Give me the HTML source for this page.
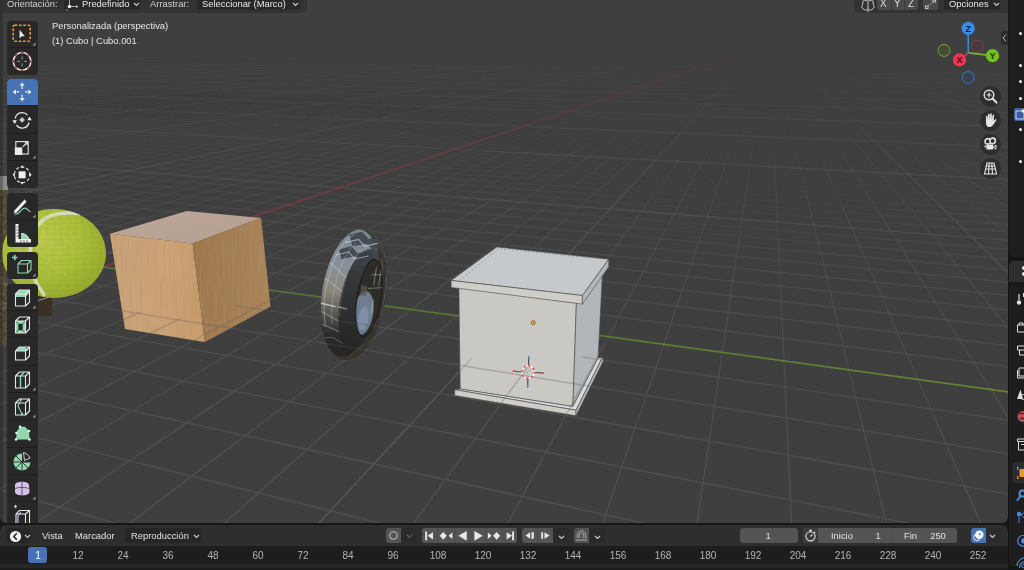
<!DOCTYPE html>
<html><head><meta charset="utf-8">
<style>
*{margin:0;padding:0;box-sizing:border-box}
html,body{width:1024px;height:570px;overflow:hidden;background:#161616;font-family:"Liberation Sans",sans-serif;color:#e6e6e6}
.abs{position:absolute}
#vp{position:absolute;left:0;top:0;width:1008px;height:523px;background:#3f3f3f;border-radius:0 0 6px 6px;overflow:hidden}
#scene{position:absolute;left:0;top:0}
.txt{position:absolute;white-space:nowrap;font-size:9.4px;line-height:1;will-change:transform}
.hdr{position:absolute;top:0;height:12.5px;background:rgba(48,48,48,0.75);}
.dd{position:absolute;top:0;height:10px;background:#282828;border-radius:0 0 3px 3px}
.tb{position:absolute;left:7px;width:31px;background:#282828;border-radius:4px;overflow:hidden}
.tb .b{position:relative;height:27px;border-bottom:1px solid #1e1e1e}
.tb .b:last-child{border-bottom:none}
.tb svg{position:absolute;left:0;top:0}
.nav{position:absolute;left:979.5px;width:21px;height:21px;border-radius:50%;background:rgba(40,40,40,0.75)}
.nav svg{position:absolute;left:0;top:0}
#tl{position:absolute;left:0;top:524.5px;width:1008px;height:46px;background:#1d1d1d;border-radius:6px 6px 0 0;overflow:hidden}
#tlh{position:absolute;left:0;top:0;width:1008px;height:21px;background:#2e2e2e}
.btn{position:absolute;height:15px;border-radius:3px}
.num{will-change:transform;position:absolute;top:550.7px;font-size:10px;line-height:1;color:#b4b4b4;transform:translateX(-50%)}
</style></head><body>
<div id="vp">
<svg id="scene" width="1008" height="523" viewBox="0 0 1008 523">
<filter id="gblur" x="0" y="0" width="1008" height="523" filterUnits="userSpaceOnUse"><feGaussianBlur stdDeviation="0.45"/></filter><g id="gridg" stroke-width="1.4" filter="url(#gblur)"><line x1="149.0" y1="61.7" x2="118.9" y2="62.8" stroke="#585858" stroke-opacity="0.050"/><line x1="118.9" y1="62.8" x2="-6.4" y2="67.6" stroke="#585858" stroke-opacity="0.075"/><line x1="183.4" y1="62.1" x2="180.8" y2="62.3" stroke="#585858" stroke-opacity="0.050"/><line x1="180.8" y1="62.3" x2="-6.5" y2="70.0" stroke="#585858" stroke-opacity="0.075"/><line x1="219.3" y1="62.6" x2="-6.5" y2="72.7" stroke="#585858" stroke-opacity="0.075"/><line x1="256.7" y1="63.2" x2="65.7" y2="72.5" stroke="#585858" stroke-opacity="0.075"/><line x1="65.7" y1="72.5" x2="-6.5" y2="76.0" stroke="#585858" stroke-opacity="0.100"/><line x1="295.7" y1="63.7" x2="167.7" y2="70.6" stroke="#585858" stroke-opacity="0.075"/><line x1="167.7" y1="70.6" x2="-6.6" y2="80.1" stroke="#585858" stroke-opacity="0.100"/><line x1="336.3" y1="64.3" x2="251.7" y2="69.4" stroke="#585858" stroke-opacity="0.075"/><line x1="251.7" y1="69.4" x2="-6.6" y2="85.0" stroke="#585858" stroke-opacity="0.100"/><line x1="378.8" y1="64.8" x2="324.4" y2="68.6" stroke="#585858" stroke-opacity="0.075"/><line x1="324.4" y1="68.6" x2="140.1" y2="81.2" stroke="#585858" stroke-opacity="0.100"/><line x1="140.1" y1="81.2" x2="19.3" y2="89.5" stroke="#585858" stroke-opacity="0.125"/><line x1="19.3" y1="89.5" x2="-6.7" y2="91.3" stroke="#5b5b5b" stroke-opacity="0.125"/><line x1="3.4" y1="96.9" x2="-5.1" y2="97.5" stroke="#585858" stroke-opacity="0.025"/><line x1="19.4" y1="96.5" x2="-5.9" y2="98.5" stroke="#585858" stroke-opacity="0.025"/><line x1="423.3" y1="65.4" x2="390.4" y2="68.1" stroke="#585858" stroke-opacity="0.075"/><line x1="390.4" y1="68.1" x2="253.4" y2="78.9" stroke="#585858" stroke-opacity="0.100"/><line x1="253.4" y1="78.9" x2="119.8" y2="89.5" stroke="#585858" stroke-opacity="0.125"/><line x1="119.8" y1="89.5" x2="62.1" y2="94.1" stroke="#5b5b5b" stroke-opacity="0.125"/><line x1="62.1" y1="94.1" x2="-6.8" y2="99.5" stroke="#5b5b5b" stroke-opacity="0.150"/><line x1="47.0" y1="96.2" x2="-7.7" y2="100.6" stroke="#585858" stroke-opacity="0.025"/><line x1="62.6" y1="95.8" x2="-8.7" y2="101.6" stroke="#585858" stroke-opacity="0.025"/><line x1="77.9" y1="95.5" x2="-9.7" y2="102.7" stroke="#585858" stroke-opacity="0.025"/><line x1="89.5" y1="95.4" x2="-5.9" y2="103.5" stroke="#585858" stroke-opacity="0.025"/><line x1="104.6" y1="95.1" x2="-6.9" y2="104.7" stroke="#585858" stroke-opacity="0.025"/><line x1="116.1" y1="95.1" x2="-7.9" y2="105.9" stroke="#585858" stroke-opacity="0.025"/><line x1="130.9" y1="94.7" x2="-8.9" y2="107.2" stroke="#585858" stroke-opacity="0.025"/><line x1="145.6" y1="94.4" x2="-10.0" y2="108.5" stroke="#585858" stroke-opacity="0.025"/><line x1="157.0" y1="94.4" x2="-5.9" y2="109.4" stroke="#585858" stroke-opacity="0.025"/><line x1="469.8" y1="66.1" x2="452.4" y2="67.7" stroke="#585858" stroke-opacity="0.075"/><line x1="452.4" y1="67.7" x2="347.5" y2="77.5" stroke="#585858" stroke-opacity="0.100"/><line x1="347.5" y1="77.5" x2="220.1" y2="89.5" stroke="#585858" stroke-opacity="0.125"/><line x1="220.1" y1="89.5" x2="42.3" y2="106.1" stroke="#5b5b5b" stroke-opacity="0.150"/><line x1="42.3" y1="106.1" x2="-7.0" y2="110.8" stroke="#5b5b5b" stroke-opacity="0.175"/><line x1="182.6" y1="94.0" x2="-8.0" y2="112.2" stroke="#585858" stroke-opacity="0.025"/><line x1="196.8" y1="93.7" x2="7.0" y2="112.2" stroke="#585858" stroke-opacity="0.025"/><line x1="7.0" y1="112.2" x2="-9.2" y2="113.7" stroke="#585858" stroke-opacity="0.050"/><line x1="208.0" y1="93.7" x2="27.1" y2="111.6" stroke="#585858" stroke-opacity="0.025"/><line x1="27.1" y1="111.6" x2="-10.4" y2="115.3" stroke="#585858" stroke-opacity="0.050"/><line x1="222.0" y1="93.3" x2="46.9" y2="111.0" stroke="#585858" stroke-opacity="0.025"/><line x1="46.9" y1="111.0" x2="-5.9" y2="116.4" stroke="#585858" stroke-opacity="0.050"/><line x1="233.0" y1="93.3" x2="66.4" y2="110.5" stroke="#585858" stroke-opacity="0.025"/><line x1="66.4" y1="110.5" x2="-7.0" y2="118.1" stroke="#585858" stroke-opacity="0.050"/><line x1="244.1" y1="93.3" x2="85.6" y2="110.0" stroke="#585858" stroke-opacity="0.025"/><line x1="85.6" y1="110.0" x2="-8.2" y2="119.8" stroke="#585858" stroke-opacity="0.050"/><line x1="257.7" y1="93.0" x2="100.1" y2="109.9" stroke="#585858" stroke-opacity="0.025"/><line x1="100.1" y1="109.9" x2="-9.5" y2="121.7" stroke="#585858" stroke-opacity="0.050"/><line x1="268.7" y1="92.9" x2="118.9" y2="109.4" stroke="#585858" stroke-opacity="0.025"/><line x1="118.9" y1="109.4" x2="1.4" y2="122.3" stroke="#585858" stroke-opacity="0.050"/><line x1="1.4" y1="122.3" x2="-10.8" y2="123.6" stroke="#585858" stroke-opacity="0.075"/><line x1="282.2" y1="92.6" x2="137.5" y2="108.9" stroke="#585858" stroke-opacity="0.025"/><line x1="137.5" y1="108.9" x2="24.3" y2="121.5" stroke="#585858" stroke-opacity="0.050"/><line x1="24.3" y1="121.5" x2="-5.9" y2="124.9" stroke="#585858" stroke-opacity="0.075"/><line x1="518.5" y1="66.8" x2="510.2" y2="67.7" stroke="#585858" stroke-opacity="0.075"/><line x1="510.2" y1="67.7" x2="430.7" y2="76.8" stroke="#585858" stroke-opacity="0.100"/><line x1="430.7" y1="76.8" x2="341.0" y2="87.1" stroke="#585858" stroke-opacity="0.125"/><line x1="341.0" y1="87.1" x2="318.3" y2="89.7" stroke="#585858" stroke-opacity="0.150"/><line x1="318.3" y1="89.7" x2="233.1" y2="99.5" stroke="#5b5b5b" stroke-opacity="0.150"/><line x1="233.1" y1="99.5" x2="88.8" y2="116.0" stroke="#5b5b5b" stroke-opacity="0.175"/><line x1="88.8" y1="116.0" x2="63.2" y2="119.0" stroke="#5b5b5b" stroke-opacity="0.200"/><line x1="63.2" y1="119.0" x2="-7.1" y2="127.0" stroke="#5f5f5f" stroke-opacity="0.200"/><line x1="303.9" y1="92.6" x2="169.9" y2="108.3" stroke="#585858" stroke-opacity="0.025"/><line x1="169.9" y1="108.3" x2="68.9" y2="120.1" stroke="#585858" stroke-opacity="0.050"/><line x1="68.9" y1="120.1" x2="-8.5" y2="129.2" stroke="#585858" stroke-opacity="0.075"/><line x1="317.1" y1="92.3" x2="187.7" y2="107.8" stroke="#585858" stroke-opacity="0.025"/><line x1="187.7" y1="107.8" x2="90.7" y2="119.4" stroke="#585858" stroke-opacity="0.050"/><line x1="90.7" y1="119.4" x2="-3.2" y2="130.7" stroke="#585858" stroke-opacity="0.075"/><line x1="-3.2" y1="130.7" x2="-9.9" y2="131.5" stroke="#585858" stroke-opacity="0.100"/><line x1="327.9" y1="92.2" x2="201.7" y2="107.7" stroke="#585858" stroke-opacity="0.025"/><line x1="201.7" y1="107.7" x2="107.0" y2="119.4" stroke="#585858" stroke-opacity="0.050"/><line x1="107.0" y1="119.4" x2="22.0" y2="129.8" stroke="#585858" stroke-opacity="0.075"/><line x1="22.0" y1="129.8" x2="-11.4" y2="133.9" stroke="#585858" stroke-opacity="0.100"/><line x1="338.7" y1="92.2" x2="219.3" y2="107.2" stroke="#585858" stroke-opacity="0.025"/><line x1="219.3" y1="107.2" x2="128.3" y2="118.7" stroke="#585858" stroke-opacity="0.050"/><line x1="128.3" y1="118.7" x2="46.7" y2="129.0" stroke="#585858" stroke-opacity="0.075"/><line x1="46.7" y1="129.0" x2="-5.8" y2="135.6" stroke="#585858" stroke-opacity="0.100"/><line x1="351.6" y1="91.9" x2="233.1" y2="107.2" stroke="#585858" stroke-opacity="0.025"/><line x1="233.1" y1="107.2" x2="149.1" y2="118.0" stroke="#585858" stroke-opacity="0.050"/><line x1="149.1" y1="118.0" x2="71.0" y2="128.1" stroke="#585858" stroke-opacity="0.075"/><line x1="71.0" y1="128.1" x2="-7.3" y2="138.2" stroke="#585858" stroke-opacity="0.100"/><line x1="362.3" y1="91.9" x2="250.3" y2="106.7" stroke="#585858" stroke-opacity="0.025"/><line x1="250.3" y1="106.7" x2="169.7" y2="117.4" stroke="#585858" stroke-opacity="0.050"/><line x1="169.7" y1="117.4" x2="94.8" y2="127.3" stroke="#585858" stroke-opacity="0.075"/><line x1="94.8" y1="127.3" x2="13.0" y2="138.1" stroke="#585858" stroke-opacity="0.100"/><line x1="13.0" y1="138.1" x2="-8.8" y2="141.0" stroke="#585858" stroke-opacity="0.125"/><line x1="373.0" y1="91.9" x2="264.0" y2="106.7" stroke="#585858" stroke-opacity="0.025"/><line x1="264.0" y1="106.7" x2="185.6" y2="117.3" stroke="#585858" stroke-opacity="0.050"/><line x1="185.6" y1="117.3" x2="118.2" y2="126.5" stroke="#585858" stroke-opacity="0.075"/><line x1="118.2" y1="126.5" x2="40.0" y2="137.1" stroke="#585858" stroke-opacity="0.100"/><line x1="40.0" y1="137.1" x2="-10.4" y2="143.9" stroke="#585858" stroke-opacity="0.125"/><line x1="383.7" y1="91.8" x2="280.8" y2="106.2" stroke="#585858" stroke-opacity="0.025"/><line x1="280.8" y1="106.2" x2="205.6" y2="116.7" stroke="#585858" stroke-opacity="0.050"/><line x1="205.6" y1="116.7" x2="141.2" y2="125.7" stroke="#585858" stroke-opacity="0.075"/><line x1="141.2" y1="125.7" x2="60.0" y2="137.0" stroke="#585858" stroke-opacity="0.100"/><line x1="60.0" y1="137.0" x2="-12.1" y2="147.1" stroke="#585858" stroke-opacity="0.125"/><line x1="396.2" y1="91.5" x2="294.4" y2="106.1" stroke="#585858" stroke-opacity="0.025"/><line x1="294.4" y1="106.1" x2="225.4" y2="116.0" stroke="#585858" stroke-opacity="0.050"/><line x1="225.4" y1="116.0" x2="158.8" y2="125.6" stroke="#585858" stroke-opacity="0.075"/><line x1="158.8" y1="125.6" x2="86.3" y2="136.0" stroke="#585858" stroke-opacity="0.100"/><line x1="86.3" y1="136.0" x2="-5.8" y2="149.2" stroke="#585858" stroke-opacity="0.125"/><line x1="569.7" y1="67.5" x2="567.4" y2="67.8" stroke="#585858" stroke-opacity="0.075"/><line x1="567.4" y1="67.8" x2="507.2" y2="76.7" stroke="#585858" stroke-opacity="0.100"/><line x1="507.2" y1="76.7" x2="442.6" y2="86.2" stroke="#585858" stroke-opacity="0.125"/><line x1="442.6" y1="86.2" x2="419.0" y2="89.7" stroke="#585858" stroke-opacity="0.150"/><line x1="419.0" y1="89.7" x2="371.1" y2="96.8" stroke="#5b5b5b" stroke-opacity="0.150"/><line x1="371.1" y1="96.8" x2="292.9" y2="108.3" stroke="#5b5b5b" stroke-opacity="0.175"/><line x1="292.9" y1="108.3" x2="221.0" y2="118.9" stroke="#5b5b5b" stroke-opacity="0.200"/><line x1="221.0" y1="118.9" x2="195.1" y2="122.8" stroke="#5f5f5f" stroke-opacity="0.200"/><line x1="195.1" y1="122.8" x2="60.7" y2="142.6" stroke="#5f5f5f" stroke-opacity="0.225"/><line x1="60.7" y1="142.6" x2="-7.5" y2="152.6" stroke="#5f5f5f" stroke-opacity="0.250"/><line x1="417.4" y1="91.5" x2="324.4" y2="105.6" stroke="#585858" stroke-opacity="0.025"/><line x1="324.4" y1="105.6" x2="260.2" y2="115.4" stroke="#585858" stroke-opacity="0.050"/><line x1="260.2" y1="115.4" x2="203.1" y2="124.0" stroke="#585858" stroke-opacity="0.075"/><line x1="203.1" y1="124.0" x2="131.5" y2="134.9" stroke="#585858" stroke-opacity="0.100"/><line x1="131.5" y1="134.9" x2="46.6" y2="147.8" stroke="#585858" stroke-opacity="0.125"/><line x1="46.6" y1="147.8" x2="-9.2" y2="156.3" stroke="#585858" stroke-opacity="0.150"/><line x1="428.0" y1="91.4" x2="340.5" y2="105.1" stroke="#585858" stroke-opacity="0.025"/><line x1="340.5" y1="105.1" x2="275.7" y2="115.3" stroke="#585858" stroke-opacity="0.050"/><line x1="275.7" y1="115.3" x2="224.7" y2="123.3" stroke="#585858" stroke-opacity="0.075"/><line x1="224.7" y1="123.3" x2="150.9" y2="134.8" stroke="#585858" stroke-opacity="0.100"/><line x1="150.9" y1="134.8" x2="75.8" y2="146.6" stroke="#585858" stroke-opacity="0.125"/><line x1="75.8" y1="146.6" x2="-11.1" y2="160.2" stroke="#585858" stroke-opacity="0.150"/><line x1="440.2" y1="91.2" x2="353.9" y2="105.1" stroke="#585858" stroke-opacity="0.025"/><line x1="353.9" y1="105.1" x2="294.5" y2="114.7" stroke="#585858" stroke-opacity="0.050"/><line x1="294.5" y1="114.7" x2="241.7" y2="123.2" stroke="#585858" stroke-opacity="0.075"/><line x1="241.7" y1="123.2" x2="175.7" y2="133.9" stroke="#585858" stroke-opacity="0.100"/><line x1="175.7" y1="133.9" x2="97.7" y2="146.5" stroke="#585858" stroke-opacity="0.125"/><line x1="97.7" y1="146.5" x2="13.6" y2="160.1" stroke="#585858" stroke-opacity="0.150"/><line x1="13.6" y1="160.1" x2="-13.1" y2="164.4" stroke="#585858" stroke-opacity="0.175"/><line x1="450.7" y1="91.1" x2="369.7" y2="104.6" stroke="#585858" stroke-opacity="0.025"/><line x1="369.7" y1="104.6" x2="309.8" y2="114.6" stroke="#585858" stroke-opacity="0.050"/><line x1="309.8" y1="114.6" x2="262.8" y2="122.5" stroke="#585858" stroke-opacity="0.075"/><line x1="262.8" y1="122.5" x2="194.9" y2="133.8" stroke="#585858" stroke-opacity="0.100"/><line x1="194.9" y1="133.8" x2="126.0" y2="145.3" stroke="#585858" stroke-opacity="0.125"/><line x1="126.0" y1="145.3" x2="46.5" y2="158.5" stroke="#585858" stroke-opacity="0.150"/><line x1="46.5" y1="158.5" x2="-5.8" y2="167.3" stroke="#585858" stroke-opacity="0.175"/><line x1="461.2" y1="91.1" x2="382.9" y2="104.6" stroke="#585858" stroke-opacity="0.025"/><line x1="382.9" y1="104.6" x2="328.2" y2="114.0" stroke="#585858" stroke-opacity="0.050"/><line x1="328.2" y1="114.0" x2="279.6" y2="122.4" stroke="#585858" stroke-opacity="0.075"/><line x1="279.6" y1="122.4" x2="214.1" y2="133.7" stroke="#585858" stroke-opacity="0.100"/><line x1="214.1" y1="133.7" x2="147.6" y2="145.2" stroke="#585858" stroke-opacity="0.125"/><line x1="147.6" y1="145.2" x2="78.6" y2="157.1" stroke="#585858" stroke-opacity="0.150"/><line x1="78.6" y1="157.1" x2="-7.7" y2="171.9" stroke="#585858" stroke-opacity="0.175"/><line x1="471.7" y1="91.1" x2="396.1" y2="104.6" stroke="#585858" stroke-opacity="0.025"/><line x1="396.1" y1="104.6" x2="343.3" y2="114.0" stroke="#585858" stroke-opacity="0.050"/><line x1="343.3" y1="114.0" x2="296.5" y2="122.3" stroke="#585858" stroke-opacity="0.075"/><line x1="296.5" y1="122.3" x2="238.0" y2="132.8" stroke="#585858" stroke-opacity="0.100"/><line x1="238.0" y1="132.8" x2="175.0" y2="144.0" stroke="#585858" stroke-opacity="0.125"/><line x1="175.0" y1="144.0" x2="102.5" y2="156.9" stroke="#585858" stroke-opacity="0.150"/><line x1="102.5" y1="156.9" x2="28.6" y2="170.1" stroke="#585858" stroke-opacity="0.175"/><line x1="28.6" y1="170.1" x2="-9.8" y2="177.0" stroke="#585858" stroke-opacity="0.200"/><line x1="482.2" y1="91.0" x2="411.5" y2="104.1" stroke="#585858" stroke-opacity="0.025"/><line x1="411.5" y1="104.1" x2="361.3" y2="113.4" stroke="#585858" stroke-opacity="0.050"/><line x1="361.3" y1="113.4" x2="313.3" y2="122.3" stroke="#585858" stroke-opacity="0.075"/><line x1="313.3" y1="122.3" x2="256.9" y2="132.7" stroke="#585858" stroke-opacity="0.100"/><line x1="256.9" y1="132.7" x2="196.3" y2="143.9" stroke="#585858" stroke-opacity="0.125"/><line x1="196.3" y1="143.9" x2="133.5" y2="155.5" stroke="#585858" stroke-opacity="0.150"/><line x1="133.5" y1="155.5" x2="64.0" y2="168.3" stroke="#585858" stroke-opacity="0.175"/><line x1="64.0" y1="168.3" x2="-12.0" y2="182.4" stroke="#585858" stroke-opacity="0.200"/><line x1="494.0" y1="90.8" x2="424.6" y2="104.1" stroke="#585858" stroke-opacity="0.025"/><line x1="424.6" y1="104.1" x2="376.3" y2="113.3" stroke="#585858" stroke-opacity="0.050"/><line x1="376.3" y1="113.3" x2="333.4" y2="121.5" stroke="#585858" stroke-opacity="0.075"/><line x1="333.4" y1="121.5" x2="275.8" y2="132.6" stroke="#585858" stroke-opacity="0.100"/><line x1="275.8" y1="132.6" x2="222.8" y2="142.7" stroke="#585858" stroke-opacity="0.125"/><line x1="222.8" y1="142.7" x2="157.1" y2="155.3" stroke="#585858" stroke-opacity="0.150"/><line x1="157.1" y1="155.3" x2="98.4" y2="166.6" stroke="#585858" stroke-opacity="0.175"/><line x1="98.4" y1="166.6" x2="17.2" y2="182.2" stroke="#585858" stroke-opacity="0.200"/><line x1="17.2" y1="182.2" x2="-14.4" y2="188.2" stroke="#585858" stroke-opacity="0.225"/><line x1="504.4" y1="90.7" x2="437.7" y2="104.0" stroke="#585858" stroke-opacity="0.025"/><line x1="437.7" y1="104.0" x2="393.8" y2="112.7" stroke="#585858" stroke-opacity="0.050"/><line x1="393.8" y1="112.7" x2="350.1" y2="121.5" stroke="#585858" stroke-opacity="0.075"/><line x1="350.1" y1="121.5" x2="294.7" y2="132.5" stroke="#585858" stroke-opacity="0.100"/><line x1="294.7" y1="132.5" x2="243.8" y2="142.6" stroke="#585858" stroke-opacity="0.125"/><line x1="243.8" y1="142.6" x2="187.0" y2="153.9" stroke="#585858" stroke-opacity="0.150"/><line x1="187.0" y1="153.9" x2="124.2" y2="166.4" stroke="#585858" stroke-opacity="0.175"/><line x1="124.2" y1="166.4" x2="55.9" y2="180.1" stroke="#585858" stroke-opacity="0.200"/><line x1="55.9" y1="180.1" x2="-5.7" y2="192.3" stroke="#585858" stroke-opacity="0.225"/><line x1="623.4" y1="68.2" x2="581.2" y2="76.9" stroke="#585858" stroke-opacity="0.100"/><line x1="581.2" y1="76.9" x2="537.5" y2="86.0" stroke="#585858" stroke-opacity="0.125"/><line x1="537.5" y1="86.0" x2="519.7" y2="89.7" stroke="#585858" stroke-opacity="0.150"/><line x1="519.7" y1="89.7" x2="490.2" y2="95.8" stroke="#5b5b5b" stroke-opacity="0.150"/><line x1="490.2" y1="95.8" x2="440.7" y2="106.1" stroke="#5b5b5b" stroke-opacity="0.175"/><line x1="440.7" y1="106.1" x2="387.4" y2="117.1" stroke="#5b5b5b" stroke-opacity="0.200"/><line x1="387.4" y1="117.1" x2="378.8" y2="118.9" stroke="#5b5b5b" stroke-opacity="0.225"/><line x1="378.8" y1="118.9" x2="325.2" y2="130.0" stroke="#5f5f5f" stroke-opacity="0.225"/><line x1="325.2" y1="130.0" x2="254.7" y2="144.6" stroke="#5f5f5f" stroke-opacity="0.250"/><line x1="254.7" y1="144.6" x2="178.3" y2="160.4" stroke="#5f5f5f" stroke-opacity="0.275"/><line x1="178.3" y1="160.4" x2="171.5" y2="161.8" stroke="#626262" stroke-opacity="0.275"/><line x1="171.5" y1="161.8" x2="56.2" y2="185.7" stroke="#626262" stroke-opacity="0.300"/><line x1="56.2" y1="185.7" x2="-8.0" y2="199.0" stroke="#626262" stroke-opacity="0.325"/><line x1="525.2" y1="90.7" x2="465.7" y2="103.5" stroke="#585858" stroke-opacity="0.025"/><line x1="465.7" y1="103.5" x2="423.5" y2="112.6" stroke="#585858" stroke-opacity="0.050"/><line x1="423.5" y1="112.6" x2="383.2" y2="121.3" stroke="#585858" stroke-opacity="0.075"/><line x1="383.2" y1="121.3" x2="336.1" y2="131.5" stroke="#585858" stroke-opacity="0.100"/><line x1="336.1" y1="131.5" x2="285.5" y2="142.4" stroke="#585858" stroke-opacity="0.125"/><line x1="285.5" y1="142.4" x2="239.1" y2="152.4" stroke="#585858" stroke-opacity="0.150"/><line x1="239.1" y1="152.4" x2="182.8" y2="164.6" stroke="#585858" stroke-opacity="0.175"/><line x1="182.8" y1="164.6" x2="130.0" y2="176.0" stroke="#585858" stroke-opacity="0.200"/><line x1="130.0" y1="176.0" x2="66.7" y2="189.7" stroke="#585858" stroke-opacity="0.225"/><line x1="66.7" y1="189.7" x2="-10.5" y2="206.4" stroke="#585858" stroke-opacity="0.250"/><line x1="535.6" y1="90.6" x2="478.6" y2="103.5" stroke="#585858" stroke-opacity="0.025"/><line x1="478.6" y1="103.5" x2="440.5" y2="112.1" stroke="#585858" stroke-opacity="0.050"/><line x1="440.5" y1="112.1" x2="399.7" y2="121.3" stroke="#585858" stroke-opacity="0.075"/><line x1="399.7" y1="121.3" x2="354.7" y2="131.4" stroke="#585858" stroke-opacity="0.100"/><line x1="354.7" y1="131.4" x2="310.8" y2="141.3" stroke="#585858" stroke-opacity="0.125"/><line x1="310.8" y1="141.3" x2="262.0" y2="152.3" stroke="#585858" stroke-opacity="0.150"/><line x1="262.0" y1="152.3" x2="214.7" y2="163.0" stroke="#585858" stroke-opacity="0.175"/><line x1="214.7" y1="163.0" x2="157.7" y2="175.8" stroke="#585858" stroke-opacity="0.200"/><line x1="157.7" y1="175.8" x2="97.2" y2="189.5" stroke="#585858" stroke-opacity="0.225"/><line x1="97.2" y1="189.5" x2="35.0" y2="203.5" stroke="#585858" stroke-opacity="0.250"/><line x1="35.0" y1="203.5" x2="-13.3" y2="214.4" stroke="#585858" stroke-opacity="0.275"/><line x1="545.9" y1="90.6" x2="491.5" y2="103.4" stroke="#585858" stroke-opacity="0.025"/><line x1="491.5" y1="103.4" x2="455.2" y2="112.0" stroke="#585858" stroke-opacity="0.050"/><line x1="455.2" y1="112.0" x2="416.2" y2="121.2" stroke="#585858" stroke-opacity="0.075"/><line x1="416.2" y1="121.2" x2="373.3" y2="131.3" stroke="#585858" stroke-opacity="0.100"/><line x1="373.3" y1="131.3" x2="331.4" y2="141.2" stroke="#585858" stroke-opacity="0.125"/><line x1="331.4" y1="141.2" x2="284.8" y2="152.2" stroke="#585858" stroke-opacity="0.150"/><line x1="284.8" y1="152.2" x2="239.7" y2="162.8" stroke="#585858" stroke-opacity="0.175"/><line x1="239.7" y1="162.8" x2="192.7" y2="173.9" stroke="#585858" stroke-opacity="0.200"/><line x1="192.7" y1="173.9" x2="136.6" y2="187.1" stroke="#585858" stroke-opacity="0.225"/><line x1="136.6" y1="187.1" x2="79.0" y2="200.7" stroke="#585858" stroke-opacity="0.250"/><line x1="79.0" y1="200.7" x2="9.9" y2="217.0" stroke="#585858" stroke-opacity="0.275"/><line x1="9.9" y1="217.0" x2="-16.3" y2="223.2" stroke="#585858" stroke-opacity="0.300"/><line x1="556.3" y1="90.6" x2="504.4" y2="103.4" stroke="#585858" stroke-opacity="0.025"/><line x1="504.4" y1="103.4" x2="469.8" y2="112.0" stroke="#585858" stroke-opacity="0.050"/><line x1="469.8" y1="112.0" x2="432.7" y2="121.1" stroke="#585858" stroke-opacity="0.075"/><line x1="432.7" y1="121.1" x2="391.8" y2="131.2" stroke="#585858" stroke-opacity="0.100"/><line x1="391.8" y1="131.2" x2="351.9" y2="141.1" stroke="#585858" stroke-opacity="0.125"/><line x1="351.9" y1="141.1" x2="312.4" y2="150.9" stroke="#585858" stroke-opacity="0.150"/><line x1="312.4" y1="150.9" x2="264.6" y2="162.7" stroke="#585858" stroke-opacity="0.175"/><line x1="264.6" y1="162.7" x2="219.9" y2="173.7" stroke="#585858" stroke-opacity="0.200"/><line x1="219.9" y1="173.7" x2="174.8" y2="184.9" stroke="#585858" stroke-opacity="0.225"/><line x1="174.8" y1="184.9" x2="121.6" y2="198.0" stroke="#585858" stroke-opacity="0.250"/><line x1="121.6" y1="198.0" x2="57.9" y2="213.8" stroke="#585858" stroke-opacity="0.275"/><line x1="57.9" y1="213.8" x2="-5.6" y2="229.5" stroke="#585858" stroke-opacity="0.300"/><line x1="567.6" y1="90.3" x2="518.9" y2="103.0" stroke="#585858" stroke-opacity="0.025"/><line x1="518.9" y1="103.0" x2="484.4" y2="111.9" stroke="#585858" stroke-opacity="0.050"/><line x1="484.4" y1="111.9" x2="449.2" y2="121.1" stroke="#585858" stroke-opacity="0.075"/><line x1="449.2" y1="121.1" x2="410.3" y2="131.2" stroke="#585858" stroke-opacity="0.100"/><line x1="410.3" y1="131.2" x2="372.4" y2="141.0" stroke="#585858" stroke-opacity="0.125"/><line x1="372.4" y1="141.0" x2="334.9" y2="150.7" stroke="#585858" stroke-opacity="0.150"/><line x1="334.9" y1="150.7" x2="295.0" y2="161.1" stroke="#585858" stroke-opacity="0.175"/><line x1="295.0" y1="161.1" x2="253.6" y2="171.8" stroke="#585858" stroke-opacity="0.200"/><line x1="253.6" y1="171.8" x2="204.2" y2="184.7" stroke="#585858" stroke-opacity="0.225"/><line x1="204.2" y1="184.7" x2="153.7" y2="197.8" stroke="#585858" stroke-opacity="0.250"/><line x1="153.7" y1="197.8" x2="104.2" y2="210.6" stroke="#585858" stroke-opacity="0.275"/><line x1="104.2" y1="210.6" x2="46.0" y2="225.8" stroke="#585858" stroke-opacity="0.300"/><line x1="46.0" y1="225.8" x2="-8.5" y2="239.9" stroke="#585858" stroke-opacity="0.325"/><line x1="577.9" y1="90.3" x2="531.7" y2="102.9" stroke="#585858" stroke-opacity="0.025"/><line x1="531.7" y1="102.9" x2="500.8" y2="111.3" stroke="#585858" stroke-opacity="0.050"/><line x1="500.8" y1="111.3" x2="465.6" y2="121.0" stroke="#585858" stroke-opacity="0.075"/><line x1="465.6" y1="121.0" x2="428.7" y2="131.1" stroke="#585858" stroke-opacity="0.100"/><line x1="428.7" y1="131.1" x2="392.8" y2="140.9" stroke="#585858" stroke-opacity="0.125"/><line x1="392.8" y1="140.9" x2="357.3" y2="150.6" stroke="#585858" stroke-opacity="0.150"/><line x1="357.3" y1="150.6" x2="319.5" y2="160.9" stroke="#585858" stroke-opacity="0.175"/><line x1="319.5" y1="160.9" x2="280.3" y2="171.7" stroke="#585858" stroke-opacity="0.200"/><line x1="280.3" y1="171.7" x2="240.8" y2="182.5" stroke="#585858" stroke-opacity="0.225"/><line x1="240.8" y1="182.5" x2="194.3" y2="195.2" stroke="#585858" stroke-opacity="0.250"/><line x1="194.3" y1="195.2" x2="138.9" y2="210.3" stroke="#585858" stroke-opacity="0.275"/><line x1="138.9" y1="210.3" x2="83.8" y2="225.4" stroke="#585858" stroke-opacity="0.300"/><line x1="83.8" y1="225.4" x2="32.3" y2="239.5" stroke="#585858" stroke-opacity="0.325"/><line x1="32.3" y1="239.5" x2="-11.7" y2="251.5" stroke="#585858" stroke-opacity="0.350"/><line x1="588.1" y1="90.3" x2="544.4" y2="102.9" stroke="#585858" stroke-opacity="0.025"/><line x1="544.4" y1="102.9" x2="515.3" y2="111.3" stroke="#585858" stroke-opacity="0.050"/><line x1="515.3" y1="111.3" x2="482.0" y2="120.9" stroke="#585858" stroke-opacity="0.075"/><line x1="482.0" y1="120.9" x2="447.2" y2="131.0" stroke="#585858" stroke-opacity="0.100"/><line x1="447.2" y1="131.0" x2="413.2" y2="140.8" stroke="#585858" stroke-opacity="0.125"/><line x1="413.2" y1="140.8" x2="379.7" y2="150.5" stroke="#585858" stroke-opacity="0.150"/><line x1="379.7" y1="150.5" x2="344.0" y2="160.8" stroke="#585858" stroke-opacity="0.175"/><line x1="344.0" y1="160.8" x2="307.0" y2="171.5" stroke="#585858" stroke-opacity="0.200"/><line x1="307.0" y1="171.5" x2="269.7" y2="182.3" stroke="#585858" stroke-opacity="0.225"/><line x1="269.7" y1="182.3" x2="225.8" y2="194.9" stroke="#585858" stroke-opacity="0.250"/><line x1="225.8" y1="194.9" x2="182.9" y2="207.3" stroke="#585858" stroke-opacity="0.275"/><line x1="182.9" y1="207.3" x2="132.6" y2="221.9" stroke="#585858" stroke-opacity="0.300"/><line x1="132.6" y1="221.9" x2="72.9" y2="239.1" stroke="#585858" stroke-opacity="0.325"/><line x1="72.9" y1="239.1" x2="16.5" y2="255.4" stroke="#585858" stroke-opacity="0.350"/><line x1="16.5" y1="255.4" x2="-15.4" y2="264.6" stroke="#585858" stroke-opacity="0.375"/><line x1="598.4" y1="90.2" x2="557.2" y2="102.8" stroke="#585858" stroke-opacity="0.025"/><line x1="557.2" y1="102.8" x2="529.7" y2="111.2" stroke="#585858" stroke-opacity="0.050"/><line x1="529.7" y1="111.2" x2="498.3" y2="120.9" stroke="#585858" stroke-opacity="0.075"/><line x1="498.3" y1="120.9" x2="465.5" y2="130.9" stroke="#585858" stroke-opacity="0.100"/><line x1="465.5" y1="130.9" x2="433.6" y2="140.7" stroke="#585858" stroke-opacity="0.125"/><line x1="433.6" y1="140.7" x2="402.0" y2="150.4" stroke="#585858" stroke-opacity="0.150"/><line x1="402.0" y1="150.4" x2="368.4" y2="160.6" stroke="#585858" stroke-opacity="0.175"/><line x1="368.4" y1="160.6" x2="338.9" y2="169.7" stroke="#585858" stroke-opacity="0.200"/><line x1="338.9" y1="169.7" x2="298.4" y2="182.1" stroke="#585858" stroke-opacity="0.225"/><line x1="298.4" y1="182.1" x2="264.5" y2="192.4" stroke="#585858" stroke-opacity="0.250"/><line x1="264.5" y1="192.4" x2="225.4" y2="204.4" stroke="#585858" stroke-opacity="0.275"/><line x1="225.4" y1="204.4" x2="179.6" y2="218.4" stroke="#585858" stroke-opacity="0.300"/><line x1="179.6" y1="218.4" x2="125.5" y2="235.0" stroke="#585858" stroke-opacity="0.325"/><line x1="125.5" y1="235.0" x2="74.4" y2="250.6" stroke="#585858" stroke-opacity="0.350"/><line x1="74.4" y1="250.6" x2="14.5" y2="269.0" stroke="#585858" stroke-opacity="0.375"/><line x1="14.5" y1="269.0" x2="-19.5" y2="279.4" stroke="#585858" stroke-opacity="0.400"/><line x1="608.6" y1="90.2" x2="570.0" y2="102.8" stroke="#585858" stroke-opacity="0.025"/><line x1="570.0" y1="102.8" x2="544.2" y2="111.2" stroke="#585858" stroke-opacity="0.050"/><line x1="544.2" y1="111.2" x2="514.7" y2="120.8" stroke="#585858" stroke-opacity="0.075"/><line x1="514.7" y1="120.8" x2="483.9" y2="130.8" stroke="#585858" stroke-opacity="0.100"/><line x1="483.9" y1="130.8" x2="453.9" y2="140.6" stroke="#585858" stroke-opacity="0.125"/><line x1="453.9" y1="140.6" x2="424.2" y2="150.2" stroke="#585858" stroke-opacity="0.150"/><line x1="424.2" y1="150.2" x2="397.0" y2="159.1" stroke="#585858" stroke-opacity="0.175"/><line x1="397.0" y1="159.1" x2="365.1" y2="169.5" stroke="#585858" stroke-opacity="0.200"/><line x1="365.1" y1="169.5" x2="333.0" y2="180.0" stroke="#585858" stroke-opacity="0.225"/><line x1="333.0" y1="180.0" x2="295.3" y2="192.2" stroke="#585858" stroke-opacity="0.250"/><line x1="295.3" y1="192.2" x2="258.6" y2="204.1" stroke="#585858" stroke-opacity="0.275"/><line x1="258.6" y1="204.1" x2="215.8" y2="218.1" stroke="#585858" stroke-opacity="0.300"/><line x1="215.8" y1="218.1" x2="175.9" y2="231.1" stroke="#585858" stroke-opacity="0.325"/><line x1="175.9" y1="231.1" x2="129.9" y2="246.1" stroke="#585858" stroke-opacity="0.350"/><line x1="129.9" y1="246.1" x2="76.0" y2="263.6" stroke="#585858" stroke-opacity="0.375"/><line x1="76.0" y1="263.6" x2="12.3" y2="284.3" stroke="#585858" stroke-opacity="0.400"/><line x1="12.3" y1="284.3" x2="-5.5" y2="290.1" stroke="#585858" stroke-opacity="0.425"/><line x1="629.1" y1="90.1" x2="595.4" y2="102.7" stroke="#585858" stroke-opacity="0.025"/><line x1="595.4" y1="102.7" x2="573.0" y2="111.1" stroke="#585858" stroke-opacity="0.050"/><line x1="573.0" y1="111.1" x2="545.6" y2="121.3" stroke="#585858" stroke-opacity="0.075"/><line x1="545.6" y1="121.3" x2="520.5" y2="130.6" stroke="#585858" stroke-opacity="0.100"/><line x1="520.5" y1="130.6" x2="494.4" y2="140.4" stroke="#585858" stroke-opacity="0.125"/><line x1="494.4" y1="140.4" x2="468.6" y2="150.0" stroke="#585858" stroke-opacity="0.150"/><line x1="468.6" y1="150.0" x2="444.9" y2="158.8" stroke="#585858" stroke-opacity="0.175"/><line x1="444.9" y1="158.8" x2="417.2" y2="169.2" stroke="#585858" stroke-opacity="0.200"/><line x1="417.2" y1="169.2" x2="389.3" y2="179.6" stroke="#585858" stroke-opacity="0.225"/><line x1="389.3" y1="179.6" x2="362.5" y2="189.6" stroke="#585858" stroke-opacity="0.250"/><line x1="362.5" y1="189.6" x2="331.6" y2="201.1" stroke="#585858" stroke-opacity="0.275"/><line x1="331.6" y1="201.1" x2="295.6" y2="214.5" stroke="#585858" stroke-opacity="0.300"/><line x1="295.6" y1="214.5" x2="262.2" y2="227.0" stroke="#585858" stroke-opacity="0.325"/><line x1="262.2" y1="227.0" x2="223.8" y2="241.3" stroke="#585858" stroke-opacity="0.350"/><line x1="223.8" y1="241.3" x2="179.0" y2="258.0" stroke="#585858" stroke-opacity="0.375"/><line x1="179.0" y1="258.0" x2="140.3" y2="272.4" stroke="#585858" stroke-opacity="0.400"/><line x1="140.3" y1="272.4" x2="80.0" y2="294.9" stroke="#585858" stroke-opacity="0.425"/><line x1="80.0" y1="294.9" x2="26.6" y2="314.8" stroke="#585858" stroke-opacity="0.450"/><line x1="26.6" y1="314.8" x2="-13.8" y2="329.9" stroke="#585858" stroke-opacity="0.475"/><line x1="639.3" y1="90.1" x2="609.1" y2="102.3" stroke="#585858" stroke-opacity="0.025"/><line x1="609.1" y1="102.3" x2="587.3" y2="111.0" stroke="#585858" stroke-opacity="0.050"/><line x1="587.3" y1="111.0" x2="562.0" y2="121.2" stroke="#585858" stroke-opacity="0.075"/><line x1="562.0" y1="121.2" x2="538.8" y2="130.6" stroke="#585858" stroke-opacity="0.100"/><line x1="538.8" y1="130.6" x2="514.6" y2="140.3" stroke="#585858" stroke-opacity="0.125"/><line x1="514.6" y1="140.3" x2="490.7" y2="149.9" stroke="#585858" stroke-opacity="0.150"/><line x1="490.7" y1="149.9" x2="468.8" y2="158.7" stroke="#585858" stroke-opacity="0.175"/><line x1="468.8" y1="158.7" x2="443.2" y2="169.0" stroke="#585858" stroke-opacity="0.200"/><line x1="443.2" y1="169.0" x2="417.4" y2="179.4" stroke="#585858" stroke-opacity="0.225"/><line x1="417.4" y1="179.4" x2="392.6" y2="189.3" stroke="#585858" stroke-opacity="0.250"/><line x1="392.6" y1="189.3" x2="364.0" y2="200.8" stroke="#585858" stroke-opacity="0.275"/><line x1="364.0" y1="200.8" x2="337.8" y2="211.4" stroke="#585858" stroke-opacity="0.300"/><line x1="337.8" y1="211.4" x2="299.9" y2="226.6" stroke="#585858" stroke-opacity="0.325"/><line x1="299.9" y1="226.6" x2="273.8" y2="237.1" stroke="#585858" stroke-opacity="0.350"/><line x1="273.8" y1="237.1" x2="234.0" y2="253.1" stroke="#585858" stroke-opacity="0.375"/><line x1="234.0" y1="253.1" x2="187.3" y2="271.9" stroke="#585858" stroke-opacity="0.400"/><line x1="187.3" y1="271.9" x2="146.6" y2="288.3" stroke="#585858" stroke-opacity="0.425"/><line x1="146.6" y1="288.3" x2="99.7" y2="307.1" stroke="#585858" stroke-opacity="0.450"/><line x1="99.7" y1="307.1" x2="-19.1" y2="354.9" stroke="#585858" stroke-opacity="0.475"/><line x1="649.5" y1="90.1" x2="621.7" y2="102.2" stroke="#585858" stroke-opacity="0.025"/><line x1="621.7" y1="102.2" x2="601.7" y2="111.0" stroke="#585858" stroke-opacity="0.050"/><line x1="601.7" y1="111.0" x2="578.3" y2="121.2" stroke="#585858" stroke-opacity="0.075"/><line x1="578.3" y1="121.2" x2="557.0" y2="130.5" stroke="#585858" stroke-opacity="0.100"/><line x1="557.0" y1="130.5" x2="534.8" y2="140.2" stroke="#585858" stroke-opacity="0.125"/><line x1="534.8" y1="140.2" x2="512.8" y2="149.7" stroke="#585858" stroke-opacity="0.150"/><line x1="512.8" y1="149.7" x2="492.7" y2="158.5" stroke="#585858" stroke-opacity="0.175"/><line x1="492.7" y1="158.5" x2="469.1" y2="168.8" stroke="#585858" stroke-opacity="0.200"/><line x1="469.1" y1="168.8" x2="445.4" y2="179.2" stroke="#585858" stroke-opacity="0.225"/><line x1="445.4" y1="179.2" x2="422.6" y2="189.1" stroke="#585858" stroke-opacity="0.250"/><line x1="422.6" y1="189.1" x2="396.3" y2="200.6" stroke="#585858" stroke-opacity="0.275"/><line x1="396.3" y1="200.6" x2="372.3" y2="211.1" stroke="#585858" stroke-opacity="0.300"/><line x1="372.3" y1="211.1" x2="344.9" y2="223.0" stroke="#585858" stroke-opacity="0.325"/><line x1="344.9" y1="223.0" x2="313.5" y2="236.7" stroke="#585858" stroke-opacity="0.350"/><line x1="313.5" y1="236.7" x2="277.0" y2="252.7" stroke="#585858" stroke-opacity="0.375"/><line x1="277.0" y1="252.7" x2="245.5" y2="266.4" stroke="#585858" stroke-opacity="0.400"/><line x1="245.5" y1="266.4" x2="209.8" y2="282.0" stroke="#585858" stroke-opacity="0.425"/><line x1="209.8" y1="282.0" x2="153.8" y2="306.4" stroke="#585858" stroke-opacity="0.450"/><line x1="153.8" y1="306.4" x2="103.8" y2="328.2" stroke="#585858" stroke-opacity="0.475"/><line x1="103.8" y1="328.2" x2="-25.3" y2="384.5" stroke="#585858" stroke-opacity="0.500"/><line x1="659.7" y1="90.1" x2="634.3" y2="102.2" stroke="#585858" stroke-opacity="0.025"/><line x1="634.3" y1="102.2" x2="616.0" y2="110.9" stroke="#585858" stroke-opacity="0.050"/><line x1="616.0" y1="110.9" x2="594.7" y2="121.1" stroke="#585858" stroke-opacity="0.075"/><line x1="594.7" y1="121.1" x2="573.5" y2="131.2" stroke="#585858" stroke-opacity="0.100"/><line x1="573.5" y1="131.2" x2="554.9" y2="140.1" stroke="#585858" stroke-opacity="0.125"/><line x1="554.9" y1="140.1" x2="534.8" y2="149.6" stroke="#585858" stroke-opacity="0.150"/><line x1="534.8" y1="149.6" x2="513.6" y2="159.8" stroke="#585858" stroke-opacity="0.175"/><line x1="513.6" y1="159.8" x2="494.9" y2="168.7" stroke="#585858" stroke-opacity="0.200"/><line x1="494.9" y1="168.7" x2="473.3" y2="179.0" stroke="#585858" stroke-opacity="0.225"/><line x1="473.3" y1="179.0" x2="452.5" y2="188.9" stroke="#585858" stroke-opacity="0.250"/><line x1="452.5" y1="188.9" x2="428.6" y2="200.3" stroke="#585858" stroke-opacity="0.275"/><line x1="428.6" y1="200.3" x2="406.6" y2="210.8" stroke="#585858" stroke-opacity="0.300"/><line x1="406.6" y1="210.8" x2="381.7" y2="222.7" stroke="#585858" stroke-opacity="0.325"/><line x1="381.7" y1="222.7" x2="353.0" y2="236.3" stroke="#585858" stroke-opacity="0.350"/><line x1="353.0" y1="236.3" x2="328.5" y2="248.0" stroke="#585858" stroke-opacity="0.375"/><line x1="328.5" y1="248.0" x2="291.1" y2="265.9" stroke="#585858" stroke-opacity="0.400"/><line x1="291.1" y1="265.9" x2="258.5" y2="281.4" stroke="#585858" stroke-opacity="0.425"/><line x1="258.5" y1="281.4" x2="221.2" y2="299.2" stroke="#585858" stroke-opacity="0.450"/><line x1="221.2" y1="299.2" x2="178.0" y2="319.8" stroke="#585858" stroke-opacity="0.475"/><line x1="178.0" y1="319.8" x2="67.3" y2="372.6" stroke="#585858" stroke-opacity="0.500"/><line x1="67.3" y1="372.6" x2="-5.2" y2="407.2" stroke="#585858" stroke-opacity="0.525"/><line x1="669.9" y1="90.0" x2="646.8" y2="102.2" stroke="#585858" stroke-opacity="0.025"/><line x1="646.8" y1="102.2" x2="629.3" y2="111.4" stroke="#585858" stroke-opacity="0.050"/><line x1="629.3" y1="111.4" x2="611.0" y2="121.0" stroke="#585858" stroke-opacity="0.075"/><line x1="611.0" y1="121.0" x2="591.8" y2="131.1" stroke="#585858" stroke-opacity="0.100"/><line x1="591.8" y1="131.1" x2="575.0" y2="140.0" stroke="#585858" stroke-opacity="0.125"/><line x1="575.0" y1="140.0" x2="556.8" y2="149.5" stroke="#585858" stroke-opacity="0.150"/><line x1="556.8" y1="149.5" x2="537.6" y2="159.6" stroke="#585858" stroke-opacity="0.175"/><line x1="537.6" y1="159.6" x2="520.7" y2="168.5" stroke="#585858" stroke-opacity="0.200"/><line x1="520.7" y1="168.5" x2="501.1" y2="178.8" stroke="#585858" stroke-opacity="0.225"/><line x1="501.1" y1="178.8" x2="482.3" y2="188.7" stroke="#585858" stroke-opacity="0.250"/><line x1="482.3" y1="188.7" x2="460.7" y2="200.0" stroke="#585858" stroke-opacity="0.275"/><line x1="460.7" y1="200.0" x2="440.8" y2="210.5" stroke="#585858" stroke-opacity="0.300"/><line x1="440.8" y1="210.5" x2="418.3" y2="222.3" stroke="#585858" stroke-opacity="0.325"/><line x1="418.3" y1="222.3" x2="392.4" y2="236.0" stroke="#585858" stroke-opacity="0.350"/><line x1="392.4" y1="236.0" x2="370.3" y2="247.6" stroke="#585858" stroke-opacity="0.375"/><line x1="370.3" y1="247.6" x2="345.4" y2="260.6" stroke="#585858" stroke-opacity="0.400"/><line x1="345.4" y1="260.6" x2="317.3" y2="275.4" stroke="#585858" stroke-opacity="0.425"/><line x1="317.3" y1="275.4" x2="285.2" y2="292.3" stroke="#585858" stroke-opacity="0.450"/><line x1="285.2" y1="292.3" x2="248.1" y2="311.8" stroke="#585858" stroke-opacity="0.475"/><line x1="248.1" y1="311.8" x2="171.8" y2="351.9" stroke="#585858" stroke-opacity="0.500"/><line x1="171.8" y1="351.9" x2="17.7" y2="432.9" stroke="#585858" stroke-opacity="0.525"/><line x1="17.7" y1="432.9" x2="-11.0" y2="448.1" stroke="#585858" stroke-opacity="0.550"/><line x1="680.1" y1="90.0" x2="659.4" y2="102.1" stroke="#585858" stroke-opacity="0.025"/><line x1="659.4" y1="102.1" x2="643.7" y2="111.3" stroke="#585858" stroke-opacity="0.050"/><line x1="643.7" y1="111.3" x2="626.2" y2="121.6" stroke="#585858" stroke-opacity="0.075"/><line x1="626.2" y1="121.6" x2="610.1" y2="131.0" stroke="#585858" stroke-opacity="0.100"/><line x1="610.1" y1="131.0" x2="593.3" y2="140.8" stroke="#585858" stroke-opacity="0.125"/><line x1="593.3" y1="140.8" x2="578.7" y2="149.4" stroke="#585858" stroke-opacity="0.150"/><line x1="578.7" y1="149.4" x2="561.5" y2="159.5" stroke="#585858" stroke-opacity="0.175"/><line x1="561.5" y1="159.5" x2="546.4" y2="168.3" stroke="#585858" stroke-opacity="0.200"/><line x1="546.4" y1="168.3" x2="528.9" y2="178.6" stroke="#585858" stroke-opacity="0.225"/><line x1="528.9" y1="178.6" x2="512.1" y2="188.4" stroke="#585858" stroke-opacity="0.250"/><line x1="512.1" y1="188.4" x2="492.7" y2="199.8" stroke="#585858" stroke-opacity="0.275"/><line x1="492.7" y1="199.8" x2="474.9" y2="210.2" stroke="#585858" stroke-opacity="0.300"/><line x1="474.9" y1="210.2" x2="454.8" y2="222.0" stroke="#585858" stroke-opacity="0.325"/><line x1="454.8" y1="222.0" x2="437.7" y2="232.0" stroke="#585858" stroke-opacity="0.350"/><line x1="437.7" y1="232.0" x2="411.9" y2="247.1" stroke="#585858" stroke-opacity="0.375"/><line x1="411.9" y1="247.1" x2="389.7" y2="260.1" stroke="#585858" stroke-opacity="0.400"/><line x1="389.7" y1="260.1" x2="364.5" y2="274.9" stroke="#585858" stroke-opacity="0.425"/><line x1="364.5" y1="274.9" x2="335.8" y2="291.7" stroke="#585858" stroke-opacity="0.450"/><line x1="335.8" y1="291.7" x2="302.7" y2="311.1" stroke="#585858" stroke-opacity="0.475"/><line x1="302.7" y1="311.1" x2="249.8" y2="342.1" stroke="#585858" stroke-opacity="0.500"/><line x1="249.8" y1="342.1" x2="143.2" y2="404.5" stroke="#585858" stroke-opacity="0.525"/><line x1="143.2" y1="404.5" x2="-18.3" y2="499.1" stroke="#585858" stroke-opacity="0.550"/><line x1="690.2" y1="90.0" x2="671.9" y2="102.1" stroke="#585858" stroke-opacity="0.025"/><line x1="671.9" y1="102.1" x2="658.1" y2="111.3" stroke="#585858" stroke-opacity="0.050"/><line x1="658.1" y1="111.3" x2="642.5" y2="121.5" stroke="#585858" stroke-opacity="0.075"/><line x1="642.5" y1="121.5" x2="628.3" y2="130.9" stroke="#585858" stroke-opacity="0.100"/><line x1="628.3" y1="130.9" x2="613.5" y2="140.7" stroke="#585858" stroke-opacity="0.125"/><line x1="613.5" y1="140.7" x2="598.9" y2="150.4" stroke="#585858" stroke-opacity="0.150"/><line x1="598.9" y1="150.4" x2="585.4" y2="159.3" stroke="#585858" stroke-opacity="0.175"/><line x1="585.4" y1="159.3" x2="569.6" y2="169.8" stroke="#585858" stroke-opacity="0.200"/><line x1="569.6" y1="169.8" x2="556.6" y2="178.4" stroke="#585858" stroke-opacity="0.225"/><line x1="556.6" y1="178.4" x2="541.7" y2="188.2" stroke="#585858" stroke-opacity="0.250"/><line x1="541.7" y1="188.2" x2="524.6" y2="199.5" stroke="#585858" stroke-opacity="0.275"/><line x1="524.6" y1="199.5" x2="508.9" y2="209.9" stroke="#585858" stroke-opacity="0.300"/><line x1="508.9" y1="209.9" x2="491.1" y2="221.7" stroke="#585858" stroke-opacity="0.325"/><line x1="491.1" y1="221.7" x2="476.1" y2="231.6" stroke="#585858" stroke-opacity="0.350"/><line x1="476.1" y1="231.6" x2="453.3" y2="246.7" stroke="#585858" stroke-opacity="0.375"/><line x1="453.3" y1="246.7" x2="433.7" y2="259.7" stroke="#585858" stroke-opacity="0.400"/><line x1="433.7" y1="259.7" x2="411.5" y2="274.3" stroke="#585858" stroke-opacity="0.425"/><line x1="411.5" y1="274.3" x2="386.2" y2="291.1" stroke="#585858" stroke-opacity="0.450"/><line x1="386.2" y1="291.1" x2="357.0" y2="310.4" stroke="#585858" stroke-opacity="0.475"/><line x1="357.0" y1="310.4" x2="323.0" y2="332.8" stroke="#585858" stroke-opacity="0.500"/><line x1="323.0" y1="332.8" x2="251.9" y2="379.9" stroke="#585858" stroke-opacity="0.525"/><line x1="251.9" y1="379.9" x2="103.2" y2="478.2" stroke="#585858" stroke-opacity="0.550"/><line x1="103.2" y1="478.2" x2="9.7" y2="540.1" stroke="#585858" stroke-opacity="0.575"/><line x1="700.4" y1="90.0" x2="684.5" y2="102.0" stroke="#585858" stroke-opacity="0.025"/><line x1="684.5" y1="102.0" x2="671.7" y2="111.7" stroke="#585858" stroke-opacity="0.050"/><line x1="671.7" y1="111.7" x2="658.9" y2="121.5" stroke="#585858" stroke-opacity="0.075"/><line x1="658.9" y1="121.5" x2="645.5" y2="131.7" stroke="#585858" stroke-opacity="0.100"/><line x1="645.5" y1="131.7" x2="633.7" y2="140.6" stroke="#585858" stroke-opacity="0.125"/><line x1="633.7" y1="140.6" x2="620.9" y2="150.3" stroke="#585858" stroke-opacity="0.150"/><line x1="620.9" y1="150.3" x2="609.2" y2="159.2" stroke="#585858" stroke-opacity="0.175"/><line x1="609.2" y1="159.2" x2="595.5" y2="169.6" stroke="#585858" stroke-opacity="0.200"/><line x1="595.5" y1="169.6" x2="584.2" y2="178.2" stroke="#585858" stroke-opacity="0.225"/><line x1="584.2" y1="178.2" x2="568.5" y2="190.1" stroke="#585858" stroke-opacity="0.250"/><line x1="568.5" y1="190.1" x2="556.4" y2="199.3" stroke="#585858" stroke-opacity="0.275"/><line x1="556.4" y1="199.3" x2="542.8" y2="209.6" stroke="#585858" stroke-opacity="0.300"/><line x1="542.8" y1="209.6" x2="527.3" y2="221.3" stroke="#585858" stroke-opacity="0.325"/><line x1="527.3" y1="221.3" x2="509.6" y2="234.8" stroke="#585858" stroke-opacity="0.350"/><line x1="509.6" y1="234.8" x2="494.5" y2="246.3" stroke="#585858" stroke-opacity="0.375"/><line x1="494.5" y1="246.3" x2="477.5" y2="259.2" stroke="#585858" stroke-opacity="0.400"/><line x1="477.5" y1="259.2" x2="458.3" y2="273.8" stroke="#585858" stroke-opacity="0.425"/><line x1="458.3" y1="273.8" x2="436.3" y2="290.4" stroke="#585858" stroke-opacity="0.450"/><line x1="436.3" y1="290.4" x2="419.9" y2="302.9" stroke="#585858" stroke-opacity="0.475"/><line x1="419.9" y1="302.9" x2="391.9" y2="324.1" stroke="#585858" stroke-opacity="0.500"/><line x1="391.9" y1="324.1" x2="333.9" y2="368.2" stroke="#585858" stroke-opacity="0.525"/><line x1="333.9" y1="368.2" x2="235.2" y2="443.1" stroke="#585858" stroke-opacity="0.550"/><line x1="235.2" y1="443.1" x2="110.8" y2="537.6" stroke="#585858" stroke-opacity="0.575"/><line x1="710.5" y1="89.9" x2="697.0" y2="102.0" stroke="#585858" stroke-opacity="0.025"/><line x1="697.0" y1="102.0" x2="686.1" y2="111.7" stroke="#585858" stroke-opacity="0.050"/><line x1="686.1" y1="111.7" x2="674.5" y2="122.0" stroke="#585858" stroke-opacity="0.075"/><line x1="674.5" y1="122.0" x2="663.8" y2="131.6" stroke="#585858" stroke-opacity="0.100"/><line x1="663.8" y1="131.6" x2="652.6" y2="141.5" stroke="#585858" stroke-opacity="0.125"/><line x1="652.6" y1="141.5" x2="642.9" y2="150.2" stroke="#585858" stroke-opacity="0.150"/><line x1="642.9" y1="150.2" x2="631.4" y2="160.4" stroke="#585858" stroke-opacity="0.175"/><line x1="631.4" y1="160.4" x2="621.3" y2="169.4" stroke="#585858" stroke-opacity="0.200"/><line x1="621.3" y1="169.4" x2="609.6" y2="179.8" stroke="#585858" stroke-opacity="0.225"/><line x1="609.6" y1="179.8" x2="598.4" y2="189.9" stroke="#585858" stroke-opacity="0.250"/><line x1="598.4" y1="189.9" x2="588.1" y2="199.0" stroke="#585858" stroke-opacity="0.275"/><line x1="588.1" y1="199.0" x2="576.6" y2="209.3" stroke="#585858" stroke-opacity="0.300"/><line x1="576.6" y1="209.3" x2="563.4" y2="221.0" stroke="#585858" stroke-opacity="0.325"/><line x1="563.4" y1="221.0" x2="548.4" y2="234.4" stroke="#585858" stroke-opacity="0.350"/><line x1="548.4" y1="234.4" x2="535.5" y2="245.8" stroke="#585858" stroke-opacity="0.375"/><line x1="535.5" y1="245.8" x2="521.1" y2="258.7" stroke="#585858" stroke-opacity="0.400"/><line x1="521.1" y1="258.7" x2="504.8" y2="273.2" stroke="#585858" stroke-opacity="0.425"/><line x1="504.8" y1="273.2" x2="486.2" y2="289.8" stroke="#585858" stroke-opacity="0.450"/><line x1="486.2" y1="289.8" x2="472.3" y2="302.2" stroke="#585858" stroke-opacity="0.475"/><line x1="472.3" y1="302.2" x2="448.6" y2="323.3" stroke="#585858" stroke-opacity="0.500"/><line x1="448.6" y1="323.3" x2="399.4" y2="367.1" stroke="#585858" stroke-opacity="0.525"/><line x1="399.4" y1="367.1" x2="332.4" y2="426.9" stroke="#585858" stroke-opacity="0.550"/><line x1="332.4" y1="426.9" x2="210.9" y2="535.1" stroke="#585858" stroke-opacity="0.575"/><line x1="739.3" y1="69.8" x2="731.2" y2="78.5" stroke="#585858" stroke-opacity="0.100"/><line x1="731.2" y1="78.5" x2="722.2" y2="88.2" stroke="#585858" stroke-opacity="0.125"/><line x1="722.2" y1="88.2" x2="720.9" y2="89.7" stroke="#585858" stroke-opacity="0.150"/><line x1="720.9" y1="89.7" x2="713.1" y2="98.0" stroke="#5b5b5b" stroke-opacity="0.150"/><line x1="713.1" y1="98.0" x2="703.7" y2="108.2" stroke="#5b5b5b" stroke-opacity="0.175"/><line x1="703.7" y1="108.2" x2="693.9" y2="118.8" stroke="#5b5b5b" stroke-opacity="0.200"/><line x1="693.9" y1="118.8" x2="683.6" y2="129.9" stroke="#5f5f5f" stroke-opacity="0.225"/><line x1="683.6" y1="129.9" x2="672.9" y2="141.4" stroke="#5f5f5f" stroke-opacity="0.250"/><line x1="672.9" y1="141.4" x2="661.5" y2="153.7" stroke="#5f5f5f" stroke-opacity="0.275"/><line x1="661.5" y1="153.7" x2="654.1" y2="161.7" stroke="#5f5f5f" stroke-opacity="0.300"/><line x1="654.1" y1="161.7" x2="650.0" y2="166.1" stroke="#626262" stroke-opacity="0.300"/><line x1="650.0" y1="166.1" x2="637.4" y2="179.6" stroke="#626262" stroke-opacity="0.325"/><line x1="637.4" y1="179.6" x2="624.1" y2="194.1" stroke="#626262" stroke-opacity="0.350"/><line x1="624.1" y1="194.1" x2="610.2" y2="209.0" stroke="#626262" stroke-opacity="0.375"/><line x1="610.2" y1="209.0" x2="593.4" y2="227.1" stroke="#626262" stroke-opacity="0.400"/><line x1="593.4" y1="227.1" x2="580.1" y2="241.5" stroke="#626262" stroke-opacity="0.425"/><line x1="580.1" y1="241.5" x2="576.4" y2="245.4" stroke="#666666" stroke-opacity="0.425"/><line x1="576.4" y1="245.4" x2="555.8" y2="267.6" stroke="#666666" stroke-opacity="0.450"/><line x1="555.8" y1="267.6" x2="535.9" y2="289.2" stroke="#666666" stroke-opacity="0.475"/><line x1="535.9" y1="289.2" x2="504.9" y2="322.5" stroke="#666666" stroke-opacity="0.500"/><line x1="504.9" y1="322.5" x2="464.6" y2="366.1" stroke="#666666" stroke-opacity="0.525"/><line x1="464.6" y1="366.1" x2="409.6" y2="425.4" stroke="#666666" stroke-opacity="0.550"/><line x1="409.6" y1="425.4" x2="310.0" y2="532.7" stroke="#666666" stroke-opacity="0.575"/><line x1="730.8" y1="89.9" x2="722.0" y2="101.9" stroke="#585858" stroke-opacity="0.025"/><line x1="722.0" y1="101.9" x2="714.9" y2="111.6" stroke="#585858" stroke-opacity="0.050"/><line x1="714.9" y1="111.6" x2="707.3" y2="121.9" stroke="#585858" stroke-opacity="0.075"/><line x1="707.3" y1="121.9" x2="699.8" y2="132.2" stroke="#585858" stroke-opacity="0.100"/><line x1="699.8" y1="132.2" x2="693.1" y2="141.3" stroke="#585858" stroke-opacity="0.125"/><line x1="693.1" y1="141.3" x2="685.9" y2="151.1" stroke="#585858" stroke-opacity="0.150"/><line x1="685.9" y1="151.1" x2="679.3" y2="160.1" stroke="#585858" stroke-opacity="0.175"/><line x1="679.3" y1="160.1" x2="671.6" y2="170.7" stroke="#585858" stroke-opacity="0.200"/><line x1="671.6" y1="170.7" x2="665.2" y2="179.4" stroke="#585858" stroke-opacity="0.225"/><line x1="665.2" y1="179.4" x2="657.9" y2="189.4" stroke="#585858" stroke-opacity="0.250"/><line x1="657.9" y1="189.4" x2="649.4" y2="200.9" stroke="#585858" stroke-opacity="0.275"/><line x1="649.4" y1="200.9" x2="641.7" y2="211.5" stroke="#585858" stroke-opacity="0.300"/><line x1="641.7" y1="211.5" x2="632.9" y2="223.5" stroke="#585858" stroke-opacity="0.325"/><line x1="632.9" y1="223.5" x2="625.5" y2="233.7" stroke="#585858" stroke-opacity="0.350"/><line x1="625.5" y1="233.7" x2="617.2" y2="245.0" stroke="#585858" stroke-opacity="0.375"/><line x1="617.2" y1="245.0" x2="607.8" y2="257.7" stroke="#585858" stroke-opacity="0.400"/><line x1="607.8" y1="257.7" x2="597.3" y2="272.1" stroke="#585858" stroke-opacity="0.425"/><line x1="597.3" y1="272.1" x2="585.3" y2="288.6" stroke="#585858" stroke-opacity="0.450"/><line x1="585.3" y1="288.6" x2="571.4" y2="307.5" stroke="#585858" stroke-opacity="0.475"/><line x1="571.4" y1="307.5" x2="561.0" y2="321.7" stroke="#585858" stroke-opacity="0.500"/><line x1="561.0" y1="321.7" x2="529.3" y2="365.0" stroke="#585858" stroke-opacity="0.525"/><line x1="529.3" y1="365.0" x2="486.1" y2="423.9" stroke="#585858" stroke-opacity="0.550"/><line x1="486.1" y1="423.9" x2="408.2" y2="530.3" stroke="#585858" stroke-opacity="0.575"/><line x1="740.9" y1="89.9" x2="734.4" y2="101.9" stroke="#585858" stroke-opacity="0.025"/><line x1="734.4" y1="101.9" x2="729.0" y2="112.0" stroke="#585858" stroke-opacity="0.050"/><line x1="729.0" y1="112.0" x2="723.3" y2="122.5" stroke="#585858" stroke-opacity="0.075"/><line x1="723.3" y1="122.5" x2="718.2" y2="132.1" stroke="#585858" stroke-opacity="0.100"/><line x1="718.2" y1="132.1" x2="712.8" y2="142.2" stroke="#585858" stroke-opacity="0.125"/><line x1="712.8" y1="142.2" x2="708.0" y2="151.0" stroke="#585858" stroke-opacity="0.150"/><line x1="708.0" y1="151.0" x2="702.5" y2="161.4" stroke="#585858" stroke-opacity="0.175"/><line x1="702.5" y1="161.4" x2="697.5" y2="170.5" stroke="#585858" stroke-opacity="0.200"/><line x1="697.5" y1="170.5" x2="691.8" y2="181.1" stroke="#585858" stroke-opacity="0.225"/><line x1="691.8" y1="181.1" x2="686.3" y2="191.4" stroke="#585858" stroke-opacity="0.250"/><line x1="686.3" y1="191.4" x2="681.3" y2="200.7" stroke="#585858" stroke-opacity="0.275"/><line x1="681.3" y1="200.7" x2="675.7" y2="211.2" stroke="#585858" stroke-opacity="0.300"/><line x1="675.7" y1="211.2" x2="669.2" y2="223.2" stroke="#585858" stroke-opacity="0.325"/><line x1="669.2" y1="223.2" x2="661.8" y2="236.9" stroke="#585858" stroke-opacity="0.350"/><line x1="661.8" y1="236.9" x2="655.5" y2="248.6" stroke="#585858" stroke-opacity="0.375"/><line x1="655.5" y1="248.6" x2="648.5" y2="261.8" stroke="#585858" stroke-opacity="0.400"/><line x1="648.5" y1="261.8" x2="640.4" y2="276.8" stroke="#585858" stroke-opacity="0.425"/><line x1="640.4" y1="276.8" x2="634.4" y2="287.9" stroke="#585858" stroke-opacity="0.450"/><line x1="634.4" y1="287.9" x2="624.3" y2="306.7" stroke="#585858" stroke-opacity="0.475"/><line x1="624.3" y1="306.7" x2="612.6" y2="328.6" stroke="#585858" stroke-opacity="0.500"/><line x1="612.6" y1="328.6" x2="593.6" y2="364.0" stroke="#585858" stroke-opacity="0.525"/><line x1="593.6" y1="364.0" x2="562.1" y2="422.4" stroke="#585858" stroke-opacity="0.550"/><line x1="562.1" y1="422.4" x2="505.4" y2="527.9" stroke="#585858" stroke-opacity="0.575"/><line x1="505.4" y1="527.9" x2="492.8" y2="551.4" stroke="#585858" stroke-opacity="0.600"/><line x1="751.0" y1="89.8" x2="746.9" y2="101.8" stroke="#585858" stroke-opacity="0.025"/><line x1="746.9" y1="101.8" x2="743.4" y2="112.0" stroke="#585858" stroke-opacity="0.050"/><line x1="743.4" y1="112.0" x2="739.8" y2="122.4" stroke="#585858" stroke-opacity="0.075"/><line x1="739.8" y1="122.4" x2="736.5" y2="132.0" stroke="#585858" stroke-opacity="0.100"/><line x1="736.5" y1="132.0" x2="733.1" y2="142.1" stroke="#585858" stroke-opacity="0.125"/><line x1="733.1" y1="142.1" x2="729.7" y2="152.0" stroke="#585858" stroke-opacity="0.150"/><line x1="729.7" y1="152.0" x2="726.5" y2="161.2" stroke="#585858" stroke-opacity="0.175"/><line x1="726.5" y1="161.2" x2="722.8" y2="172.0" stroke="#585858" stroke-opacity="0.200"/><line x1="722.8" y1="172.0" x2="719.8" y2="180.9" stroke="#585858" stroke-opacity="0.225"/><line x1="719.8" y1="180.9" x2="716.3" y2="191.1" stroke="#585858" stroke-opacity="0.250"/><line x1="716.3" y1="191.1" x2="712.2" y2="202.9" stroke="#585858" stroke-opacity="0.275"/><line x1="712.2" y1="202.9" x2="708.5" y2="213.7" stroke="#585858" stroke-opacity="0.300"/><line x1="708.5" y1="213.7" x2="704.3" y2="226.1" stroke="#585858" stroke-opacity="0.325"/><line x1="704.3" y1="226.1" x2="700.7" y2="236.5" stroke="#585858" stroke-opacity="0.350"/><line x1="700.7" y1="236.5" x2="696.7" y2="248.2" stroke="#585858" stroke-opacity="0.375"/><line x1="696.7" y1="248.2" x2="692.2" y2="261.3" stroke="#585858" stroke-opacity="0.400"/><line x1="692.2" y1="261.3" x2="687.1" y2="276.2" stroke="#585858" stroke-opacity="0.425"/><line x1="687.1" y1="276.2" x2="681.3" y2="293.3" stroke="#585858" stroke-opacity="0.450"/><line x1="681.3" y1="293.3" x2="676.9" y2="306.0" stroke="#585858" stroke-opacity="0.475"/><line x1="676.9" y1="306.0" x2="669.5" y2="327.8" stroke="#585858" stroke-opacity="0.500"/><line x1="669.5" y1="327.8" x2="654.0" y2="373.1" stroke="#585858" stroke-opacity="0.525"/><line x1="654.0" y1="373.1" x2="637.5" y2="421.0" stroke="#585858" stroke-opacity="0.550"/><line x1="637.5" y1="421.0" x2="601.7" y2="525.6" stroke="#585858" stroke-opacity="0.575"/><line x1="601.7" y1="525.6" x2="593.7" y2="548.8" stroke="#585858" stroke-opacity="0.600"/><line x1="761.1" y1="89.8" x2="759.3" y2="101.8" stroke="#585858" stroke-opacity="0.025"/><line x1="759.3" y1="101.8" x2="757.7" y2="112.4" stroke="#585858" stroke-opacity="0.050"/><line x1="757.7" y1="112.4" x2="756.3" y2="122.4" stroke="#585858" stroke-opacity="0.075"/><line x1="756.3" y1="122.4" x2="754.7" y2="132.8" stroke="#585858" stroke-opacity="0.100"/><line x1="754.7" y1="132.8" x2="753.2" y2="143.0" stroke="#585858" stroke-opacity="0.125"/><line x1="753.2" y1="143.0" x2="751.9" y2="151.9" stroke="#585858" stroke-opacity="0.150"/><line x1="751.9" y1="151.9" x2="750.3" y2="162.5" stroke="#585858" stroke-opacity="0.175"/><line x1="750.3" y1="162.5" x2="749.0" y2="171.8" stroke="#585858" stroke-opacity="0.200"/><line x1="749.0" y1="171.8" x2="747.4" y2="182.7" stroke="#585858" stroke-opacity="0.225"/><line x1="747.4" y1="182.7" x2="745.8" y2="193.1" stroke="#585858" stroke-opacity="0.250"/><line x1="745.8" y1="193.1" x2="744.4" y2="202.7" stroke="#585858" stroke-opacity="0.275"/><line x1="744.4" y1="202.7" x2="742.4" y2="216.4" stroke="#585858" stroke-opacity="0.300"/><line x1="742.4" y1="216.4" x2="741.0" y2="225.7" stroke="#585858" stroke-opacity="0.325"/><line x1="741.0" y1="225.7" x2="738.9" y2="239.9" stroke="#585858" stroke-opacity="0.350"/><line x1="738.9" y1="239.9" x2="737.1" y2="252.0" stroke="#585858" stroke-opacity="0.375"/><line x1="737.1" y1="252.0" x2="735.1" y2="265.6" stroke="#585858" stroke-opacity="0.400"/><line x1="735.1" y1="265.6" x2="732.8" y2="281.1" stroke="#585858" stroke-opacity="0.425"/><line x1="732.8" y1="281.1" x2="731.1" y2="292.6" stroke="#585858" stroke-opacity="0.450"/><line x1="731.1" y1="292.6" x2="728.2" y2="312.2" stroke="#585858" stroke-opacity="0.475"/><line x1="728.2" y1="312.2" x2="724.9" y2="335.0" stroke="#585858" stroke-opacity="0.500"/><line x1="724.9" y1="335.0" x2="719.4" y2="372.0" stroke="#585858" stroke-opacity="0.525"/><line x1="719.4" y1="372.0" x2="710.3" y2="433.6" stroke="#585858" stroke-opacity="0.550"/><line x1="710.3" y1="433.6" x2="693.7" y2="546.3" stroke="#585858" stroke-opacity="0.575"/><line x1="771.2" y1="89.8" x2="771.7" y2="101.8" stroke="#585858" stroke-opacity="0.025"/><line x1="771.7" y1="101.8" x2="772.2" y2="112.4" stroke="#585858" stroke-opacity="0.050"/><line x1="772.2" y1="112.4" x2="772.7" y2="123.0" stroke="#585858" stroke-opacity="0.075"/><line x1="772.7" y1="123.0" x2="773.2" y2="132.7" stroke="#585858" stroke-opacity="0.100"/><line x1="773.2" y1="132.7" x2="773.7" y2="142.9" stroke="#585858" stroke-opacity="0.125"/><line x1="773.7" y1="142.9" x2="774.2" y2="153.0" stroke="#585858" stroke-opacity="0.150"/><line x1="774.2" y1="153.0" x2="774.6" y2="162.3" stroke="#585858" stroke-opacity="0.175"/><line x1="774.6" y1="162.3" x2="775.1" y2="173.3" stroke="#585858" stroke-opacity="0.200"/><line x1="775.1" y1="173.3" x2="775.5" y2="182.5" stroke="#585858" stroke-opacity="0.225"/><line x1="775.5" y1="182.5" x2="776.0" y2="192.9" stroke="#585858" stroke-opacity="0.250"/><line x1="776.0" y1="192.9" x2="776.6" y2="204.9" stroke="#585858" stroke-opacity="0.275"/><line x1="776.6" y1="204.9" x2="777.1" y2="216.0" stroke="#585858" stroke-opacity="0.300"/><line x1="777.1" y1="216.0" x2="777.7" y2="228.7" stroke="#585858" stroke-opacity="0.325"/><line x1="777.7" y1="228.7" x2="778.2" y2="239.5" stroke="#585858" stroke-opacity="0.350"/><line x1="778.2" y1="239.5" x2="779.0" y2="255.8" stroke="#585858" stroke-opacity="0.375"/><line x1="779.0" y1="255.8" x2="779.7" y2="270.0" stroke="#585858" stroke-opacity="0.400"/><line x1="779.7" y1="270.0" x2="780.2" y2="280.5" stroke="#585858" stroke-opacity="0.425"/><line x1="780.2" y1="280.5" x2="781.0" y2="298.1" stroke="#585858" stroke-opacity="0.450"/><line x1="781.0" y1="298.1" x2="782.0" y2="318.6" stroke="#585858" stroke-opacity="0.475"/><line x1="782.0" y1="318.6" x2="783.1" y2="342.5" stroke="#585858" stroke-opacity="0.500"/><line x1="783.1" y1="342.5" x2="785.5" y2="392.9" stroke="#585858" stroke-opacity="0.525"/><line x1="785.5" y1="392.9" x2="788.0" y2="447.2" stroke="#585858" stroke-opacity="0.550"/><line x1="788.0" y1="447.2" x2="792.6" y2="543.7" stroke="#585858" stroke-opacity="0.575"/><line x1="781.2" y1="89.7" x2="784.1" y2="101.7" stroke="#585858" stroke-opacity="0.025"/><line x1="784.1" y1="101.7" x2="786.7" y2="112.3" stroke="#585858" stroke-opacity="0.050"/><line x1="786.7" y1="112.3" x2="789.3" y2="122.9" stroke="#585858" stroke-opacity="0.075"/><line x1="789.3" y1="122.9" x2="791.8" y2="133.5" stroke="#585858" stroke-opacity="0.100"/><line x1="791.8" y1="133.5" x2="794.3" y2="143.8" stroke="#585858" stroke-opacity="0.125"/><line x1="794.3" y1="143.8" x2="796.5" y2="152.9" stroke="#585858" stroke-opacity="0.150"/><line x1="796.5" y1="152.9" x2="799.1" y2="163.7" stroke="#585858" stroke-opacity="0.175"/><line x1="799.1" y1="163.7" x2="801.4" y2="173.2" stroke="#585858" stroke-opacity="0.200"/><line x1="801.4" y1="173.2" x2="804.1" y2="184.2" stroke="#585858" stroke-opacity="0.225"/><line x1="804.1" y1="184.2" x2="806.7" y2="194.9" stroke="#585858" stroke-opacity="0.250"/><line x1="806.7" y1="194.9" x2="809.7" y2="207.3" stroke="#585858" stroke-opacity="0.275"/><line x1="809.7" y1="207.3" x2="812.5" y2="218.7" stroke="#585858" stroke-opacity="0.300"/><line x1="812.5" y1="218.7" x2="815.6" y2="231.8" stroke="#585858" stroke-opacity="0.325"/><line x1="815.6" y1="231.8" x2="818.3" y2="242.9" stroke="#585858" stroke-opacity="0.350"/><line x1="818.3" y1="242.9" x2="821.3" y2="255.4" stroke="#585858" stroke-opacity="0.375"/><line x1="821.3" y1="255.4" x2="824.8" y2="269.5" stroke="#585858" stroke-opacity="0.400"/><line x1="824.8" y1="269.5" x2="828.6" y2="285.5" stroke="#585858" stroke-opacity="0.425"/><line x1="828.6" y1="285.5" x2="833.1" y2="303.9" stroke="#585858" stroke-opacity="0.450"/><line x1="833.1" y1="303.9" x2="836.5" y2="317.8" stroke="#585858" stroke-opacity="0.475"/><line x1="836.5" y1="317.8" x2="844.4" y2="350.4" stroke="#585858" stroke-opacity="0.500"/><line x1="844.4" y1="350.4" x2="857.3" y2="403.8" stroke="#585858" stroke-opacity="0.525"/><line x1="857.3" y1="403.8" x2="875.5" y2="479.1" stroke="#585858" stroke-opacity="0.550"/><line x1="875.5" y1="479.1" x2="890.6" y2="541.2" stroke="#585858" stroke-opacity="0.575"/><line x1="791.3" y1="89.7" x2="796.5" y2="101.7" stroke="#585858" stroke-opacity="0.025"/><line x1="796.5" y1="101.7" x2="801.4" y2="112.8" stroke="#585858" stroke-opacity="0.050"/><line x1="801.4" y1="112.8" x2="806.1" y2="123.5" stroke="#585858" stroke-opacity="0.075"/><line x1="806.1" y1="123.5" x2="810.4" y2="133.4" stroke="#585858" stroke-opacity="0.100"/><line x1="810.4" y1="133.4" x2="814.9" y2="143.7" stroke="#585858" stroke-opacity="0.125"/><line x1="814.9" y1="143.7" x2="819.4" y2="154.0" stroke="#585858" stroke-opacity="0.150"/><line x1="819.4" y1="154.0" x2="824.2" y2="165.0" stroke="#585858" stroke-opacity="0.175"/><line x1="824.2" y1="165.0" x2="828.4" y2="174.7" stroke="#585858" stroke-opacity="0.200"/><line x1="828.4" y1="174.7" x2="833.4" y2="186.0" stroke="#585858" stroke-opacity="0.225"/><line x1="833.4" y1="186.0" x2="838.2" y2="197.0" stroke="#585858" stroke-opacity="0.250"/><line x1="838.2" y1="197.0" x2="842.6" y2="207.0" stroke="#585858" stroke-opacity="0.275"/><line x1="842.6" y1="207.0" x2="847.5" y2="218.4" stroke="#585858" stroke-opacity="0.300"/><line x1="847.5" y1="218.4" x2="853.2" y2="231.4" stroke="#585858" stroke-opacity="0.325"/><line x1="853.2" y1="231.4" x2="859.8" y2="246.5" stroke="#585858" stroke-opacity="0.350"/><line x1="859.8" y1="246.5" x2="865.5" y2="259.4" stroke="#585858" stroke-opacity="0.375"/><line x1="865.5" y1="259.4" x2="871.8" y2="274.0" stroke="#585858" stroke-opacity="0.400"/><line x1="871.8" y1="274.0" x2="879.1" y2="290.7" stroke="#585858" stroke-opacity="0.425"/><line x1="879.1" y1="290.7" x2="887.6" y2="310.0" stroke="#585858" stroke-opacity="0.450"/><line x1="887.6" y1="310.0" x2="897.4" y2="332.4" stroke="#585858" stroke-opacity="0.475"/><line x1="897.4" y1="332.4" x2="913.2" y2="368.7" stroke="#585858" stroke-opacity="0.500"/><line x1="913.2" y1="368.7" x2="933.6" y2="415.3" stroke="#585858" stroke-opacity="0.525"/><line x1="933.6" y1="415.3" x2="968.8" y2="495.9" stroke="#585858" stroke-opacity="0.550"/><line x1="968.8" y1="495.9" x2="987.5" y2="538.7" stroke="#585858" stroke-opacity="0.575"/><line x1="801.3" y1="89.7" x2="808.9" y2="101.6" stroke="#585858" stroke-opacity="0.025"/><line x1="808.9" y1="101.6" x2="815.9" y2="112.7" stroke="#585858" stroke-opacity="0.050"/><line x1="815.9" y1="112.7" x2="822.7" y2="123.4" stroke="#585858" stroke-opacity="0.075"/><line x1="822.7" y1="123.4" x2="829.4" y2="134.1" stroke="#585858" stroke-opacity="0.100"/><line x1="829.4" y1="134.1" x2="836.1" y2="144.6" stroke="#585858" stroke-opacity="0.125"/><line x1="836.1" y1="144.6" x2="842.7" y2="155.1" stroke="#585858" stroke-opacity="0.150"/><line x1="842.7" y1="155.1" x2="848.8" y2="164.8" stroke="#585858" stroke-opacity="0.175"/><line x1="848.8" y1="164.8" x2="856.1" y2="176.3" stroke="#585858" stroke-opacity="0.200"/><line x1="856.1" y1="176.3" x2="862.1" y2="185.8" stroke="#585858" stroke-opacity="0.225"/><line x1="862.1" y1="185.8" x2="870.5" y2="199.1" stroke="#585858" stroke-opacity="0.250"/><line x1="870.5" y1="199.1" x2="877.0" y2="209.4" stroke="#585858" stroke-opacity="0.275"/><line x1="877.0" y1="209.4" x2="884.4" y2="221.2" stroke="#585858" stroke-opacity="0.300"/><line x1="884.4" y1="221.2" x2="892.9" y2="234.6" stroke="#585858" stroke-opacity="0.325"/><line x1="892.9" y1="234.6" x2="902.8" y2="250.2" stroke="#585858" stroke-opacity="0.350"/><line x1="902.8" y1="250.2" x2="911.2" y2="263.6" stroke="#585858" stroke-opacity="0.375"/><line x1="911.2" y1="263.6" x2="920.8" y2="278.8" stroke="#585858" stroke-opacity="0.400"/><line x1="920.8" y1="278.8" x2="931.8" y2="296.2" stroke="#585858" stroke-opacity="0.425"/><line x1="931.8" y1="296.2" x2="940.1" y2="309.2" stroke="#585858" stroke-opacity="0.450"/><line x1="940.1" y1="309.2" x2="959.4" y2="339.8" stroke="#585858" stroke-opacity="0.475"/><line x1="959.4" y1="339.8" x2="990.7" y2="389.2" stroke="#585858" stroke-opacity="0.500"/><line x1="990.7" y1="389.2" x2="1014.9" y2="427.6" stroke="#585858" stroke-opacity="0.525"/><line x1="811.4" y1="89.7" x2="821.3" y2="101.6" stroke="#585858" stroke-opacity="0.025"/><line x1="821.3" y1="101.6" x2="830.8" y2="113.2" stroke="#585858" stroke-opacity="0.050"/><line x1="830.8" y1="113.2" x2="839.8" y2="124.0" stroke="#585858" stroke-opacity="0.075"/><line x1="839.8" y1="124.0" x2="848.1" y2="134.0" stroke="#585858" stroke-opacity="0.100"/><line x1="848.1" y1="134.0" x2="856.8" y2="144.5" stroke="#585858" stroke-opacity="0.125"/><line x1="856.8" y1="144.5" x2="865.4" y2="155.0" stroke="#585858" stroke-opacity="0.150"/><line x1="865.4" y1="155.0" x2="874.7" y2="166.2" stroke="#585858" stroke-opacity="0.175"/><line x1="874.7" y1="166.2" x2="882.8" y2="176.1" stroke="#585858" stroke-opacity="0.200"/><line x1="882.8" y1="176.1" x2="892.4" y2="187.6" stroke="#585858" stroke-opacity="0.225"/><line x1="892.4" y1="187.6" x2="901.7" y2="198.9" stroke="#585858" stroke-opacity="0.250"/><line x1="901.7" y1="198.9" x2="912.5" y2="211.9" stroke="#585858" stroke-opacity="0.275"/><line x1="912.5" y1="211.9" x2="922.5" y2="224.0" stroke="#585858" stroke-opacity="0.300"/><line x1="922.5" y1="224.0" x2="933.9" y2="237.9" stroke="#585858" stroke-opacity="0.325"/><line x1="933.9" y1="237.9" x2="943.7" y2="249.7" stroke="#585858" stroke-opacity="0.350"/><line x1="943.7" y1="249.7" x2="958.8" y2="267.9" stroke="#585858" stroke-opacity="0.375"/><line x1="958.8" y1="267.9" x2="971.8" y2="283.7" stroke="#585858" stroke-opacity="0.400"/><line x1="971.8" y1="283.7" x2="986.8" y2="301.8" stroke="#585858" stroke-opacity="0.425"/><line x1="986.8" y1="301.8" x2="1004.2" y2="322.9" stroke="#585858" stroke-opacity="0.450"/><line x1="1004.2" y1="322.9" x2="1017.5" y2="338.9" stroke="#585858" stroke-opacity="0.475"/><line x1="802.0" y1="70.7" x2="811.5" y2="80.0" stroke="#585858" stroke-opacity="0.100"/><line x1="811.5" y1="80.0" x2="821.4" y2="89.6" stroke="#585858" stroke-opacity="0.125"/><line x1="821.4" y1="89.6" x2="822.2" y2="90.4" stroke="#5b5b5b" stroke-opacity="0.125"/><line x1="822.2" y1="90.4" x2="833.2" y2="101.2" stroke="#5b5b5b" stroke-opacity="0.150"/><line x1="833.2" y1="101.2" x2="844.9" y2="112.6" stroke="#5b5b5b" stroke-opacity="0.175"/><line x1="844.9" y1="112.6" x2="851.2" y2="118.8" stroke="#5b5b5b" stroke-opacity="0.200"/><line x1="851.2" y1="118.8" x2="857.2" y2="124.7" stroke="#5f5f5f" stroke-opacity="0.200"/><line x1="857.2" y1="124.7" x2="870.3" y2="137.5" stroke="#5f5f5f" stroke-opacity="0.225"/><line x1="870.3" y1="137.5" x2="884.3" y2="151.2" stroke="#5f5f5f" stroke-opacity="0.250"/><line x1="884.3" y1="151.2" x2="894.9" y2="161.6" stroke="#5f5f5f" stroke-opacity="0.275"/><line x1="894.9" y1="161.6" x2="899.5" y2="166.0" stroke="#626262" stroke-opacity="0.275"/><line x1="899.5" y1="166.0" x2="917.2" y2="183.4" stroke="#626262" stroke-opacity="0.300"/><line x1="917.2" y1="183.4" x2="935.3" y2="201.1" stroke="#626262" stroke-opacity="0.325"/><line x1="935.3" y1="201.1" x2="955.1" y2="220.5" stroke="#626262" stroke-opacity="0.350"/><line x1="955.1" y1="220.5" x2="976.3" y2="241.3" stroke="#626262" stroke-opacity="0.375"/><line x1="976.3" y1="241.3" x2="1003.0" y2="267.4" stroke="#666666" stroke-opacity="0.400"/><line x1="1003.0" y1="267.4" x2="1013.5" y2="277.6" stroke="#666666" stroke-opacity="0.425"/><line x1="831.4" y1="89.6" x2="845.9" y2="101.5" stroke="#585858" stroke-opacity="0.025"/><line x1="845.9" y1="101.5" x2="860.6" y2="113.6" stroke="#585858" stroke-opacity="0.050"/><line x1="860.6" y1="113.6" x2="874.0" y2="124.6" stroke="#585858" stroke-opacity="0.075"/><line x1="874.0" y1="124.6" x2="887.4" y2="135.6" stroke="#585858" stroke-opacity="0.100"/><line x1="887.4" y1="135.6" x2="900.6" y2="146.5" stroke="#585858" stroke-opacity="0.125"/><line x1="900.6" y1="146.5" x2="913.8" y2="157.3" stroke="#585858" stroke-opacity="0.150"/><line x1="913.8" y1="157.3" x2="926.1" y2="167.4" stroke="#585858" stroke-opacity="0.175"/><line x1="926.1" y1="167.4" x2="940.6" y2="179.3" stroke="#585858" stroke-opacity="0.200"/><line x1="940.6" y1="179.3" x2="955.4" y2="191.5" stroke="#585858" stroke-opacity="0.225"/><line x1="955.4" y1="191.5" x2="969.8" y2="203.3" stroke="#585858" stroke-opacity="0.250"/><line x1="969.8" y1="203.3" x2="986.6" y2="217.1" stroke="#585858" stroke-opacity="0.275"/><line x1="986.6" y1="217.1" x2="1002.2" y2="230.0" stroke="#585858" stroke-opacity="0.300"/><line x1="1002.2" y1="230.0" x2="1015.5" y2="240.9" stroke="#585858" stroke-opacity="0.325"/><line x1="841.4" y1="89.6" x2="858.2" y2="101.5" stroke="#585858" stroke-opacity="0.025"/><line x1="858.2" y1="101.5" x2="875.3" y2="113.5" stroke="#585858" stroke-opacity="0.050"/><line x1="875.3" y1="113.5" x2="890.7" y2="124.5" stroke="#585858" stroke-opacity="0.075"/><line x1="890.7" y1="124.5" x2="906.3" y2="135.5" stroke="#585858" stroke-opacity="0.100"/><line x1="906.3" y1="135.5" x2="921.6" y2="146.3" stroke="#585858" stroke-opacity="0.125"/><line x1="921.6" y1="146.3" x2="936.9" y2="157.2" stroke="#585858" stroke-opacity="0.150"/><line x1="936.9" y1="157.2" x2="953.3" y2="168.8" stroke="#585858" stroke-opacity="0.175"/><line x1="953.3" y1="168.8" x2="970.5" y2="181.0" stroke="#585858" stroke-opacity="0.200"/><line x1="970.5" y1="181.0" x2="988.1" y2="193.5" stroke="#585858" stroke-opacity="0.225"/><line x1="988.1" y1="193.5" x2="1005.2" y2="205.6" stroke="#585858" stroke-opacity="0.250"/><line x1="1005.2" y1="205.6" x2="1016.9" y2="213.9" stroke="#585858" stroke-opacity="0.275"/><line x1="851.4" y1="89.6" x2="871.1" y2="101.8" stroke="#585858" stroke-opacity="0.025"/><line x1="871.1" y1="101.8" x2="890.7" y2="114.0" stroke="#585858" stroke-opacity="0.050"/><line x1="890.7" y1="114.0" x2="908.6" y2="125.1" stroke="#585858" stroke-opacity="0.075"/><line x1="908.6" y1="125.1" x2="926.5" y2="136.3" stroke="#585858" stroke-opacity="0.100"/><line x1="926.5" y1="136.3" x2="944.2" y2="147.3" stroke="#585858" stroke-opacity="0.125"/><line x1="944.2" y1="147.3" x2="962.0" y2="158.4" stroke="#585858" stroke-opacity="0.150"/><line x1="962.0" y1="158.4" x2="981.1" y2="170.3" stroke="#585858" stroke-opacity="0.175"/><line x1="981.1" y1="170.3" x2="1001.2" y2="182.8" stroke="#585858" stroke-opacity="0.200"/><line x1="1001.2" y1="182.8" x2="1014.4" y2="191.0" stroke="#585858" stroke-opacity="0.225"/><line x1="861.4" y1="89.5" x2="883.5" y2="101.8" stroke="#585858" stroke-opacity="0.025"/><line x1="883.5" y1="101.8" x2="905.4" y2="114.0" stroke="#585858" stroke-opacity="0.050"/><line x1="905.4" y1="114.0" x2="926.7" y2="125.8" stroke="#585858" stroke-opacity="0.075"/><line x1="926.7" y1="125.8" x2="947.2" y2="137.1" stroke="#585858" stroke-opacity="0.100"/><line x1="947.2" y1="137.1" x2="967.4" y2="148.3" stroke="#585858" stroke-opacity="0.125"/><line x1="967.4" y1="148.3" x2="987.6" y2="159.6" stroke="#585858" stroke-opacity="0.150"/><line x1="987.6" y1="159.6" x2="1009.5" y2="171.7" stroke="#585858" stroke-opacity="0.175"/><line x1="1009.5" y1="171.7" x2="1015.7" y2="175.2" stroke="#585858" stroke-opacity="0.200"/><line x1="871.4" y1="89.5" x2="895.8" y2="101.7" stroke="#585858" stroke-opacity="0.025"/><line x1="895.8" y1="101.7" x2="921.2" y2="114.4" stroke="#585858" stroke-opacity="0.050"/><line x1="921.2" y1="114.4" x2="943.6" y2="125.7" stroke="#585858" stroke-opacity="0.075"/><line x1="943.6" y1="125.7" x2="966.3" y2="137.0" stroke="#585858" stroke-opacity="0.100"/><line x1="966.3" y1="137.0" x2="988.6" y2="148.2" stroke="#585858" stroke-opacity="0.125"/><line x1="988.6" y1="148.2" x2="1013.8" y2="160.8" stroke="#585858" stroke-opacity="0.150"/><line x1="881.9" y1="89.7" x2="909.0" y2="102.1" stroke="#585858" stroke-opacity="0.025"/><line x1="909.0" y1="102.1" x2="935.9" y2="114.4" stroke="#585858" stroke-opacity="0.050"/><line x1="935.9" y1="114.4" x2="962.1" y2="126.3" stroke="#585858" stroke-opacity="0.075"/><line x1="962.1" y1="126.3" x2="987.4" y2="137.8" stroke="#585858" stroke-opacity="0.100"/><line x1="987.4" y1="137.8" x2="1012.3" y2="149.2" stroke="#585858" stroke-opacity="0.125"/><line x1="1012.3" y1="149.2" x2="1014.9" y2="150.4" stroke="#585858" stroke-opacity="0.150"/><line x1="891.9" y1="89.7" x2="921.3" y2="102.0" stroke="#585858" stroke-opacity="0.025"/><line x1="921.3" y1="102.0" x2="952.0" y2="114.9" stroke="#585858" stroke-opacity="0.050"/><line x1="952.0" y1="114.9" x2="979.2" y2="126.3" stroke="#585858" stroke-opacity="0.075"/><line x1="979.2" y1="126.3" x2="1008.8" y2="138.7" stroke="#585858" stroke-opacity="0.100"/><line x1="1008.8" y1="138.7" x2="1013.4" y2="140.6" stroke="#585858" stroke-opacity="0.125"/><line x1="901.9" y1="89.7" x2="934.7" y2="102.4" stroke="#585858" stroke-opacity="0.025"/><line x1="934.7" y1="102.4" x2="966.8" y2="114.8" stroke="#585858" stroke-opacity="0.050"/><line x1="966.8" y1="114.8" x2="998.0" y2="126.9" stroke="#585858" stroke-opacity="0.075"/><line x1="998.0" y1="126.9" x2="1014.3" y2="133.2" stroke="#585858" stroke-opacity="0.100"/><line x1="911.9" y1="89.7" x2="947.1" y2="102.3" stroke="#585858" stroke-opacity="0.025"/><line x1="947.1" y1="102.3" x2="983.1" y2="115.3" stroke="#585858" stroke-opacity="0.050"/><line x1="983.1" y1="115.3" x2="1013.1" y2="126.1" stroke="#585858" stroke-opacity="0.075"/><line x1="868.2" y1="71.6" x2="899.3" y2="82.0" stroke="#585858" stroke-opacity="0.100"/><line x1="899.3" y1="82.0" x2="921.9" y2="89.6" stroke="#585858" stroke-opacity="0.125"/><line x1="921.9" y1="89.6" x2="933.8" y2="93.6" stroke="#5b5b5b" stroke-opacity="0.125"/><line x1="933.8" y1="93.6" x2="971.7" y2="106.4" stroke="#5b5b5b" stroke-opacity="0.150"/><line x1="971.7" y1="106.4" x2="1008.4" y2="118.7" stroke="#5b5b5b" stroke-opacity="0.175"/><line x1="1008.4" y1="118.7" x2="1013.9" y2="120.6" stroke="#5f5f5f" stroke-opacity="0.175"/><line x1="931.8" y1="89.6" x2="973.1" y2="102.6" stroke="#585858" stroke-opacity="0.025"/><line x1="973.1" y1="102.6" x2="1014.6" y2="115.8" stroke="#585858" stroke-opacity="0.050"/><line x1="941.8" y1="89.6" x2="986.9" y2="103.0" stroke="#585858" stroke-opacity="0.025"/><line x1="986.9" y1="103.0" x2="1013.6" y2="110.9" stroke="#585858" stroke-opacity="0.050"/><line x1="951.7" y1="89.5" x2="999.4" y2="103.0" stroke="#585858" stroke-opacity="0.025"/><line x1="999.4" y1="103.0" x2="1014.3" y2="107.1" stroke="#585858" stroke-opacity="0.050"/><line x1="961.7" y1="89.5" x2="1013.4" y2="103.3" stroke="#585858" stroke-opacity="0.025"/><line x1="971.6" y1="89.5" x2="1014.0" y2="100.2" stroke="#585858" stroke-opacity="0.025"/><line x1="982.5" y1="89.7" x2="1013.2" y2="97.1" stroke="#585858" stroke-opacity="0.025"/><line x1="992.5" y1="89.7" x2="1013.7" y2="94.6" stroke="#585858" stroke-opacity="0.025"/><line x1="1002.4" y1="89.7" x2="1013.0" y2="92.0" stroke="#585858" stroke-opacity="0.025"/><line x1="1012.4" y1="89.6" x2="1013.5" y2="89.9" stroke="#585858" stroke-opacity="0.025"/><line x1="938.3" y1="72.5" x2="998.0" y2="84.7" stroke="#585858" stroke-opacity="0.100"/><line x1="998.0" y1="84.7" x2="1014.0" y2="87.9" stroke="#585858" stroke-opacity="0.125"/><line x1="1012.4" y1="73.6" x2="1013.2" y2="73.7" stroke="#585858" stroke-opacity="0.075"/><line x1="149.0" y1="61.7" x2="186.2" y2="62.2" stroke="#585858" stroke-opacity="0.050"/><line x1="186.2" y1="62.2" x2="630.0" y2="68.3" stroke="#585858" stroke-opacity="0.075"/><line x1="630.0" y1="68.3" x2="672.9" y2="68.9" stroke="#585858" stroke-opacity="0.050"/><line x1="672.9" y1="68.9" x2="717.5" y2="69.5" stroke="#585858" stroke-opacity="0.025"/><line x1="815.0" y1="70.8" x2="854.7" y2="71.4" stroke="#585858" stroke-opacity="0.025"/><line x1="854.7" y1="71.4" x2="890.2" y2="71.9" stroke="#585858" stroke-opacity="0.050"/><line x1="890.2" y1="71.9" x2="926.8" y2="72.4" stroke="#585858" stroke-opacity="0.075"/><line x1="926.8" y1="72.4" x2="952.7" y2="72.7" stroke="#585858" stroke-opacity="0.100"/><line x1="952.7" y1="72.7" x2="1015.5" y2="73.6" stroke="#585858" stroke-opacity="0.075"/><line x1="112.8" y1="63.0" x2="432.9" y2="67.8" stroke="#585858" stroke-opacity="0.075"/><line x1="432.9" y1="67.8" x2="610.0" y2="70.4" stroke="#585858" stroke-opacity="0.100"/><line x1="610.0" y1="70.4" x2="650.7" y2="71.1" stroke="#585858" stroke-opacity="0.075"/><line x1="650.7" y1="71.1" x2="688.0" y2="71.6" stroke="#585858" stroke-opacity="0.050"/><line x1="688.0" y1="71.6" x2="726.5" y2="72.2" stroke="#585858" stroke-opacity="0.025"/><line x1="807.6" y1="73.4" x2="841.6" y2="73.9" stroke="#585858" stroke-opacity="0.025"/><line x1="841.6" y1="73.9" x2="873.7" y2="74.4" stroke="#585858" stroke-opacity="0.050"/><line x1="873.7" y1="74.4" x2="903.6" y2="74.8" stroke="#585858" stroke-opacity="0.075"/><line x1="903.6" y1="74.8" x2="1014.4" y2="76.5" stroke="#585858" stroke-opacity="0.100"/><line x1="72.3" y1="64.6" x2="319.3" y2="68.6" stroke="#585858" stroke-opacity="0.075"/><line x1="319.3" y1="68.6" x2="635.7" y2="73.7" stroke="#585858" stroke-opacity="0.100"/><line x1="635.7" y1="73.7" x2="667.5" y2="74.2" stroke="#585858" stroke-opacity="0.075"/><line x1="667.5" y1="74.2" x2="700.4" y2="74.8" stroke="#585858" stroke-opacity="0.050"/><line x1="700.4" y1="74.8" x2="739.9" y2="75.4" stroke="#585858" stroke-opacity="0.025"/><line x1="795.9" y1="76.3" x2="829.5" y2="76.9" stroke="#585858" stroke-opacity="0.025"/><line x1="829.5" y1="76.9" x2="857.8" y2="77.3" stroke="#585858" stroke-opacity="0.050"/><line x1="857.8" y1="77.3" x2="883.4" y2="77.7" stroke="#585858" stroke-opacity="0.075"/><line x1="883.4" y1="77.7" x2="1013.2" y2="79.8" stroke="#585858" stroke-opacity="0.100"/><line x1="26.3" y1="66.3" x2="220.2" y2="69.8" stroke="#585858" stroke-opacity="0.075"/><line x1="220.2" y1="69.8" x2="661.2" y2="77.6" stroke="#585858" stroke-opacity="0.100"/><line x1="661.2" y1="77.6" x2="687.9" y2="78.1" stroke="#585858" stroke-opacity="0.075"/><line x1="687.9" y1="78.1" x2="715.4" y2="78.6" stroke="#585858" stroke-opacity="0.050"/><line x1="715.4" y1="78.6" x2="759.4" y2="79.4" stroke="#585858" stroke-opacity="0.025"/><line x1="772.3" y1="79.6" x2="815.2" y2="80.4" stroke="#585858" stroke-opacity="0.025"/><line x1="815.2" y1="80.4" x2="842.4" y2="80.8" stroke="#585858" stroke-opacity="0.050"/><line x1="842.4" y1="80.8" x2="866.7" y2="81.3" stroke="#585858" stroke-opacity="0.075"/><line x1="866.7" y1="81.3" x2="1015.7" y2="83.9" stroke="#585858" stroke-opacity="0.100"/><line x1="-5.6" y1="68.7" x2="126.0" y2="71.3" stroke="#585858" stroke-opacity="0.075"/><line x1="126.0" y1="71.3" x2="414.1" y2="77.0" stroke="#585858" stroke-opacity="0.100"/><line x1="414.1" y1="77.0" x2="659.9" y2="81.8" stroke="#585858" stroke-opacity="0.125"/><line x1="659.9" y1="81.8" x2="682.9" y2="82.3" stroke="#585858" stroke-opacity="0.100"/><line x1="682.9" y1="82.3" x2="706.4" y2="82.7" stroke="#585858" stroke-opacity="0.075"/><line x1="706.4" y1="82.7" x2="733.9" y2="83.3" stroke="#585858" stroke-opacity="0.050"/><line x1="733.9" y1="83.3" x2="798.1" y2="84.5" stroke="#585858" stroke-opacity="0.025"/><line x1="798.1" y1="84.5" x2="824.0" y2="85.1" stroke="#585858" stroke-opacity="0.050"/><line x1="824.0" y1="85.1" x2="846.8" y2="85.5" stroke="#585858" stroke-opacity="0.075"/><line x1="846.8" y1="85.5" x2="866.0" y2="85.9" stroke="#585858" stroke-opacity="0.100"/><line x1="866.0" y1="85.9" x2="1014.3" y2="88.8" stroke="#585858" stroke-opacity="0.125"/><line x1="-5.1" y1="72.4" x2="31.6" y2="73.2" stroke="#585858" stroke-opacity="0.075"/><line x1="31.6" y1="73.2" x2="273.5" y2="78.6" stroke="#585858" stroke-opacity="0.100"/><line x1="273.5" y1="78.6" x2="662.1" y2="87.1" stroke="#585858" stroke-opacity="0.125"/><line x1="662.1" y1="87.1" x2="665.7" y2="87.2" stroke="#585858" stroke-opacity="0.150"/><line x1="665.7" y1="87.2" x2="687.9" y2="87.7" stroke="#585858" stroke-opacity="0.125"/><line x1="687.9" y1="87.7" x2="706.7" y2="88.1" stroke="#585858" stroke-opacity="0.100"/><line x1="706.7" y1="88.1" x2="729.7" y2="88.6" stroke="#585858" stroke-opacity="0.075"/><line x1="729.7" y1="88.6" x2="773.2" y2="89.6" stroke="#585858" stroke-opacity="0.050"/><line x1="773.2" y1="89.6" x2="801.7" y2="90.2" stroke="#5b5b5b" stroke-opacity="0.050"/><line x1="801.7" y1="90.2" x2="822.4" y2="90.7" stroke="#5b5b5b" stroke-opacity="0.075"/><line x1="822.4" y1="90.7" x2="839.3" y2="91.0" stroke="#5b5b5b" stroke-opacity="0.100"/><line x1="839.3" y1="91.0" x2="860.8" y2="91.5" stroke="#5b5b5b" stroke-opacity="0.125"/><line x1="860.8" y1="91.5" x2="873.8" y2="91.8" stroke="#5b5b5b" stroke-opacity="0.150"/><line x1="873.8" y1="91.8" x2="1017.5" y2="94.9" stroke="#5b5b5b" stroke-opacity="0.125"/><line x1="-6.4" y1="77.1" x2="150.0" y2="81.0" stroke="#585858" stroke-opacity="0.100"/><line x1="150.0" y1="81.0" x2="378.6" y2="86.7" stroke="#585858" stroke-opacity="0.125"/><line x1="378.6" y1="86.7" x2="492.2" y2="89.6" stroke="#585858" stroke-opacity="0.150"/><line x1="492.2" y1="89.6" x2="702.8" y2="94.8" stroke="#5b5b5b" stroke-opacity="0.150"/><line x1="702.8" y1="94.8" x2="720.2" y2="95.3" stroke="#5b5b5b" stroke-opacity="0.125"/><line x1="720.2" y1="95.3" x2="742.2" y2="95.8" stroke="#5b5b5b" stroke-opacity="0.100"/><line x1="742.2" y1="95.8" x2="787.6" y2="96.9" stroke="#5b5b5b" stroke-opacity="0.075"/><line x1="787.6" y1="96.9" x2="810.9" y2="97.5" stroke="#5b5b5b" stroke-opacity="0.100"/><line x1="810.9" y1="97.5" x2="825.2" y2="97.9" stroke="#5b5b5b" stroke-opacity="0.125"/><line x1="825.2" y1="97.9" x2="1016.0" y2="102.7" stroke="#5b5b5b" stroke-opacity="0.150"/><line x1="-5.8" y1="83.3" x2="25.4" y2="84.2" stroke="#585858" stroke-opacity="0.100"/><line x1="25.4" y1="84.2" x2="214.4" y2="89.6" stroke="#585858" stroke-opacity="0.125"/><line x1="214.4" y1="89.6" x2="431.0" y2="95.9" stroke="#5b5b5b" stroke-opacity="0.150"/><line x1="431.0" y1="95.9" x2="727.8" y2="104.5" stroke="#5b5b5b" stroke-opacity="0.175"/><line x1="727.8" y1="104.5" x2="801.4" y2="106.6" stroke="#5b5b5b" stroke-opacity="0.150"/><line x1="801.4" y1="106.6" x2="1014.0" y2="112.8" stroke="#5b5b5b" stroke-opacity="0.175"/><line x1="1011.7" y1="117.8" x2="1018.5" y2="118.0" stroke="#585858" stroke-opacity="0.025"/><line x1="1002.3" y1="118.8" x2="1016.3" y2="119.3" stroke="#585858" stroke-opacity="0.025"/><line x1="999.8" y1="120.2" x2="1013.9" y2="120.6" stroke="#585858" stroke-opacity="0.025"/><line x1="163.4" y1="94.4" x2="346.8" y2="100.4" stroke="#585858" stroke-opacity="0.025"/><line x1="990.0" y1="121.3" x2="1018.7" y2="122.2" stroke="#585858" stroke-opacity="0.025"/><line x1="92.2" y1="93.0" x2="398.6" y2="103.2" stroke="#585858" stroke-opacity="0.025"/><line x1="980.0" y1="122.5" x2="1016.3" y2="123.7" stroke="#585858" stroke-opacity="0.025"/><line x1="38.6" y1="92.2" x2="428.2" y2="105.4" stroke="#585858" stroke-opacity="0.025"/><line x1="976.9" y1="123.9" x2="1013.9" y2="125.2" stroke="#585858" stroke-opacity="0.025"/><line x1="-5.0" y1="91.8" x2="62.1" y2="94.1" stroke="#5b5b5b" stroke-opacity="0.125"/><line x1="62.1" y1="94.1" x2="226.3" y2="99.7" stroke="#5b5b5b" stroke-opacity="0.150"/><line x1="226.3" y1="99.7" x2="413.7" y2="106.2" stroke="#5b5b5b" stroke-opacity="0.175"/><line x1="413.7" y1="106.2" x2="782.0" y2="118.8" stroke="#5b5b5b" stroke-opacity="0.200"/><line x1="782.0" y1="118.8" x2="1019.0" y2="127.0" stroke="#5f5f5f" stroke-opacity="0.200"/><line x1="-6.3" y1="92.7" x2="478.8" y2="109.7" stroke="#585858" stroke-opacity="0.025"/><line x1="955.5" y1="126.4" x2="1016.4" y2="128.6" stroke="#585858" stroke-opacity="0.025"/><line x1="-7.7" y1="93.7" x2="499.0" y2="111.9" stroke="#585858" stroke-opacity="0.025"/><line x1="951.8" y1="128.0" x2="1013.8" y2="130.2" stroke="#585858" stroke-opacity="0.025"/><line x1="-6.2" y1="94.9" x2="515.1" y2="113.9" stroke="#585858" stroke-opacity="0.025"/><line x1="940.4" y1="129.4" x2="1019.2" y2="132.3" stroke="#585858" stroke-opacity="0.025"/><line x1="-7.6" y1="96.0" x2="526.8" y2="115.9" stroke="#585858" stroke-opacity="0.025"/><line x1="936.3" y1="131.1" x2="1016.5" y2="134.1" stroke="#585858" stroke-opacity="0.025"/><line x1="-6.0" y1="97.3" x2="544.6" y2="118.2" stroke="#585858" stroke-opacity="0.025"/><line x1="932.1" y1="132.9" x2="1013.7" y2="136.0" stroke="#585858" stroke-opacity="0.025"/><line x1="-7.5" y1="98.5" x2="557.7" y2="120.4" stroke="#585858" stroke-opacity="0.025"/><line x1="919.7" y1="134.4" x2="1019.5" y2="138.3" stroke="#585858" stroke-opacity="0.025"/><line x1="-5.8" y1="99.8" x2="571.5" y2="122.7" stroke="#585858" stroke-opacity="0.025"/><line x1="915.0" y1="136.3" x2="1007.8" y2="140.0" stroke="#585858" stroke-opacity="0.025"/><line x1="1007.8" y1="140.0" x2="1016.6" y2="140.3" stroke="#585858" stroke-opacity="0.050"/><line x1="-7.4" y1="101.1" x2="579.9" y2="124.9" stroke="#585858" stroke-opacity="0.025"/><line x1="901.9" y1="137.9" x2="995.8" y2="141.7" stroke="#585858" stroke-opacity="0.025"/><line x1="995.8" y1="141.7" x2="1013.7" y2="142.4" stroke="#585858" stroke-opacity="0.050"/><line x1="-5.6" y1="102.6" x2="90.8" y2="106.6" stroke="#585858" stroke-opacity="0.025"/><line x1="90.8" y1="106.6" x2="369.8" y2="118.2" stroke="#585858" stroke-opacity="0.050"/><line x1="369.8" y1="118.2" x2="595.2" y2="127.5" stroke="#585858" stroke-opacity="0.025"/><line x1="896.6" y1="139.9" x2="983.4" y2="143.5" stroke="#585858" stroke-opacity="0.025"/><line x1="983.4" y1="143.5" x2="1019.8" y2="145.0" stroke="#585858" stroke-opacity="0.050"/><line x1="-7.3" y1="104.0" x2="42.3" y2="106.1" stroke="#5b5b5b" stroke-opacity="0.150"/><line x1="42.3" y1="106.1" x2="181.3" y2="112.0" stroke="#5b5b5b" stroke-opacity="0.175"/><line x1="181.3" y1="112.0" x2="331.2" y2="118.4" stroke="#5b5b5b" stroke-opacity="0.200"/><line x1="331.2" y1="118.4" x2="341.5" y2="118.8" stroke="#5b5b5b" stroke-opacity="0.225"/><line x1="341.5" y1="118.8" x2="540.1" y2="127.2" stroke="#5f5f5f" stroke-opacity="0.225"/><line x1="540.1" y1="127.2" x2="1016.8" y2="147.4" stroke="#5f5f5f" stroke-opacity="0.250"/><line x1="-5.4" y1="105.7" x2="455.4" y2="125.6" stroke="#585858" stroke-opacity="0.050"/><line x1="455.4" y1="125.6" x2="614.8" y2="132.5" stroke="#585858" stroke-opacity="0.025"/><line x1="885.5" y1="144.3" x2="957.1" y2="147.4" stroke="#585858" stroke-opacity="0.025"/><line x1="957.1" y1="147.4" x2="1013.6" y2="149.8" stroke="#585858" stroke-opacity="0.050"/><line x1="-7.1" y1="107.2" x2="485.6" y2="129.1" stroke="#585858" stroke-opacity="0.050"/><line x1="485.6" y1="129.1" x2="625.5" y2="135.3" stroke="#585858" stroke-opacity="0.025"/><line x1="870.8" y1="146.2" x2="943.2" y2="149.4" stroke="#585858" stroke-opacity="0.025"/><line x1="943.2" y1="149.4" x2="1010.3" y2="152.4" stroke="#585858" stroke-opacity="0.050"/><line x1="1010.3" y1="152.4" x2="1020.1" y2="152.8" stroke="#585858" stroke-opacity="0.075"/><line x1="-5.2" y1="109.0" x2="511.7" y2="132.5" stroke="#585858" stroke-opacity="0.050"/><line x1="511.7" y1="132.5" x2="636.8" y2="138.2" stroke="#585858" stroke-opacity="0.025"/><line x1="864.4" y1="148.6" x2="938.3" y2="151.9" stroke="#585858" stroke-opacity="0.025"/><line x1="938.3" y1="151.9" x2="996.8" y2="154.6" stroke="#585858" stroke-opacity="0.050"/><line x1="996.8" y1="154.6" x2="1016.9" y2="155.5" stroke="#585858" stroke-opacity="0.075"/><line x1="-7.0" y1="110.8" x2="102.4" y2="115.9" stroke="#585858" stroke-opacity="0.050"/><line x1="102.4" y1="115.9" x2="351.3" y2="127.5" stroke="#585858" stroke-opacity="0.075"/><line x1="351.3" y1="127.5" x2="533.0" y2="135.9" stroke="#585858" stroke-opacity="0.050"/><line x1="533.0" y1="135.9" x2="648.8" y2="141.3" stroke="#585858" stroke-opacity="0.025"/><line x1="857.8" y1="151.1" x2="923.5" y2="154.1" stroke="#585858" stroke-opacity="0.025"/><line x1="923.5" y1="154.1" x2="982.8" y2="156.9" stroke="#585858" stroke-opacity="0.050"/><line x1="982.8" y1="156.9" x2="1013.5" y2="158.3" stroke="#585858" stroke-opacity="0.075"/><line x1="-8.8" y1="112.6" x2="43.2" y2="115.0" stroke="#585858" stroke-opacity="0.050"/><line x1="43.2" y1="115.0" x2="408.7" y2="132.5" stroke="#585858" stroke-opacity="0.075"/><line x1="408.7" y1="132.5" x2="555.9" y2="139.6" stroke="#585858" stroke-opacity="0.050"/><line x1="555.9" y1="139.6" x2="661.6" y2="144.6" stroke="#585858" stroke-opacity="0.025"/><line x1="841.5" y1="153.2" x2="908.1" y2="156.4" stroke="#585858" stroke-opacity="0.025"/><line x1="908.1" y1="156.4" x2="968.2" y2="159.3" stroke="#585858" stroke-opacity="0.050"/><line x1="968.2" y1="159.3" x2="1020.6" y2="161.8" stroke="#585858" stroke-opacity="0.075"/><line x1="-6.8" y1="114.7" x2="9.3" y2="115.4" stroke="#585858" stroke-opacity="0.050"/><line x1="9.3" y1="115.4" x2="452.6" y2="137.2" stroke="#585858" stroke-opacity="0.075"/><line x1="452.6" y1="137.2" x2="573.0" y2="143.1" stroke="#585858" stroke-opacity="0.050"/><line x1="573.0" y1="143.1" x2="675.2" y2="148.2" stroke="#585858" stroke-opacity="0.025"/><line x1="834.0" y1="156.0" x2="902.0" y2="159.3" stroke="#585858" stroke-opacity="0.025"/><line x1="902.0" y1="159.3" x2="953.0" y2="161.8" stroke="#585858" stroke-opacity="0.050"/><line x1="953.0" y1="161.8" x2="1006.2" y2="164.4" stroke="#585858" stroke-opacity="0.075"/><line x1="1006.2" y1="164.4" x2="1017.1" y2="164.9" stroke="#585858" stroke-opacity="0.100"/><line x1="-8.7" y1="116.7" x2="148.8" y2="124.6" stroke="#585858" stroke-opacity="0.075"/><line x1="148.8" y1="124.6" x2="299.7" y2="132.2" stroke="#585858" stroke-opacity="0.100"/><line x1="299.7" y1="132.2" x2="486.9" y2="141.7" stroke="#585858" stroke-opacity="0.075"/><line x1="486.9" y1="141.7" x2="591.4" y2="146.9" stroke="#585858" stroke-opacity="0.050"/><line x1="591.4" y1="146.9" x2="689.8" y2="151.9" stroke="#585858" stroke-opacity="0.025"/><line x1="816.6" y1="158.3" x2="885.5" y2="161.8" stroke="#585858" stroke-opacity="0.025"/><line x1="885.5" y1="161.8" x2="937.2" y2="164.4" stroke="#585858" stroke-opacity="0.050"/><line x1="937.2" y1="164.4" x2="991.1" y2="167.1" stroke="#585858" stroke-opacity="0.075"/><line x1="991.1" y1="167.1" x2="1013.4" y2="168.2" stroke="#585858" stroke-opacity="0.100"/><line x1="-6.6" y1="119.0" x2="106.4" y2="124.9" stroke="#585858" stroke-opacity="0.075"/><line x1="106.4" y1="124.9" x2="389.8" y2="139.6" stroke="#585858" stroke-opacity="0.100"/><line x1="389.8" y1="139.6" x2="516.8" y2="146.2" stroke="#585858" stroke-opacity="0.075"/><line x1="516.8" y1="146.2" x2="611.1" y2="151.1" stroke="#585858" stroke-opacity="0.050"/><line x1="611.1" y1="151.1" x2="714.3" y2="156.4" stroke="#585858" stroke-opacity="0.025"/><line x1="798.4" y1="160.8" x2="878.6" y2="164.9" stroke="#585858" stroke-opacity="0.025"/><line x1="878.6" y1="164.9" x2="931.5" y2="167.7" stroke="#585858" stroke-opacity="0.050"/><line x1="931.5" y1="167.7" x2="975.5" y2="170.0" stroke="#585858" stroke-opacity="0.075"/><line x1="975.5" y1="170.0" x2="1009.5" y2="171.7" stroke="#585858" stroke-opacity="0.100"/><line x1="1009.5" y1="171.7" x2="1021.0" y2="172.3" stroke="#585858" stroke-opacity="0.125"/><line x1="-8.6" y1="121.2" x2="73.3" y2="125.6" stroke="#585858" stroke-opacity="0.075"/><line x1="73.3" y1="125.6" x2="443.3" y2="145.4" stroke="#585858" stroke-opacity="0.100"/><line x1="443.3" y1="145.4" x2="541.5" y2="150.6" stroke="#585858" stroke-opacity="0.075"/><line x1="541.5" y1="150.6" x2="632.4" y2="155.5" stroke="#585858" stroke-opacity="0.050"/><line x1="632.4" y1="155.5" x2="860.7" y2="167.7" stroke="#585858" stroke-opacity="0.025"/><line x1="860.7" y1="167.7" x2="914.4" y2="170.5" stroke="#585858" stroke-opacity="0.050"/><line x1="914.4" y1="170.5" x2="959.1" y2="172.9" stroke="#585858" stroke-opacity="0.075"/><line x1="959.1" y1="172.9" x2="993.7" y2="174.8" stroke="#585858" stroke-opacity="0.100"/><line x1="993.7" y1="174.8" x2="1017.3" y2="176.0" stroke="#585858" stroke-opacity="0.125"/><line x1="-6.4" y1="123.9" x2="78.4" y2="128.5" stroke="#5f5f5f" stroke-opacity="0.200"/><line x1="78.4" y1="128.5" x2="195.5" y2="135.0" stroke="#5f5f5f" stroke-opacity="0.225"/><line x1="195.5" y1="135.0" x2="317.3" y2="141.7" stroke="#5f5f5f" stroke-opacity="0.250"/><line x1="317.3" y1="141.7" x2="480.1" y2="150.6" stroke="#5f5f5f" stroke-opacity="0.275"/><line x1="480.1" y1="150.6" x2="664.5" y2="160.8" stroke="#5f5f5f" stroke-opacity="0.300"/><line x1="664.5" y1="160.8" x2="1013.2" y2="179.9" stroke="#626262" stroke-opacity="0.300"/><line x1="-8.5" y1="126.4" x2="5.4" y2="127.2" stroke="#585858" stroke-opacity="0.075"/><line x1="5.4" y1="127.2" x2="142.6" y2="135.0" stroke="#585858" stroke-opacity="0.100"/><line x1="142.6" y1="135.0" x2="426.2" y2="151.0" stroke="#585858" stroke-opacity="0.125"/><line x1="426.2" y1="151.0" x2="520.6" y2="156.4" stroke="#585858" stroke-opacity="0.100"/><line x1="520.6" y1="156.4" x2="597.6" y2="160.8" stroke="#585858" stroke-opacity="0.075"/><line x1="597.6" y1="160.8" x2="670.9" y2="164.9" stroke="#585858" stroke-opacity="0.050"/><line x1="670.9" y1="164.9" x2="822.6" y2="173.5" stroke="#585858" stroke-opacity="0.025"/><line x1="822.6" y1="173.5" x2="877.9" y2="176.7" stroke="#585858" stroke-opacity="0.050"/><line x1="877.9" y1="176.7" x2="924.0" y2="179.3" stroke="#585858" stroke-opacity="0.075"/><line x1="924.0" y1="179.3" x2="959.7" y2="181.3" stroke="#585858" stroke-opacity="0.100"/><line x1="959.7" y1="181.3" x2="996.5" y2="183.4" stroke="#585858" stroke-opacity="0.125"/><line x1="996.5" y1="183.4" x2="1021.6" y2="184.8" stroke="#585858" stroke-opacity="0.150"/><line x1="-6.1" y1="129.3" x2="100.5" y2="135.6" stroke="#585858" stroke-opacity="0.100"/><line x1="100.5" y1="135.6" x2="229.1" y2="143.1" stroke="#585858" stroke-opacity="0.125"/><line x1="229.1" y1="143.1" x2="364.5" y2="151.0" stroke="#585858" stroke-opacity="0.150"/><line x1="364.5" y1="151.0" x2="472.2" y2="157.3" stroke="#585858" stroke-opacity="0.125"/><line x1="472.2" y1="157.3" x2="547.9" y2="161.8" stroke="#585858" stroke-opacity="0.100"/><line x1="547.9" y1="161.8" x2="620.2" y2="166.0" stroke="#585858" stroke-opacity="0.075"/><line x1="620.2" y1="166.0" x2="697.5" y2="170.5" stroke="#585858" stroke-opacity="0.050"/><line x1="697.5" y1="170.5" x2="802.3" y2="176.7" stroke="#585858" stroke-opacity="0.025"/><line x1="802.3" y1="176.7" x2="858.4" y2="179.9" stroke="#585858" stroke-opacity="0.050"/><line x1="858.4" y1="179.9" x2="905.2" y2="182.7" stroke="#585858" stroke-opacity="0.075"/><line x1="905.2" y1="182.7" x2="941.5" y2="184.8" stroke="#585858" stroke-opacity="0.100"/><line x1="941.5" y1="184.8" x2="978.9" y2="187.0" stroke="#585858" stroke-opacity="0.125"/><line x1="978.9" y1="187.0" x2="1004.5" y2="188.5" stroke="#585858" stroke-opacity="0.150"/><line x1="1004.5" y1="188.5" x2="1017.5" y2="189.2" stroke="#585858" stroke-opacity="0.175"/><line x1="-8.4" y1="132.2" x2="63.3" y2="136.5" stroke="#585858" stroke-opacity="0.100"/><line x1="63.3" y1="136.5" x2="184.1" y2="143.8" stroke="#585858" stroke-opacity="0.125"/><line x1="184.1" y1="143.8" x2="431.0" y2="158.8" stroke="#585858" stroke-opacity="0.150"/><line x1="431.0" y1="158.8" x2="514.8" y2="163.8" stroke="#585858" stroke-opacity="0.125"/><line x1="514.8" y1="163.8" x2="577.9" y2="167.6" stroke="#585858" stroke-opacity="0.100"/><line x1="577.9" y1="167.6" x2="644.8" y2="171.7" stroke="#585858" stroke-opacity="0.075"/><line x1="644.8" y1="171.7" x2="837.9" y2="183.4" stroke="#585858" stroke-opacity="0.050"/><line x1="837.9" y1="183.4" x2="885.5" y2="186.2" stroke="#585858" stroke-opacity="0.075"/><line x1="885.5" y1="186.2" x2="922.4" y2="188.5" stroke="#585858" stroke-opacity="0.100"/><line x1="922.4" y1="188.5" x2="947.7" y2="190.0" stroke="#585858" stroke-opacity="0.125"/><line x1="947.7" y1="190.0" x2="986.5" y2="192.4" stroke="#585858" stroke-opacity="0.150"/><line x1="986.5" y1="192.4" x2="1013.1" y2="194.0" stroke="#585858" stroke-opacity="0.175"/><line x1="-5.8" y1="135.6" x2="25.2" y2="137.5" stroke="#585858" stroke-opacity="0.100"/><line x1="25.2" y1="137.5" x2="144.5" y2="145.0" stroke="#585858" stroke-opacity="0.125"/><line x1="144.5" y1="145.0" x2="262.0" y2="152.3" stroke="#585858" stroke-opacity="0.150"/><line x1="262.0" y1="152.3" x2="396.8" y2="160.7" stroke="#585858" stroke-opacity="0.175"/><line x1="396.8" y1="160.7" x2="480.6" y2="166.0" stroke="#585858" stroke-opacity="0.150"/><line x1="480.6" y1="166.0" x2="543.7" y2="169.9" stroke="#585858" stroke-opacity="0.125"/><line x1="543.7" y1="169.9" x2="610.7" y2="174.1" stroke="#585858" stroke-opacity="0.100"/><line x1="610.7" y1="174.1" x2="671.7" y2="177.9" stroke="#585858" stroke-opacity="0.075"/><line x1="671.7" y1="177.9" x2="816.4" y2="187.0" stroke="#585858" stroke-opacity="0.050"/><line x1="816.4" y1="187.0" x2="864.7" y2="190.0" stroke="#585858" stroke-opacity="0.075"/><line x1="864.7" y1="190.0" x2="902.3" y2="192.3" stroke="#585858" stroke-opacity="0.100"/><line x1="902.3" y1="192.3" x2="928.0" y2="193.9" stroke="#585858" stroke-opacity="0.125"/><line x1="928.0" y1="193.9" x2="967.6" y2="196.4" stroke="#585858" stroke-opacity="0.150"/><line x1="967.6" y1="196.4" x2="994.6" y2="198.1" stroke="#585858" stroke-opacity="0.175"/><line x1="994.6" y1="198.1" x2="1022.3" y2="199.8" stroke="#585858" stroke-opacity="0.200"/><line x1="-8.3" y1="138.9" x2="104.1" y2="146.1" stroke="#585858" stroke-opacity="0.125"/><line x1="104.1" y1="146.1" x2="213.2" y2="153.2" stroke="#585858" stroke-opacity="0.150"/><line x1="213.2" y1="153.2" x2="329.8" y2="160.7" stroke="#585858" stroke-opacity="0.175"/><line x1="329.8" y1="160.7" x2="369.5" y2="163.3" stroke="#585858" stroke-opacity="0.200"/><line x1="369.5" y1="163.3" x2="453.9" y2="168.8" stroke="#585858" stroke-opacity="0.175"/><line x1="453.9" y1="168.8" x2="527.0" y2="173.5" stroke="#585858" stroke-opacity="0.150"/><line x1="527.0" y1="173.5" x2="575.4" y2="176.6" stroke="#585858" stroke-opacity="0.125"/><line x1="575.4" y1="176.6" x2="636.6" y2="180.6" stroke="#585858" stroke-opacity="0.100"/><line x1="636.6" y1="180.6" x2="735.1" y2="187.0" stroke="#585858" stroke-opacity="0.075"/><line x1="735.1" y1="187.0" x2="758.2" y2="188.5" stroke="#585858" stroke-opacity="0.050"/><line x1="758.2" y1="188.5" x2="842.9" y2="193.9" stroke="#585858" stroke-opacity="0.075"/><line x1="842.9" y1="193.9" x2="881.1" y2="196.4" stroke="#585858" stroke-opacity="0.100"/><line x1="881.1" y1="196.4" x2="907.3" y2="198.1" stroke="#585858" stroke-opacity="0.125"/><line x1="907.3" y1="198.1" x2="934.0" y2="199.8" stroke="#585858" stroke-opacity="0.150"/><line x1="934.0" y1="199.8" x2="961.3" y2="201.6" stroke="#585858" stroke-opacity="0.175"/><line x1="961.3" y1="201.6" x2="989.2" y2="203.4" stroke="#585858" stroke-opacity="0.200"/><line x1="989.2" y1="203.4" x2="1017.8" y2="205.3" stroke="#585858" stroke-opacity="0.225"/><line x1="-5.5" y1="142.7" x2="62.8" y2="147.3" stroke="#585858" stroke-opacity="0.125"/><line x1="62.8" y1="147.3" x2="170.4" y2="154.5" stroke="#585858" stroke-opacity="0.150"/><line x1="170.4" y1="154.5" x2="278.0" y2="161.7" stroke="#585858" stroke-opacity="0.175"/><line x1="278.0" y1="161.7" x2="444.0" y2="172.9" stroke="#585858" stroke-opacity="0.200"/><line x1="444.0" y1="172.9" x2="509.4" y2="177.3" stroke="#585858" stroke-opacity="0.175"/><line x1="509.4" y1="177.3" x2="558.8" y2="180.6" stroke="#585858" stroke-opacity="0.150"/><line x1="558.8" y1="180.6" x2="610.6" y2="184.1" stroke="#585858" stroke-opacity="0.125"/><line x1="610.6" y1="184.1" x2="676.2" y2="188.5" stroke="#585858" stroke-opacity="0.100"/><line x1="676.2" y1="188.5" x2="807.3" y2="197.2" stroke="#585858" stroke-opacity="0.075"/><line x1="807.3" y1="197.2" x2="845.7" y2="199.8" stroke="#585858" stroke-opacity="0.100"/><line x1="845.7" y1="199.8" x2="885.5" y2="202.5" stroke="#585858" stroke-opacity="0.125"/><line x1="885.5" y1="202.5" x2="912.7" y2="204.3" stroke="#585858" stroke-opacity="0.150"/><line x1="912.7" y1="204.3" x2="940.5" y2="206.2" stroke="#585858" stroke-opacity="0.175"/><line x1="940.5" y1="206.2" x2="969.0" y2="208.1" stroke="#585858" stroke-opacity="0.200"/><line x1="969.0" y1="208.1" x2="983.4" y2="209.1" stroke="#585858" stroke-opacity="0.225"/><line x1="983.4" y1="209.1" x2="1012.9" y2="211.0" stroke="#585858" stroke-opacity="0.250"/><line x1="1012.9" y1="211.0" x2="1027.9" y2="212.0" stroke="#585858" stroke-opacity="0.275"/><line x1="-8.2" y1="146.5" x2="20.6" y2="148.5" stroke="#585858" stroke-opacity="0.125"/><line x1="20.6" y1="148.5" x2="126.7" y2="155.9" stroke="#585858" stroke-opacity="0.150"/><line x1="126.7" y1="155.9" x2="225.3" y2="162.8" stroke="#585858" stroke-opacity="0.175"/><line x1="225.3" y1="162.8" x2="336.2" y2="170.5" stroke="#585858" stroke-opacity="0.200"/><line x1="336.2" y1="170.5" x2="442.8" y2="177.9" stroke="#585858" stroke-opacity="0.225"/><line x1="442.8" y1="177.9" x2="500.7" y2="181.9" stroke="#585858" stroke-opacity="0.200"/><line x1="500.7" y1="181.9" x2="551.6" y2="185.5" stroke="#585858" stroke-opacity="0.175"/><line x1="551.6" y1="185.5" x2="594.1" y2="188.4" stroke="#585858" stroke-opacity="0.150"/><line x1="594.1" y1="188.4" x2="649.7" y2="192.3" stroke="#585858" stroke-opacity="0.125"/><line x1="649.7" y1="192.3" x2="821.9" y2="204.3" stroke="#585858" stroke-opacity="0.100"/><line x1="821.9" y1="204.3" x2="862.4" y2="207.1" stroke="#585858" stroke-opacity="0.125"/><line x1="862.4" y1="207.1" x2="890.1" y2="209.1" stroke="#585858" stroke-opacity="0.150"/><line x1="890.1" y1="209.1" x2="918.5" y2="211.0" stroke="#585858" stroke-opacity="0.175"/><line x1="918.5" y1="211.0" x2="947.5" y2="213.0" stroke="#585858" stroke-opacity="0.200"/><line x1="947.5" y1="213.0" x2="962.3" y2="214.1" stroke="#585858" stroke-opacity="0.225"/><line x1="962.3" y1="214.1" x2="992.4" y2="216.2" stroke="#585858" stroke-opacity="0.250"/><line x1="992.4" y1="216.2" x2="1023.2" y2="218.3" stroke="#585858" stroke-opacity="0.275"/><line x1="-5.2" y1="151.0" x2="81.8" y2="157.3" stroke="#585858" stroke-opacity="0.150"/><line x1="81.8" y1="157.3" x2="179.1" y2="164.3" stroke="#585858" stroke-opacity="0.175"/><line x1="179.1" y1="164.3" x2="280.3" y2="171.7" stroke="#585858" stroke-opacity="0.200"/><line x1="280.3" y1="171.7" x2="384.7" y2="179.2" stroke="#585858" stroke-opacity="0.225"/><line x1="384.7" y1="179.2" x2="441.5" y2="183.3" stroke="#585858" stroke-opacity="0.250"/><line x1="441.5" y1="183.3" x2="491.4" y2="186.9" stroke="#585858" stroke-opacity="0.225"/><line x1="491.4" y1="186.9" x2="543.8" y2="190.7" stroke="#585858" stroke-opacity="0.200"/><line x1="543.8" y1="190.7" x2="587.8" y2="193.9" stroke="#585858" stroke-opacity="0.175"/><line x1="587.8" y1="193.9" x2="645.3" y2="198.1" stroke="#585858" stroke-opacity="0.150"/><line x1="645.3" y1="198.1" x2="731.2" y2="204.3" stroke="#585858" stroke-opacity="0.125"/><line x1="731.2" y1="204.3" x2="744.0" y2="205.2" stroke="#585858" stroke-opacity="0.100"/><line x1="744.0" y1="205.2" x2="824.1" y2="211.0" stroke="#585858" stroke-opacity="0.125"/><line x1="824.1" y1="211.0" x2="866.2" y2="214.1" stroke="#585858" stroke-opacity="0.150"/><line x1="866.2" y1="214.1" x2="895.2" y2="216.2" stroke="#585858" stroke-opacity="0.175"/><line x1="895.2" y1="216.2" x2="909.9" y2="217.2" stroke="#585858" stroke-opacity="0.200"/><line x1="909.9" y1="217.2" x2="939.9" y2="219.4" stroke="#585858" stroke-opacity="0.225"/><line x1="939.9" y1="219.4" x2="955.1" y2="220.5" stroke="#585858" stroke-opacity="0.250"/><line x1="955.1" y1="220.5" x2="986.2" y2="222.7" stroke="#585858" stroke-opacity="0.275"/><line x1="986.2" y1="222.7" x2="1018.1" y2="225.1" stroke="#585858" stroke-opacity="0.300"/><line x1="-8.0" y1="155.4" x2="35.9" y2="158.7" stroke="#585858" stroke-opacity="0.150"/><line x1="35.9" y1="158.7" x2="131.7" y2="166.0" stroke="#585858" stroke-opacity="0.175"/><line x1="131.7" y1="166.0" x2="231.5" y2="173.5" stroke="#585858" stroke-opacity="0.200"/><line x1="231.5" y1="173.5" x2="325.6" y2="180.6" stroke="#585858" stroke-opacity="0.225"/><line x1="325.6" y1="180.6" x2="440.1" y2="189.2" stroke="#585858" stroke-opacity="0.250"/><line x1="440.1" y1="189.2" x2="450.3" y2="190.0" stroke="#585858" stroke-opacity="0.275"/><line x1="450.3" y1="190.0" x2="502.7" y2="193.9" stroke="#585858" stroke-opacity="0.250"/><line x1="502.7" y1="193.9" x2="546.7" y2="197.2" stroke="#585858" stroke-opacity="0.225"/><line x1="546.7" y1="197.2" x2="592.6" y2="200.7" stroke="#585858" stroke-opacity="0.200"/><line x1="592.6" y1="200.7" x2="640.5" y2="204.3" stroke="#585858" stroke-opacity="0.175"/><line x1="640.5" y1="204.3" x2="716.5" y2="210.0" stroke="#585858" stroke-opacity="0.150"/><line x1="716.5" y1="210.0" x2="756.5" y2="213.0" stroke="#585858" stroke-opacity="0.125"/><line x1="756.5" y1="213.0" x2="826.4" y2="218.3" stroke="#585858" stroke-opacity="0.150"/><line x1="826.4" y1="218.3" x2="855.6" y2="220.5" stroke="#585858" stroke-opacity="0.175"/><line x1="855.6" y1="220.5" x2="885.4" y2="222.7" stroke="#585858" stroke-opacity="0.200"/><line x1="885.4" y1="222.7" x2="900.6" y2="223.9" stroke="#585858" stroke-opacity="0.225"/><line x1="900.6" y1="223.9" x2="931.6" y2="226.2" stroke="#585858" stroke-opacity="0.250"/><line x1="931.6" y1="226.2" x2="947.4" y2="227.4" stroke="#585858" stroke-opacity="0.275"/><line x1="947.4" y1="227.4" x2="979.6" y2="229.8" stroke="#585858" stroke-opacity="0.300"/><line x1="979.6" y1="229.8" x2="1029.5" y2="233.6" stroke="#585858" stroke-opacity="0.325"/><line x1="-11.1" y1="160.2" x2="-4.7" y2="160.7" stroke="#5f5f5f" stroke-opacity="0.250"/><line x1="-4.7" y1="160.7" x2="1.7" y2="161.2" stroke="#5f5f5f" stroke-opacity="0.275"/><line x1="1.7" y1="161.2" x2="90.2" y2="168.2" stroke="#626262" stroke-opacity="0.275"/><line x1="90.2" y1="168.2" x2="181.3" y2="175.3" stroke="#626262" stroke-opacity="0.300"/><line x1="181.3" y1="175.3" x2="283.0" y2="183.3" stroke="#626262" stroke-opacity="0.325"/><line x1="283.0" y1="183.3" x2="407.4" y2="193.1" stroke="#626262" stroke-opacity="0.350"/><line x1="407.4" y1="193.1" x2="622.7" y2="210.0" stroke="#626262" stroke-opacity="0.375"/><line x1="622.7" y1="210.0" x2="890.7" y2="231.1" stroke="#626262" stroke-opacity="0.400"/><line x1="890.7" y1="231.1" x2="1024.2" y2="241.5" stroke="#626262" stroke-opacity="0.375"/><line x1="-7.8" y1="165.9" x2="33.2" y2="169.3" stroke="#585858" stroke-opacity="0.175"/><line x1="33.2" y1="169.3" x2="121.9" y2="176.6" stroke="#585858" stroke-opacity="0.200"/><line x1="121.9" y1="176.6" x2="212.4" y2="184.0" stroke="#585858" stroke-opacity="0.225"/><line x1="212.4" y1="184.0" x2="303.5" y2="191.5" stroke="#585858" stroke-opacity="0.250"/><line x1="303.5" y1="191.5" x2="404.5" y2="199.8" stroke="#585858" stroke-opacity="0.275"/><line x1="404.5" y1="199.8" x2="541.0" y2="211.0" stroke="#585858" stroke-opacity="0.300"/><line x1="541.0" y1="211.0" x2="578.1" y2="214.0" stroke="#585858" stroke-opacity="0.275"/><line x1="578.1" y1="214.0" x2="616.6" y2="217.2" stroke="#585858" stroke-opacity="0.250"/><line x1="616.6" y1="217.2" x2="670.1" y2="221.6" stroke="#585858" stroke-opacity="0.225"/><line x1="670.1" y1="221.6" x2="785.4" y2="231.0" stroke="#585858" stroke-opacity="0.200"/><line x1="785.4" y1="231.0" x2="831.7" y2="234.8" stroke="#585858" stroke-opacity="0.225"/><line x1="831.7" y1="234.8" x2="863.6" y2="237.5" stroke="#585858" stroke-opacity="0.250"/><line x1="863.6" y1="237.5" x2="879.9" y2="238.8" stroke="#585858" stroke-opacity="0.275"/><line x1="879.9" y1="238.8" x2="896.4" y2="240.2" stroke="#585858" stroke-opacity="0.300"/><line x1="896.4" y1="240.2" x2="913.2" y2="241.5" stroke="#585858" stroke-opacity="0.325"/><line x1="913.2" y1="241.5" x2="1018.5" y2="250.2" stroke="#585858" stroke-opacity="0.350"/><line x1="-11.2" y1="171.6" x2="76.7" y2="179.2" stroke="#585858" stroke-opacity="0.200"/><line x1="76.7" y1="179.2" x2="158.0" y2="186.2" stroke="#585858" stroke-opacity="0.225"/><line x1="158.0" y1="186.2" x2="247.7" y2="193.9" stroke="#585858" stroke-opacity="0.250"/><line x1="247.7" y1="193.9" x2="336.8" y2="201.5" stroke="#585858" stroke-opacity="0.275"/><line x1="336.8" y1="201.5" x2="435.1" y2="210.0" stroke="#585858" stroke-opacity="0.300"/><line x1="435.1" y1="210.0" x2="556.9" y2="220.4" stroke="#585858" stroke-opacity="0.325"/><line x1="556.9" y1="220.4" x2="596.5" y2="223.8" stroke="#585858" stroke-opacity="0.300"/><line x1="596.5" y1="223.8" x2="637.5" y2="227.4" stroke="#585858" stroke-opacity="0.275"/><line x1="637.5" y1="227.4" x2="802.1" y2="241.5" stroke="#585858" stroke-opacity="0.250"/><line x1="802.1" y1="241.5" x2="834.7" y2="244.3" stroke="#585858" stroke-opacity="0.275"/><line x1="834.7" y1="244.3" x2="851.4" y2="245.7" stroke="#585858" stroke-opacity="0.300"/><line x1="851.4" y1="245.7" x2="885.4" y2="248.7" stroke="#585858" stroke-opacity="0.325"/><line x1="885.4" y1="248.7" x2="902.8" y2="250.2" stroke="#585858" stroke-opacity="0.350"/><line x1="902.8" y1="250.2" x2="1031.5" y2="261.2" stroke="#585858" stroke-opacity="0.375"/><line x1="-7.6" y1="178.5" x2="22.2" y2="181.2" stroke="#585858" stroke-opacity="0.200"/><line x1="22.2" y1="181.2" x2="101.9" y2="188.4" stroke="#585858" stroke-opacity="0.225"/><line x1="101.9" y1="188.4" x2="180.9" y2="195.5" stroke="#585858" stroke-opacity="0.250"/><line x1="180.9" y1="195.5" x2="267.6" y2="203.3" stroke="#585858" stroke-opacity="0.275"/><line x1="267.6" y1="203.3" x2="363.4" y2="212.0" stroke="#585858" stroke-opacity="0.300"/><line x1="363.4" y1="212.0" x2="469.8" y2="221.6" stroke="#585858" stroke-opacity="0.325"/><line x1="469.8" y1="221.6" x2="602.7" y2="233.5" stroke="#585858" stroke-opacity="0.350"/><line x1="602.7" y1="233.5" x2="646.0" y2="237.4" stroke="#585858" stroke-opacity="0.325"/><line x1="646.0" y1="237.4" x2="787.0" y2="250.1" stroke="#585858" stroke-opacity="0.300"/><line x1="787.0" y1="250.1" x2="820.8" y2="253.2" stroke="#585858" stroke-opacity="0.325"/><line x1="820.8" y1="253.2" x2="855.6" y2="256.3" stroke="#585858" stroke-opacity="0.350"/><line x1="855.6" y1="256.3" x2="1025.6" y2="271.7" stroke="#585858" stroke-opacity="0.375"/><line x1="-11.3" y1="185.4" x2="52.4" y2="191.5" stroke="#585858" stroke-opacity="0.225"/><line x1="52.4" y1="191.5" x2="130.7" y2="198.9" stroke="#585858" stroke-opacity="0.250"/><line x1="130.7" y1="198.9" x2="206.8" y2="206.1" stroke="#585858" stroke-opacity="0.275"/><line x1="206.8" y1="206.1" x2="290.1" y2="214.0" stroke="#585858" stroke-opacity="0.300"/><line x1="290.1" y1="214.0" x2="381.7" y2="222.7" stroke="#585858" stroke-opacity="0.325"/><line x1="381.7" y1="222.7" x2="496.1" y2="233.5" stroke="#585858" stroke-opacity="0.350"/><line x1="496.1" y1="233.5" x2="655.5" y2="248.6" stroke="#585858" stroke-opacity="0.375"/><line x1="655.5" y1="248.6" x2="770.6" y2="259.5" stroke="#585858" stroke-opacity="0.350"/><line x1="770.6" y1="259.5" x2="805.6" y2="262.9" stroke="#585858" stroke-opacity="0.375"/><line x1="805.6" y1="262.9" x2="1019.1" y2="283.1" stroke="#585858" stroke-opacity="0.400"/><line x1="-7.3" y1="193.9" x2="69.3" y2="201.5" stroke="#585858" stroke-opacity="0.250"/><line x1="69.3" y1="201.5" x2="143.9" y2="209.0" stroke="#585858" stroke-opacity="0.275"/><line x1="143.9" y1="209.0" x2="225.7" y2="217.1" stroke="#585858" stroke-opacity="0.300"/><line x1="225.7" y1="217.1" x2="304.0" y2="225.0" stroke="#585858" stroke-opacity="0.325"/><line x1="304.0" y1="225.0" x2="402.3" y2="234.8" stroke="#585858" stroke-opacity="0.350"/><line x1="402.3" y1="234.8" x2="511.4" y2="245.7" stroke="#585858" stroke-opacity="0.375"/><line x1="511.4" y1="245.7" x2="683.0" y2="262.8" stroke="#585858" stroke-opacity="0.400"/><line x1="683.0" y1="262.8" x2="1034.3" y2="298.0" stroke="#585858" stroke-opacity="0.425"/><line x1="-11.4" y1="202.4" x2="14.6" y2="205.1" stroke="#585858" stroke-opacity="0.250"/><line x1="14.6" y1="205.1" x2="78.9" y2="211.9" stroke="#585858" stroke-opacity="0.275"/><line x1="78.9" y1="211.9" x2="159.0" y2="220.4" stroke="#585858" stroke-opacity="0.300"/><line x1="159.0" y1="220.4" x2="235.8" y2="228.5" stroke="#585858" stroke-opacity="0.325"/><line x1="235.8" y1="228.5" x2="319.7" y2="237.4" stroke="#585858" stroke-opacity="0.350"/><line x1="319.7" y1="237.4" x2="411.9" y2="247.1" stroke="#585858" stroke-opacity="0.375"/><line x1="411.9" y1="247.1" x2="513.5" y2="257.9" stroke="#585858" stroke-opacity="0.400"/><line x1="513.5" y1="257.9" x2="696.1" y2="277.2" stroke="#585858" stroke-opacity="0.425"/><line x1="696.1" y1="277.2" x2="1027.5" y2="312.2" stroke="#585858" stroke-opacity="0.450"/><line x1="-6.9" y1="212.9" x2="20.9" y2="216.1" stroke="#585858" stroke-opacity="0.275"/><line x1="20.9" y1="216.1" x2="89.8" y2="223.8" stroke="#585858" stroke-opacity="0.300"/><line x1="89.8" y1="223.8" x2="164.9" y2="232.2" stroke="#585858" stroke-opacity="0.325"/><line x1="164.9" y1="232.2" x2="234.9" y2="240.1" stroke="#585858" stroke-opacity="0.350"/><line x1="234.9" y1="240.1" x2="324.2" y2="250.1" stroke="#585858" stroke-opacity="0.375"/><line x1="324.2" y1="250.1" x2="408.0" y2="259.5" stroke="#585858" stroke-opacity="0.400"/><line x1="408.0" y1="259.5" x2="532.1" y2="273.4" stroke="#585858" stroke-opacity="0.425"/><line x1="532.1" y1="273.4" x2="711.1" y2="293.5" stroke="#585858" stroke-opacity="0.450"/><line x1="711.1" y1="293.5" x2="1019.9" y2="328.1" stroke="#585858" stroke-opacity="0.475"/><line x1="-11.5" y1="223.8" x2="28.0" y2="228.5" stroke="#585858" stroke-opacity="0.300"/><line x1="28.0" y1="228.5" x2="91.2" y2="236.0" stroke="#585858" stroke-opacity="0.325"/><line x1="91.2" y1="236.0" x2="159.7" y2="244.2" stroke="#585858" stroke-opacity="0.350"/><line x1="159.7" y1="244.2" x2="234.0" y2="253.1" stroke="#585858" stroke-opacity="0.375"/><line x1="234.0" y1="253.1" x2="315.1" y2="262.8" stroke="#585858" stroke-opacity="0.400"/><line x1="315.1" y1="262.8" x2="403.7" y2="273.4" stroke="#585858" stroke-opacity="0.425"/><line x1="403.7" y1="273.4" x2="518.4" y2="287.1" stroke="#585858" stroke-opacity="0.450"/><line x1="518.4" y1="287.1" x2="707.4" y2="309.7" stroke="#585858" stroke-opacity="0.475"/><line x1="707.4" y1="309.7" x2="959.4" y2="339.8" stroke="#585858" stroke-opacity="0.500"/><line x1="959.4" y1="339.8" x2="1038.1" y2="349.2" stroke="#585858" stroke-opacity="0.475"/><line x1="-6.5" y1="237.3" x2="25.3" y2="241.4" stroke="#585858" stroke-opacity="0.325"/><line x1="25.3" y1="241.4" x2="92.9" y2="250.0" stroke="#585858" stroke-opacity="0.350"/><line x1="92.9" y1="250.0" x2="153.7" y2="257.8" stroke="#585858" stroke-opacity="0.375"/><line x1="153.7" y1="257.8" x2="233.0" y2="267.9" stroke="#585858" stroke-opacity="0.400"/><line x1="233.0" y1="267.9" x2="304.8" y2="277.1" stroke="#585858" stroke-opacity="0.425"/><line x1="304.8" y1="277.1" x2="398.9" y2="289.2" stroke="#585858" stroke-opacity="0.450"/><line x1="398.9" y1="289.2" x2="521.4" y2="304.8" stroke="#585858" stroke-opacity="0.475"/><line x1="521.4" y1="304.8" x2="1030.1" y2="369.8" stroke="#585858" stroke-opacity="0.500"/><line x1="-5.9" y1="269.7" x2="6.3" y2="271.5" stroke="#585858" stroke-opacity="0.375"/><line x1="6.3" y1="271.5" x2="70.1" y2="281.0" stroke="#585858" stroke-opacity="0.400"/><line x1="70.1" y1="281.0" x2="124.9" y2="289.1" stroke="#585858" stroke-opacity="0.425"/><line x1="124.9" y1="289.1" x2="198.9" y2="300.1" stroke="#585858" stroke-opacity="0.450"/><line x1="198.9" y1="300.1" x2="279.6" y2="312.1" stroke="#585858" stroke-opacity="0.475"/><line x1="279.6" y1="312.1" x2="386.8" y2="328.0" stroke="#585858" stroke-opacity="0.500"/><line x1="386.8" y1="328.0" x2="693.0" y2="373.5" stroke="#585858" stroke-opacity="0.525"/><line x1="693.0" y1="373.5" x2="771.6" y2="385.1" stroke="#585858" stroke-opacity="0.550"/><line x1="771.6" y1="385.1" x2="1043.8" y2="425.6" stroke="#585858" stroke-opacity="0.525"/><line x1="-12.0" y1="289.1" x2="41.9" y2="297.8" stroke="#585858" stroke-opacity="0.425"/><line x1="41.9" y1="297.8" x2="114.8" y2="309.6" stroke="#585858" stroke-opacity="0.450"/><line x1="114.8" y1="309.6" x2="178.0" y2="319.8" stroke="#585858" stroke-opacity="0.475"/><line x1="178.0" y1="319.8" x2="282.3" y2="336.6" stroke="#585858" stroke-opacity="0.500"/><line x1="282.3" y1="336.6" x2="442.6" y2="362.5" stroke="#585858" stroke-opacity="0.525"/><line x1="442.6" y1="362.5" x2="1034.2" y2="458.1" stroke="#585858" stroke-opacity="0.550"/><line x1="-5.0" y1="314.6" x2="9.5" y2="317.1" stroke="#585858" stroke-opacity="0.450"/><line x1="9.5" y1="317.1" x2="86.5" y2="330.8" stroke="#585858" stroke-opacity="0.475"/><line x1="86.5" y1="330.8" x2="189.5" y2="349.0" stroke="#585858" stroke-opacity="0.500"/><line x1="189.5" y1="349.0" x2="327.1" y2="373.4" stroke="#585858" stroke-opacity="0.525"/><line x1="327.1" y1="373.4" x2="593.0" y2="420.5" stroke="#585858" stroke-opacity="0.550"/><line x1="593.0" y1="420.5" x2="873.4" y2="470.2" stroke="#585858" stroke-opacity="0.575"/><line x1="873.4" y1="470.2" x2="1022.8" y2="496.6" stroke="#585858" stroke-opacity="0.550"/><line x1="-12.4" y1="342.6" x2="19.9" y2="349.0" stroke="#585858" stroke-opacity="0.475"/><line x1="19.9" y1="349.0" x2="106.7" y2="366.0" stroke="#585858" stroke-opacity="0.500"/><line x1="106.7" y1="366.0" x2="224.3" y2="389.1" stroke="#585858" stroke-opacity="0.525"/><line x1="224.3" y1="389.1" x2="384.3" y2="420.4" stroke="#585858" stroke-opacity="0.550"/><line x1="384.3" y1="420.4" x2="966.4" y2="534.6" stroke="#585858" stroke-opacity="0.575"/><line x1="-21.5" y1="377.1" x2="14.3" y2="385.0" stroke="#585858" stroke-opacity="0.500"/><line x1="14.3" y1="385.0" x2="111.5" y2="406.3" stroke="#585858" stroke-opacity="0.525"/><line x1="111.5" y1="406.3" x2="269.5" y2="441.0" stroke="#585858" stroke-opacity="0.550"/><line x1="269.5" y1="441.0" x2="695.4" y2="534.5" stroke="#585858" stroke-opacity="0.575"/><line x1="-13.0" y1="425.3" x2="28.2" y2="435.6" stroke="#585858" stroke-opacity="0.525"/><line x1="28.2" y1="435.6" x2="141.6" y2="463.8" stroke="#585858" stroke-opacity="0.550"/><line x1="141.6" y1="463.8" x2="424.6" y2="534.4" stroke="#585858" stroke-opacity="0.575"/><line x1="-25.0" y1="482.7" x2="46.9" y2="503.5" stroke="#585858" stroke-opacity="0.550"/><line x1="46.9" y1="503.5" x2="153.8" y2="534.3" stroke="#585858" stroke-opacity="0.575"/></g>
<defs>
 <filter id="grainF" x="100" y="200" width="180" height="150" filterUnits="userSpaceOnUse">
  <feTurbulence type="fractalNoise" baseFrequency="0.5 0.025" numOctaves="2" seed="7" result="n"/>
  <feColorMatrix in="n" type="matrix" values="0 0 0 0 0.42  0 0 0 0 0.28  0 0 0 0 0.14  1.1 0 0 0 -0.45" result="c"/>
  <feComposite in="c" in2="SourceGraphic" operator="in"/>
 </filter>
 <filter id="noiseF" x="0" y="0" width="1" height="1">
  <feTurbulence type="fractalNoise" baseFrequency="0.3" numOctaves="2" seed="2" result="n"/>
  <feColorMatrix in="n" type="matrix" values="0 0 0 0 0.2  0 0 0 0 0.17  0 0 0 0 0.12  1.6 0 0 0 -0.6" result="c"/>
  <feComposite in="c" in2="SourceGraphic" operator="in"/>
 </filter>
 <radialGradient id="ballg" cx="0.38" cy="0.35" r="0.75">
  <stop offset="0" stop-color="#bccb4c"/>
  <stop offset="0.55" stop-color="#abbe38"/>
  <stop offset="1" stop-color="#93a62a"/>
 </radialGradient>
 <linearGradient id="woodL" x1="0" y1="0" x2="1" y2="0">
  <stop offset="0" stop-color="#cca379"/><stop offset="0.6" stop-color="#cda377"/><stop offset="1" stop-color="#c99c6c"/>
 </linearGradient>
 <linearGradient id="woodR" x1="0" y1="0" x2="1" y2="0">
  <stop offset="0" stop-color="#9c764c"/><stop offset="1" stop-color="#a98359"/>
 </linearGradient>
 <linearGradient id="woodT" x1="0" y1="0" x2="1" y2="1">
  <stop offset="0" stop-color="#bba79a"/><stop offset="1" stop-color="#b59f90"/>
 </linearGradient>
 <linearGradient id="torg" x1="0" y1="0" x2="1" y2="0.3">
  <stop offset="0" stop-color="#5d6670"/><stop offset="0.35" stop-color="#6f7b89"/><stop offset="0.6" stop-color="#3a3d40"/><stop offset="1" stop-color="#26282a"/>
 </linearGradient>
 <linearGradient id="torin" x1="0" y1="0" x2="1" y2="1">
  <stop offset="0" stop-color="#2a2c2f"/><stop offset="0.6" stop-color="#4a5360"/><stop offset="1" stop-color="#8a9ab2"/>
 </linearGradient>
 <linearGradient id="axR" gradientUnits="userSpaceOnUse" x1="0" y1="301.5" x2="800" y2="33.5">
  <stop offset="0" stop-color="#b83446" stop-opacity="0.65"/><stop offset="0.45" stop-color="#a03444" stop-opacity="0.48"/><stop offset="0.9" stop-color="#803040" stop-opacity="0.12"/><stop offset="1" stop-color="#803040" stop-opacity="0"/>
 </linearGradient>
 <linearGradient id="axG" gradientUnits="userSpaceOnUse" x1="0" y1="255" x2="1008" y2="392">
  <stop offset="0" stop-color="#5e8a2c" stop-opacity="0.55"/><stop offset="1" stop-color="#6b9a30" stop-opacity="0.78"/>
 </linearGradient>
</defs>
<!-- axes -->
<line x1="0" y1="301.5" x2="800" y2="33.5" stroke="url(#axR)" stroke-width="1.6"/>
<line x1="103" y1="267" x2="1008" y2="391.8" stroke="url(#axG)" stroke-width="1.8"/>
<!-- far-left object -->
<g>
 <rect x="0" y="176" width="8" height="14" fill="#8c8c8a"/>
 <rect x="0" y="190" width="8" height="155" fill="#4d4333"/>
 <rect x="0" y="190" width="8" height="155" fill="#6a5c46" filter="url(#noiseF)" opacity="0.8"/>
 <path d="M0,284 H8 M0,303 H8 M0,309 L8,307" stroke="#8c96a0" stroke-width="0.8" opacity="0.6"/>
 <rect x="30" y="296" width="22" height="20" fill="#3a3026"/>
 <path d="M36,301 L48,297.5" stroke="#9aa6b2" stroke-width="0.9"/>
</g>
<!-- tennis ball -->
<ellipse cx="54" cy="253.5" rx="52" ry="44.5" fill="url(#ballg)"/>
<clipPath id="ballClip"><ellipse cx="54" cy="253.5" rx="52" ry="44.5"/></clipPath>
<path d="M35.5,211.9 Q54.0,214.9 72.5,211.9 M24.1,217.1 Q54.0,220.1 83.9,217.1 M16.9,222.3 Q54.0,225.3 91.1,222.3 M11.8,227.5 Q54.0,230.5 96.2,227.5 M8.0,232.7 Q54.0,235.7 100.0,232.7 M5.3,237.9 Q54.0,240.9 102.7,237.9 M3.4,243.1 Q54.0,246.1 104.6,243.1 M2.4,248.3 Q54.0,251.3 105.6,248.3 M2.0,253.5 Q54.0,256.5 106.0,253.5 M2.4,258.7 Q54.0,261.7 105.6,258.7 M3.4,263.9 Q54.0,266.9 104.6,263.9 M5.3,269.1 Q54.0,272.1 102.7,269.1 M8.0,274.3 Q54.0,277.3 100.0,274.3 M11.8,279.5 Q54.0,282.5 96.2,279.5 M16.9,284.7 Q54.0,287.7 91.1,284.7 M24.1,289.9 Q54.0,292.9 83.9,289.9 M35.5,295.1 Q54.0,298.1 72.5,295.1 M5.0,238.6 Q-7.2,253.5 5.0,268.4 M12.0,227.3 Q1.5,253.5 12.0,279.7 M19.0,220.6 Q10.2,253.5 19.0,286.4 M26.0,216.0 Q19.0,253.5 26.0,291.0 M33.0,212.8 Q27.8,253.5 33.0,294.2 M40.0,210.6 Q36.5,253.5 40.0,296.4 M47.0,209.4 Q45.2,253.5 47.0,297.6 M54.0,209.0 Q54.0,253.5 54.0,298.0 M61.0,209.4 Q62.8,253.5 61.0,297.6 M68.0,210.6 Q71.5,253.5 68.0,296.4 M75.0,212.8 Q80.2,253.5 75.0,294.2 M82.0,216.0 Q89.0,253.5 82.0,291.0 M89.0,220.6 Q97.8,253.5 89.0,286.4 M96.0,227.3 Q106.5,253.5 96.0,279.7 M103.0,238.6 Q115.2,253.5 103.0,268.4" fill="none" stroke="#8a9c28" stroke-width="0.6" opacity="0.2" clip-path="url(#ballClip)"/>
<path d="M80,213.5 C68,212 52,213 43,220 C30,230 27,258 33,276 C37,285 41,291 45,296" stroke="#dcdfcb" stroke-width="3.6" fill="none" opacity="0.9" clip-path="url(#ballClip)"/>
<ellipse cx="54" cy="253.5" rx="52" ry="44.5" fill="#c8d850" filter="url(#noiseF)" opacity="0.15"/>
<!-- wood cube -->
<polygon points="110,233.7 186.8,211.1 261.1,217.9 192.6,243.4" fill="url(#woodT)"/>
<polygon points="110,233.7 192.6,243.4 204.8,342.1 125,329" fill="url(#woodL)"/>
<polygon points="192.6,243.4 261.1,217.9 270.5,306.6 204.8,342.1" fill="url(#woodR)"/>
<g filter="url(#grainF)"><polygon points="110,233.7 192.6,243.4 204.8,342.1 125,329" fill="#000"/><polygon points="192.6,243.4 261.1,217.9 270.5,306.6 204.8,342.1" fill="#000"/></g>
<!-- torus -->
<defs>
  <linearGradient id="tBase" x1="0" y1="0" x2="0" y2="1"><stop offset="0" stop-color="#4e555d"/><stop offset="0.35" stop-color="#36383a"/><stop offset="1" stop-color="#222221"/></linearGradient>
  <linearGradient id="tHi" x1="0" y1="0" x2="0" y2="1"><stop offset="0" stop-color="#7a8590"/><stop offset="0.3" stop-color="#88919a"/><stop offset="0.5" stop-color="#8c877b"/><stop offset="0.66" stop-color="#5a5750"/><stop offset="0.8" stop-color="#2a2a29"/><stop offset="1" stop-color="#242423"/></linearGradient>
  <clipPath id="tClip"><ellipse cx="0" cy="0" rx="32" ry="65.8"/></clipPath>
  <clipPath id="hClip"><ellipse cx="15.4" cy="1.3" rx="12" ry="39"/></clipPath>
 </defs>
<g transform="translate(354 294.3) rotate(9)">
<ellipse cx="0" cy="0" rx="32" ry="65.8" fill="url(#tBase)"/>
<g clip-path="url(#tClip)">
<path fill-rule="evenodd" fill="url(#tHi)" d="M-40,-70 H40 V70 H-40 Z M12,9 m-25,0 a25,57 0 1,0 50,0 a25,57 0 1,0 -50,0 Z"/>
<path fill-rule="evenodd" fill="#37342e" opacity="0.9" d="M-40,-70 H40 V70 H-40 Z M-4,-1 m-29,0 a29,64 0 1,0 58,0 a29,64 0 1,0 -58,0 Z"/>
<path d="M-14,-58 L-2,-63 L6,-57 L17,-62 L22,-52 L12,-47 L4,-52 L-9,-47 Z" fill="#3f454c" opacity="0.9"/>
<path d="M-22,-42 L-10,-47 L-3,-41 L10,-46 L14,-38 L3,-33 L-4,-38 L-18,-33 Z" fill="#3a3f45" opacity="0.85"/>
<g fill="none" stroke="#d4d9de" stroke-linecap="round"><path d="M-9.09,-59.20 A29.5,63 0 0 0 -23.16,36.14" stroke-width="1.0" opacity="0.4"/><path d="M-5.78,-51.38 A25.5,60 0 0 0 -17.08,33.00" stroke-width="0.9" opacity="0.3"/><path d="M-1.50,-42.50 A21,56 0 0 0 -10.73,25.15" stroke-width="0.8" opacity="0.25"/><path d="M-28.1,-27.5 L-10.7,-15.1" stroke-width="1.1" opacity="0.4"/><path d="M-30.5,-11.3 L-12.6,-0.9" stroke-width="1.1" opacity="0.4"/><path d="M-29.1,22.2 L-11.5,28.5" stroke-width="1.1" opacity="0.4"/><path d="M-26.3,34.4 L-9.2,39.2" stroke-width="1.1" opacity="0.4"/>
  <path d="M-16,-50 L-4,-55 L3,-49 L15,-54" stroke-width="1.2" opacity="0.6"/>
  <path d="M-24,-36 L-12,-41 L-5,-35 L8,-40" stroke-width="1.1" opacity="0.55"/>
  <path d="M-31,14 L-17,15" stroke-width="1.6" opacity="0.75"/>
  <path d="M-14,15 L-5,15.5" stroke-width="1.3" opacity="0.55"/>
  <path d="M-26,48 L-14,46 L-4,50" stroke-width="0.9" opacity="0.3"/>
  <path d="M22,-40 C27,-20 28,10 25,30 M26,-48 C31,-25 32,10 29,35" stroke-width="0.8" opacity="0.25"/>
 </g>
</g>
<ellipse cx="15.4" cy="1.3" rx="12" ry="39" fill="#2d2c29"/>
<g clip-path="url(#hClip)">
<ellipse cx="12" cy="17" rx="10" ry="22" fill="#7b8ca2" opacity="0.85"/>
<ellipse cx="13" cy="22" rx="5" ry="12" fill="#8fa0b8" opacity="0.5"/>
<path d="M14,-22 L26,-24 M13,-8 L27,-11 M18,-30 V-12 M23,-30 V-12 M20,2 V16" stroke="#cfd3d6" stroke-width="0.9" opacity="0.45" fill="none"/>
<path d="M6,-10 L12,-10 L12,0 L6,0 Z" fill="#5a5850" opacity="0.7"/>
</g>
<ellipse cx="15.4" cy="1.3" rx="12" ry="39" fill="none" stroke="#1c1c1b" stroke-width="1.1"/>
</g>
<!-- white cube -->
<g stroke="#4a4a4a" stroke-width="0.6" stroke-linejoin="round">
 <polygon points="458.9,287.5 576.4,303 572.9,406.5 460.2,389" fill="#cac8c3"/>
 <polygon points="576.4,303 602.6,270 598.1,358 572.9,406.5" fill="#b2b6b9"/>
 <polygon points="451.1,280.4 496.8,246.9 608.8,259.2 582.4,295.5" fill="#c6c9cc"/>
 <polygon points="451.1,280.4 582.4,295.5 582.4,304.1 451.1,287.4" fill="#cfcdc8"/>
 <polygon points="582.4,295.5 608.8,259.2 608.8,266.8 582.4,304.1" fill="#b3b7ba"/>
 <polygon points="454.7,389.7 460.2,389 572.9,406.5 598.1,358 602.4,357.4 576,410.2" fill="#d8dadb"/>
 <polygon points="454.7,389.7 576,410.2 576,415.8 454.7,395.5" fill="#cfcdc8"/>
 <polygon points="576,410.2 602.4,357.4 603.6,360.4 576,415.8" fill="#b5b9bc"/>
</g>
<path d="M459.9,280.5 L498.1,248.6 L598,258.6" fill="none" stroke="#8c8e90" stroke-width="0.9" stroke-dasharray="1.6 2.4"/>
<!-- origin dot -->
<circle cx="533.2" cy="322.7" r="2" fill="#f5a020" stroke="#3a2a10" stroke-width="0.5"/>
<!-- below-ground grid -->
<clipPath id="belowG">
 <polygon points="122,309 203,322 270,286 271.5,307 205,343.5 124,330"/>
 <polygon points="457,356 574,373 600,325 605,363 577,418 453,397"/>
 <polygon points="318,324 392,316 392,364 318,364"/>
</clipPath>
<use href="#gridg" clip-path="url(#belowG)" opacity="0.55"/>
<!-- 3D cursor -->
<g transform="translate(528.2 372)">
 <circle r="6.3" fill="none" stroke="#f4f4f4" stroke-width="1.4"/>
 <circle r="6.3" fill="none" stroke="#e03c3c" stroke-width="1.4" stroke-dasharray="2.4 2.55" stroke-dashoffset="0.6"/>
 <path d="M-15.5,-1 L-7,0 M7,0.5 L15.5,1.2 M0.6,-16 L0.3,-7 M-0.3,7 L-0.6,15.5" stroke="#4a4a4a" stroke-width="1.2"/>
 <path d="M-15.5,-1 L-13,-0.7 M13,1 L15.5,1.2" stroke="#e84a4a" stroke-width="1.3"/>
 <path d="M0.6,-16 L0.55,-13.5 M-0.55,13 L-0.6,15.5" stroke="#5a8ae0" stroke-width="1.3"/>
 <path d="M-2.5,2 L2.5,-2.5" stroke="#6a9a40" stroke-width="0.9" stroke-dasharray="1.2 0.8"/>
</g>

</svg>
</div>

<!-- left edge -->
<div class="abs" style="left:0;top:0;width:3px;height:523px;background:rgba(30,30,30,0.35)"></div>
<!-- header left -->
<div class="hdr" style="left:0;width:307px;border-radius:0 0 5px 0"></div>
<div class="txt" style="left:7px;top:-1.5px;color:#d0d0d0">Orientación:</div>
<div class="dd" style="left:64px;width:76px"></div>
<svg class="abs" style="left:66px;top:0" width="14" height="11" viewBox="0 0 14 11"><path d="M3.5,0 V6.5 H10" stroke="#bbb" stroke-width="0.9" fill="none"/><circle cx="3.5" cy="6.5" r="1.8" fill="#eee"/><path d="M10,5 L12.5,6.5 L10,8 Z" fill="#bbb"/><path d="M1.5,9 L0.5,10.5" stroke="#bbb" stroke-width="0.8"/></svg>
<div class="txt" style="left:82px;top:-1.5px;color:#e8e8e8">Predefinido</div>
<svg class="abs" style="left:133px;top:1.8px" width="7" height="5" viewBox="0 0 7 5"><path d="M1,1 L3.5,3.5 L6,1" stroke="#ccc" stroke-width="1.1" fill="none"/></svg>
<div class="txt" style="left:149.5px;top:-1.5px;color:#d0d0d0">Arrastrar:</div>
<div class="dd" style="left:197px;width:103px"></div>
<div class="txt" style="left:202px;top:-1.5px;color:#e8e8e8">Seleccionar (Marco)</div>
<svg class="abs" style="left:292px;top:1.8px" width="7" height="5" viewBox="0 0 7 5"><path d="M1,1 L3.5,3.5 L6,1" stroke="#ccc" stroke-width="1.1" fill="none"/></svg>
<!-- header right -->
<div class="hdr" style="left:854px;width:154px;border-radius:0 0 0 5px"></div>
<svg class="abs" style="left:861px;top:0" width="14" height="12" viewBox="0 0 14 12"><path d="M7,0 V12 M6,1 C3,-1 1,1 2,4 C0,6 1,9 3,9 C4,11 6,10 6.5,9 M8,1 C11,-1 13,1 12,4 C14,6 13,9 11,9 C10,11 8,10 7.5,9" stroke="#ddd" stroke-width="0.9" fill="none"/></svg>
<div class="abs" style="left:877px;top:0;width:41px;height:10px;background:#4a4a4a;border-radius:0 0 3px 3px"></div>
<div class="abs" style="left:890.5px;top:0;width:0.8px;height:10px;background:#3a3a3a"></div>
<div class="abs" style="left:904.3px;top:0;width:0.8px;height:10px;background:#3a3a3a"></div>
<div class="txt" style="left:880px;top:-1.5px;color:#ddd;font-size:10px">X</div>
<div class="txt" style="left:894px;top:-1.5px;color:#ddd;font-size:10px">Y</div>
<div class="txt" style="left:908px;top:-1.5px;color:#ddd;font-size:10px">Z</div>
<div class="abs" style="left:923px;top:0;width:15px;height:10px;background:#4a4a4a;border-radius:0 0 3px 3px"></div>
<svg class="abs" style="left:923px;top:0" width="15" height="10" viewBox="0 0 15 10"><rect x="2.5" y="6" width="2.5" height="2.5" fill="none" stroke="#ddd" stroke-width="0.8"/><rect x="10" y="0" width="2.5" height="2" fill="none" stroke="#ddd" stroke-width="0.8"/><path d="M5,6 L10,2" stroke="#ccc" stroke-width="0.8" stroke-dasharray="1.2 1"/></svg>
<div class="dd" style="left:944px;width:56px"></div>
<div class="txt" style="left:949px;top:-1.5px;color:#e8e8e8">Opciones</div>
<svg class="abs" style="left:993px;top:1.8px" width="7" height="5" viewBox="0 0 7 5"><path d="M1,1 L3.5,3.5 L6,1" stroke="#ccc" stroke-width="1.1" fill="none"/></svg>
<!-- viewport info text -->
<div class="txt" style="left:52px;top:20.5px;color:#e6e6e6">Personalizada (perspectiva)</div>
<div class="txt" style="left:52px;top:35.5px;color:#e6e6e6">(1) Cubo | Cubo.001</div>
<!-- TOOLBAR -->
<div class="abs" style="left:0;top:0;width:42px;height:522.5px;overflow:hidden">
<div class="tb" style="top:20.6px;height:54.2px">
<div class="b" style="height:27.1px"><svg width="31" height="27" viewBox="0 0 31 27"><rect x="6.2" y="4.2" width="17" height="16" rx="1.5" fill="none" stroke="#e0a040" stroke-width="1.6" stroke-dasharray="2.6 1.7"/>
<path d="M12.6,8.8 L12.6,17.5 L14.7,15.3 L17.8,15.3 Z" fill="#f0f0f0"/><path d="M28.5,21.5 V24.5 H25.5 Z" fill="#9a9a9a"/></svg></div>
<div class="b" style="height:27.1px"><svg width="31" height="27" viewBox="0 0 31 27"><circle cx="15.1" cy="13.4" r="8.8" fill="none" stroke="#eeeeee" stroke-width="1.5"/>
<circle cx="15.1" cy="13.4" r="8.8" fill="none" stroke="#b8303a" stroke-width="1.5" stroke-dasharray="2.6 4.3" stroke-dashoffset="1.3"/>
<path d="M15.1,8.5 V11.6 M15.1,15.2 V18.3 M10.2,13.4 H13.3 M16.9,13.4 H20" stroke="#9a9a9a" stroke-width="1"/></svg></div>
</div>
<div class="tb" style="top:79.4px;height:108.4px">
<div class="b" style="background:#4772b3;height:27.1px"><svg width="31" height="27" viewBox="0 0 31 27"><g fill="#f0f0f0"><path d="M15.1,3.5 L17.6,6.8 H12.6 Z"/><path d="M15.1,22.3 L17.6,19 H12.6 Z"/><path d="M5.7,12.9 L9,10.4 V15.4 Z"/><path d="M24.5,12.9 L21.2,10.4 V15.4 Z"/></g>
<path d="M15.1,7.3 V10 M15.1,15.8 V18.5 M9.5,12.9 H12.2 M18,12.9 H20.7" stroke="#f0f0f0" stroke-width="1.3"/></svg></div>
<div class="b" style="height:27.1px"><svg width="31" height="27" viewBox="0 0 31 27"><path d="M8.2,12.5 A7,7 0 0 1 20.5,9.2" fill="none" stroke="#e6e6e6" stroke-width="1.3"/>
<path d="M22,16.5 A7,7 0 0 1 9.5,19.2" fill="none" stroke="#e6e6e6" stroke-width="1.3"/>
<path d="M5.5,14.3 L9.9,14.3 L7.7,18 Z" fill="#f0f0f0"/><path d="M20.3,14.3 L24.7,14.3 L22.5,10.5 Z" fill="#f0f0f0"/>
<path d="M15.1,11 L18,13.9 L15.1,16.8 L12.2,13.9 Z" fill="#c8c8c8"/></svg></div>
<div class="b" style="height:27.1px"><svg width="31" height="27" viewBox="0 0 31 27"><rect x="8.8" y="7.6" width="12.4" height="12.4" fill="none" stroke="#d8d8d8" stroke-width="1.2"/>
<rect x="7.8" y="13.4" width="7.5" height="7.5" fill="#eaeaea"/>
<path d="M15.8,12.8 L20.6,8.2" stroke="#d8d8d8" stroke-width="1.2"/><path d="M21,7.8 L17.4,8.4 L20.4,11.4 Z" fill="#e0e0e0"/><path d="M28.5,21.5 V24.5 H25.5 Z" fill="#9a9a9a"/></svg></div>
<div class="b" style="height:27.1px"><svg width="31" height="27" viewBox="0 0 31 27"><circle cx="15.1" cy="13.8" r="7.8" fill="none" stroke="#dedede" stroke-width="1.1" stroke-dasharray="3.2 2.1" stroke-dashoffset="1.5"/>
<rect x="11.6" y="10.3" width="7" height="7" fill="#f0f0f0"/>
<g fill="#f0f0f0"><path d="M15.1,4.2 L17,6.6 H13.2 Z"/><path d="M15.1,23.4 L17,21 H13.2 Z"/><path d="M5.5,13.8 L7.9,11.9 V15.7 Z"/><path d="M24.7,13.8 L22.3,11.9 V15.7 Z"/></g></svg></div>
</div>
<div class="tb" style="top:193.3px;height:54.2px">
<div class="b" style="height:27.1px"><svg width="31" height="27" viewBox="0 0 31 27"><path d="M7.5,17.5 L17.6,6.5 L19.8,8.6 L9.6,19.4 L6.8,20.2 Z" fill="#f0f0f0"/>
<path d="M17.6,6.5 L19.8,8.6" stroke="#555" stroke-width="0.6"/>
<path d="M7.5,21.2 C10.5,22 12,20 14,17.5 C16,15 18.5,14.5 20,16 C21,17 22,18.5 23.5,18.8" fill="none" stroke="#8fd9b0" stroke-width="1.1"/><path d="M28.5,21.5 V24.5 H25.5 Z" fill="#9a9a9a"/></svg></div>
<div class="b" style="height:27.1px"><svg width="31" height="27" viewBox="0 0 31 27"><path d="M14,14.5 L14,21.5 L22.5,21.5 A8,8 0 0 0 14,13.5 Z" fill="#8fd9b0"/>
<path d="M14,13.5 A8,8 0 0 1 22.5,21.5" fill="none" stroke="#e8e8e8" stroke-width="1"/>
<path d="M8.5,4 H11.5 V19 H24 V22.5 H8.5 Z" fill="#f0f0f0"/>
<path d="M9.3,7 H11.5 M9.3,10 H11.5 M9.3,13 H11.5 M9.3,16 H11.5 M14,20 V22.5 M17,20 V22.5 M20,20 V22.5" stroke="#444" stroke-width="0.7"/></svg></div>
</div>
<div class="tb" style="top:252.1px;height:27.1px">
<div class="b" style="height:27.1px"><svg width="31" height="27" viewBox="0 0 31 27"><path d="M5,5.5 H10.5 M7.8,2.8 V8.2" stroke="#8fd9b0" stroke-width="1.6"/>
<path d="M11,12 L14.5,8.5 H24 V17.5 L20.5,21 H11 Z M11,12 H20.5 V21 M20.5,12 L24,8.5" fill="none" stroke="#8fd9b0" stroke-width="1.1" stroke-linejoin="round"/><path d="M28.5,21.5 V24.5 H25.5 Z" fill="#9a9a9a"/></svg></div>
</div>
<div class="tb" style="top:283.8px;height:245.7px">
<div class="b" style="height:27.3px"><svg width="31" height="27" viewBox="0 0 31 27"><path d="M8.5,10 L12.5,6 H22.5 V9 L18.5,13 H8.5 Z" fill="#8fd9b0"/>
<path d="M8.5,10 L12.5,6 H22.5 V18 L18.5,22 H8.5 Z M8.5,10 H18.5 V22 M18.5,10 L22.5,6" fill="none" stroke="#e6e6e6" stroke-width="1.1" stroke-linejoin="round"/><path d="M28.5,21.5 V24.5 H25.5 Z" fill="#9a9a9a"/></svg></div>
<div class="b" style="height:27.3px"><svg width="31" height="27" viewBox="0 0 31 27"><path d="M8.5,10 H18.5 V22 H8.5 Z" fill="#8fd9b0"/><rect x="11.3" y="12.8" width="4.4" height="6.4" fill="#282828"/>
<path d="M8.5,10 L11.3,12.8 M18.5,10 L15.7,12.8 M8.5,22 L11.3,19.2 M18.5,22 L15.7,19.2" stroke="#282828" stroke-width="0.8"/>
<path d="M8.5,10 L12.5,6 H22.5 V18 L18.5,22 H8.5 Z M8.5,10 H18.5 V22 M18.5,10 L22.5,6" fill="none" stroke="#e6e6e6" stroke-width="1.1" stroke-linejoin="round"/></svg></div>
<div class="b" style="height:27.3px"><svg width="31" height="27" viewBox="0 0 31 27"><path d="M8.5,13 L12,9 H18 L20.5,11.5 V13 Z" fill="#8fd9b0"/>
<path d="M8.5,13 V22 H18.5 V13 L22.5,9 V18 L18.5,22 M8.5,13 L12,9 H18 L22.5,9 M8.5,13 H18.5" fill="none" stroke="#e6e6e6" stroke-width="1.1" stroke-linejoin="round"/></svg></div>
<div class="b" style="height:27.3px"><svg width="31" height="27" viewBox="0 0 31 27"><path d="M8.5,10 L12.5,6 H22.5 V18 L18.5,22 H8.5 Z M8.5,10 H18.5 V22 M18.5,10 L22.5,6" fill="none" stroke="#e6e6e6" stroke-width="1.1" stroke-linejoin="round"/>
<path d="M13.5,10 V22 M13.5,10 L17.5,6" stroke="#8fd9b0" stroke-width="1.4"/><path d="M28.5,21.5 V24.5 H25.5 Z" fill="#9a9a9a"/></svg></div>
<div class="b" style="height:27.3px"><svg width="31" height="27" viewBox="0 0 31 27"><path d="M8.5,10 L12.5,6 H22.5 V18 L18.5,22 H8.5 Z M8.5,10 H18.5 V22 M18.5,10 L22.5,6" fill="none" stroke="#e6e6e6" stroke-width="1.1" stroke-linejoin="round"/>
<path d="M14,6.5 L11,13 L15,21" stroke="#8fd9b0" stroke-width="1.1" fill="none"/><circle cx="14" cy="6.5" r="1.2" fill="#8fd9b0"/><circle cx="15" cy="21" r="1.2" fill="#8fd9b0"/><path d="M28.5,21.5 V24.5 H25.5 Z" fill="#9a9a9a"/></svg></div>
<div class="b" style="height:27.3px"><svg width="31" height="27" viewBox="0 0 31 27"><path d="M10,11 L13,6.8 H18 L22,11 L22.5,19.5 L9,19.5 Z" fill="#8fd9b0"/>
<g fill="#f0f0f0"><circle cx="13" cy="6.8" r="1.3"/><circle cx="22" cy="11" r="1.3"/><circle cx="9.5" cy="13" r="1.3"/><circle cx="9" cy="19.5" r="1.3"/><circle cx="22.5" cy="19.5" r="1.3"/></g></svg></div>
<div class="b" style="height:27.3px"><svg width="31" height="27" viewBox="0 0 31 27"><path d="M15,14 L15,5.5 A8.5,8.5 0 1 0 23.5,14 Z" fill="#8fd9b0"/>
<path d="M15,14 L15,22.5 M15,14 L6.5,14 M15,14 L9,8 M15,14 L9,20 M15,14 L21,20 M15,14 L23.5,14" stroke="#282828" stroke-width="0.9"/>
<path d="M16.5,4.5 L19,5.5 L21.5,7.5 L23,10 L17.5,12.5 Z" fill="none" stroke="#e0e0e0" stroke-width="0.9"/></svg></div>
<div class="b" style="height:27.3px"><svg width="31" height="27" viewBox="0 0 31 27"><path d="M8,10 C8,5.5 22,5.5 22,10 L22.5,17 C22.5,21.5 8,21.5 8,17 Z" fill="#d4c0ea"/>
<path d="M15,6.5 V20.5 M8,13.5 C12,12 18,12 22.3,13.5" stroke="#444" stroke-width="0.8" fill="none"/><path d="M28.5,21.5 V24.5 H25.5 Z" fill="#9a9a9a"/></svg></div>
<div class="b" style="height:27.3px"><svg width="31" height="27" viewBox="0 0 31 27"><path d="M7,4.5 L8.5,2.5 L10,4.5 L8.5,6.5 Z" fill="#d4c0ea"/>
<path d="M9,12 L12.5,8.5 H22.5 V22 M9,12 V23 M9,12 H18.5 V23 M18.5,12 L22.5,8.5" fill="none" stroke="#e6e6e6" stroke-width="1.1"/>
<path d="M11,23 V13.5 L14,10.5" fill="none" stroke="#d4c0ea" stroke-width="1.1"/></svg></div>
</div>
</div>
<!-- gizmo -->
<svg class="abs" style="left:930px;top:15px" width="80" height="80" viewBox="930 15 80 80">
 <circle cx="944" cy="50.4" r="6" fill="#4a5a2e" fill-opacity="0.55" stroke="#7aa12e" stroke-width="1"/>
 <circle cx="977" cy="46.2" r="6" fill="#4a3a3e" fill-opacity="0.35" stroke="#9c3446" stroke-width="1"/>
 <circle cx="968.2" cy="77.5" r="6" fill="#34465e" fill-opacity="0.55" stroke="#3a74c0" stroke-width="1"/>
 <line x1="968.2" y1="52.9" x2="968.2" y2="31" stroke="#3f86dd" stroke-width="1.6"/>
 <line x1="968.2" y1="52.9" x2="990" y2="55.4" stroke="#72b82a" stroke-width="1.6"/>
 <line x1="968.2" y1="52.9" x2="962" y2="58" stroke="#e8344e" stroke-width="1.6"/>
 <circle cx="968.2" cy="28.3" r="6.6" fill="#3a8ce6"/>
 <circle cx="992.5" cy="55.7" r="6.6" fill="#72c11e"/>
 <circle cx="959.5" cy="59.9" r="6.6" fill="#f03452"/>
 <text x="968.2" y="31.8" font-family="Liberation Sans" font-size="9" font-weight="bold" text-anchor="middle" fill="#13223a">Z</text>
 <text x="992.5" y="59.2" font-family="Liberation Sans" font-size="9" font-weight="bold" text-anchor="middle" fill="#1f3508">Y</text>
 <text x="959.5" y="63.4" font-family="Liberation Sans" font-size="9" font-weight="bold" text-anchor="middle" fill="#4a0c18">X</text>
</svg>
<div class="abs" style="left:1000.5px;top:31px;width:7.5px;height:14px;background:rgba(40,40,40,0.8);border-radius:3px 0 0 3px"></div>
<svg class="abs" style="left:1001px;top:33px" width="7" height="10" viewBox="0 0 7 10"><path d="M5,1.5 L2,5 L5,8.5" stroke="#bbb" stroke-width="1" fill="none"/></svg>
<!-- nav buttons -->
<div class="nav" style="top:86.2px"><svg width="21" height="21" viewBox="0 0 21 21"><circle cx="9" cy="9" r="4.8" fill="none" stroke="#ddd" stroke-width="1.5"/><path d="M12.5,12.5 L16.5,16.5" stroke="#ddd" stroke-width="2.2" stroke-linecap="round"/><path d="M9,6.5 V11.5 M6.5,9 H11.5" stroke="#ddd" stroke-width="1.2"/></svg></div>
<div class="nav" style="top:110.2px"><svg width="21" height="21" viewBox="0 0 21 21"><path d="M6,11 L6,6.5 C6,5.5 7.5,5.5 7.5,6.5 L7.8,10 L8,4.5 C8,3.5 9.6,3.5 9.6,4.5 L9.8,10 L10.2,4 C10.2,3 11.8,3 11.8,4 L11.8,10 L12.6,5.2 C12.7,4.2 14.2,4.4 14.1,5.4 L13.6,11 L15,9.5 C15.8,8.7 17,9.6 16.2,10.5 L13,15 C12,16.5 10.5,17 9,17 C7,17 6,15 6,13 Z" fill="#e6e6e6"/></svg></div>
<div class="nav" style="top:134.4px"><svg width="21" height="21" viewBox="0 0 21 21"><circle cx="7.8" cy="7.6" r="2.6" fill="none" stroke="#ddd" stroke-width="1.2"/><circle cx="12.6" cy="7" r="2.6" fill="none" stroke="#ddd" stroke-width="1.2"/><path d="M5,7.5 C4.5,4.5 9,3.5 10.5,5 C11.5,3 16,3.5 15.5,7 C15.5,9 13.5,10.5 10.5,10 L6.5,10 C5.5,10 5,9 5,7.5" fill="none" stroke="#ddd" stroke-width="1.2"/><rect x="6.5" y="11" width="6.5" height="4.5" fill="#e6e6e6"/><path d="M13,13.2 L16,11.2 V15.2 Z" fill="none" stroke="#ddd" stroke-width="1"/><circle cx="5.5" cy="12.5" r="1.1" fill="#ddd"/></svg></div>
<div class="nav" style="top:158.1px"><svg width="21" height="21" viewBox="0 0 21 21"><path d="M7,5 H14 L16.5,16 H4.5 Z M5.5,11 H15.5 M6.3,8 H14.7 M9.2,5 L8.5,16 M11.8,5 L12.5,16" fill="none" stroke="#e6e6e6" stroke-width="1.1"/></svg></div>
<!-- RIGHT PANEL -->
<div class="abs" style="left:1009px;top:0;width:15px;height:257px;background:#1e1e1e;border-radius:0 0 0 5px"></div>
<div class="abs" style="left:1018.5px;top:32px;width:3px;height:3px;border-radius:50%;background:#f0f0f0"></div>
<div class="abs" style="left:1018.5px;top:64.3px;width:3px;height:3px;border-radius:50%;background:#f0f0f0"></div>
<div class="abs" style="left:1018.5px;top:80.3px;width:3px;height:3px;border-radius:50%;background:#f0f0f0"></div>
<div class="abs" style="left:1018.5px;top:96.5px;width:3px;height:3px;border-radius:50%;background:#f0f0f0"></div>
<div class="abs" style="left:1018.5px;top:128px;width:3px;height:3px;border-radius:50%;background:#f0f0f0"></div>
<div class="abs" style="left:1018.5px;top:160.3px;width:3px;height:3px;border-radius:50%;background:#f0f0f0"></div>
<div class="abs" style="left:1013.5px;top:107.5px;width:11px;height:13.5px;background:#3b5f9a;border-radius:2px"></div>
<svg class="abs" style="left:1013.5px;top:107.5px" width="11" height="14" viewBox="0 0 11 14"><rect x="2" y="3" width="8" height="8" fill="none" stroke="#cfe0ff" stroke-width="0.9"/><rect x="8" y="1.5" width="3" height="3" fill="#fff"/></svg>
<div class="abs" style="left:1009px;top:261.2px;width:15px;height:306px;background:#1d1d1d;border-radius:5px 0 0 5px"></div>
<div class="abs" style="left:1009px;top:261.2px;width:15px;height:20.4px;background:#2e2e2e;border-radius:5px 0 0 0"></div>
<div class="abs" style="left:1022px;top:265.5px;width:4px;height:4px;border-radius:50%;background:#eee"></div>
<div class="abs" style="left:1022px;top:271.5px;width:4px;height:4px;border-radius:50%;background:#eee"></div>
<div class="abs" style="left:1009px;top:281.6px;width:15px;height:5px;background:#181818"></div>
<svg class="abs" style="left:1009px;top:286px" width="15" height="284" viewBox="1009 286 15 284">
 <g fill="none" stroke="#e0e0e0" stroke-width="1">
  <path d="M1019,294 V300" stroke-width="1.2"/><circle cx="1019" cy="302.5" r="2.2" fill="#e0e0e0" stroke="none"/><path d="M1023.5,293 V297"/>
  <path d="M1017.5,325 H1026 V332 H1017.5 Z M1019,325 V323 H1023 V325" />
  <path d="M1017.5,346 H1026 V350 H1017.5 Z M1019.5,350 V355 H1026"/>
  <path d="M1019,368 H1026 V376 H1019 Z M1017.5,370 V378 H1024"/>
  <path d="M1017.5,439 H1026 V441.5 H1017.5 Z M1018.5,441.5 V450 H1026 M1021,444.5 H1024"/>
 </g>
 <path d="M1020.5,389.5 L1017,399 H1023 Z" fill="#e0e0e0"/><circle cx="1023.5" cy="397" r="2.5" fill="none" stroke="#e0e0e0" stroke-width="1"/>
 <circle cx="1023" cy="416.5" r="5.5" fill="#c04858"/><path d="M1019,414 C1021,412 1023,415 1025,413 M1020,419 C1022,417 1024,420 1026,418" stroke="#2a1a1e" stroke-width="1" fill="none"/>
 <rect x="1012.5" y="462" width="14" height="21" rx="4" fill="#2c2c2c"/>
 <rect x="1019.5" y="469" width="6" height="8" fill="#e8963a"/><path d="M1019,467.5 H1017.5 V470 M1017.5,476 V478.5 H1019" stroke="#e8963a" stroke-width="1" fill="none"/>
 <g stroke="#4f8ae0" fill="#4f8ae0">
  <circle cx="1022.5" cy="493.5" r="3" fill="none" stroke-width="2"/><path d="M1020.5,496 L1017.5,500" stroke-width="2" stroke-linecap="round"/>
  <circle cx="1019" cy="514" r="2.2" stroke="none"/><path d="M1019,516 V523 M1020,514 L1024,518 M1020.5,515 L1024,513" stroke-width="1" fill="none"/>
  <circle cx="1023" cy="540.8" r="5.3" fill="none" stroke-width="1.2"/><circle cx="1024" cy="540.8" r="2.8" stroke="none"/>
  <path d="M1017,566 C1017,561 1022,557.5 1026,557.5 M1019.5,568 C1019.5,564 1022,562 1025,562" fill="none" stroke-width="1.1"/><circle cx="1023.5" cy="566" r="1.8" fill="none" stroke-width="1"/>
 </g>
</svg>

<!-- TIMELINE -->
<div id="tl">
 <div id="tlh"></div>
</div>
<div class="btn" style="left:5.6px;top:528.3px;width:25.5px;height:15px;background:#262626;border-radius:3px"></div>
<svg class="abs" style="left:9px;top:529.5px" width="13" height="13" viewBox="0 0 13 13"><circle cx="6.5" cy="6.5" r="5.6" fill="#f2f2f2"/><path d="M7.8,3.2 L4.8,6.5 L7.8,9.8" stroke="#262626" stroke-width="1.6" fill="none"/></svg>
<svg class="abs" style="left:23.5px;top:534px" width="7" height="5" viewBox="0 0 7 5"><path d="M1,1 L3.5,3.5 L6,1" stroke="#ccc" stroke-width="1.1" fill="none"/></svg>
<div class="txt" style="left:41.5px;top:531.3px;color:#e0e0e0;font-size:9.4px;">Vista</div>
<div class="txt" style="left:74.5px;top:531.3px;color:#e0e0e0;font-size:9.4px;">Marcador</div>
<div class="btn" style="left:125px;top:528.3px;width:76px;height:15px;background:#262626;border-radius:3px"></div>
<div class="txt" style="left:130.5px;top:531.3px;color:#e0e0e0;font-size:9.4px;">Reproducción</div>
<svg class="abs" style="left:193px;top:534px" width="7" height="5" viewBox="0 0 7 5"><path d="M1,1 L3.5,3.5 L6,1" stroke="#ccc" stroke-width="1.1" fill="none"/></svg>
<div class="btn" style="left:386.4px;top:528.3px;width:30px;height:15px;background:#2a2a2a;border-radius:3px"></div>
<div class="btn" style="left:386.4px;top:528.3px;width:15.1px;height:15px;background:#545454;border-radius:3px 0 0 3px"></div>
<svg class="abs" style="left:386.4px;top:528.3px" width="15" height="15" viewBox="0 0 15 15"><circle cx="7.5" cy="7.5" r="3.7" fill="none" stroke="#bdbdbd" stroke-width="1.1"/></svg>
<svg class="abs" style="left:405.5px;top:534px" width="7" height="5" viewBox="0 0 7 5"><path d="M1,1 L3.5,3.5 L6,1" stroke="#5a5a5a" stroke-width="1.1" fill="none"/></svg>
<div class="btn" style="left:422.2px;top:528.3px;width:94.8px;height:15px;background:#545454;border-radius:3px"></div>
<div class="abs" style="left:438.0px;top:528.3px;width:0.8px;height:15px;background:#474747"></div>
<div class="abs" style="left:453.8px;top:528.3px;width:0.8px;height:15px;background:#474747"></div>
<div class="abs" style="left:469.6px;top:528.3px;width:0.8px;height:15px;background:#474747"></div>
<div class="abs" style="left:485.4px;top:528.3px;width:0.8px;height:15px;background:#474747"></div>
<div class="abs" style="left:501.2px;top:528.3px;width:0.8px;height:15px;background:#474747"></div>
<div class="btn" style="left:422.2px;top:527.9px;width:95.1px;height:15.2px;background:#545454;border-radius:3px"></div>
<div class="abs" style="left:437.4px;top:527.9px;width:0.8px;height:15.2px;background:#4a4a4a"></div>
<div class="abs" style="left:453.7px;top:527.9px;width:0.8px;height:15.2px;background:#4a4a4a"></div>
<div class="abs" style="left:469.6px;top:527.9px;width:0.8px;height:15.2px;background:#4a4a4a"></div>
<div class="abs" style="left:485.7px;top:527.9px;width:0.8px;height:15.2px;background:#4a4a4a"></div>
<div class="abs" style="left:501.9px;top:527.9px;width:0.8px;height:15.2px;background:#4a4a4a"></div>
<svg class="abs" style="left:422.2px;top:527.9px" width="16" height="15.2" viewBox="0 0 16 15.2"><path d="M3.2,3.5 H5.1 V12.2 H3.2 Z M11,4.2 V11.5 L5.6,7.85 Z" fill="#e8e8e8"/></svg>
<svg class="abs" style="left:437.8px;top:527.9px" width="16" height="15.2" viewBox="0 0 16 15.2"><path d="M1.7,7.85 L5.2,4 L8.7,7.85 L5.2,11.7 Z M14.4,4.6 V11.1 L10.6,7.85 Z" fill="#e8e8e8"/></svg>
<svg class="abs" style="left:454.1px;top:527.9px" width="16" height="15.2" viewBox="0 0 16 15.2"><path d="M12.7,3 V12.7 L4.4,7.85 Z" fill="#e8e8e8"/></svg>
<svg class="abs" style="left:470.0px;top:527.9px" width="16" height="15.2" viewBox="0 0 16 15.2"><path d="M4.4,3 V12.7 L12.7,7.85 Z" fill="#e8e8e8"/></svg>
<svg class="abs" style="left:486.1px;top:527.9px" width="16" height="15.2" viewBox="0 0 16 15.2"><path d="M1.8,4.6 V11.1 L5.6,7.85 Z M7.1,7.85 L10.6,4 L14.1,7.85 L10.6,11.7 Z" fill="#e8e8e8"/></svg>
<svg class="abs" style="left:502.3px;top:527.9px" width="16" height="15.2" viewBox="0 0 16 15.2"><path d="M4.7,4.2 V11.5 L10.1,7.85 Z M10.1,3.5 H12 V12.2 H10.1 Z" fill="#e8e8e8"/></svg>
<div class="btn" style="left:522.2px;top:528.2px;width:46.6px;height:14.6px;background:#2a2a2a;border-radius:3px"></div>
<div class="btn" style="left:522.2px;top:528.2px;width:30.8px;height:14.6px;background:#545454;border-radius:3px 0 0 3px"></div>
<div class="abs" style="left:537.3px;top:528.2px;width:0.8px;height:14.6px;background:#4a4a4a"></div>
<svg class="abs" style="left:522.2px;top:528.2px" width="31" height="15" viewBox="0 0 31 15"><path d="M3.5,7.45 L8.1,4.2 V10.7 Z M9.5,4.2 H11.8 V10.7 H9.5 Z" fill="#e8e8e8"/><path d="M19.2,4.2 H21.1 V10.7 H19.2 Z M22.5,4.2 V10.7 L27.6,7.45 Z" fill="#e8e8e8"/></svg>
<svg class="abs" style="left:558px;top:534.5px" width="7" height="5" viewBox="0 0 7 5"><path d="M1,1 L3.5,3.5 L6,1" stroke="#ccc" stroke-width="1.1" fill="none"/></svg>
<div class="btn" style="left:574.2px;top:528.2px;width:30.8px;height:14.6px;background:#2a2a2a;border-radius:3px"></div>
<div class="btn" style="left:574.2px;top:528.2px;width:15px;height:14.6px;background:#545454;border-radius:3px 0 0 3px"></div>
<svg class="abs" style="left:574.2px;top:528.2px" width="15" height="15" viewBox="0 0 15 15"><path d="M3.3,10 V7 A4.2,4.2 0 0 1 11.7,7 V10 M5.2,10 V7 A2.3,2.3 0 0 1 9.8,7 V10" fill="none" stroke="#b0b0b0" stroke-width="0.9"/><path d="M2,12 H13" stroke="#a8a8a8" stroke-width="1"/></svg>
<svg class="abs" style="left:594px;top:534.5px" width="7" height="5" viewBox="0 0 7 5"><path d="M1,1 L3.5,3.5 L6,1" stroke="#ccc" stroke-width="1.1" fill="none"/></svg>
<div class="btn" style="left:739.5px;top:528.3px;width:58.2px;height:15px;background:#545454;border-radius:3px"></div>
<div class="txt" style="left:768px;top:531.3px;color:#e0e0e0;font-size:9.4px;transform:translateX(-50%)">1</div>
<div class="btn" style="left:803px;top:528.3px;width:154px;height:15px;background:#545454;border-radius:3px"></div>
<div class="btn" style="left:803px;top:528.3px;width:15px;height:15px;background:#3c3c3c;border-radius:3px 0 0 3px"></div>
<svg class="abs" style="left:803px;top:528.3px" width="15" height="15" viewBox="0 0 15 15"><circle cx="7.5" cy="8.3" r="4.6" fill="none" stroke="#e6e6e6" stroke-width="1.1"/><path d="M6,2.3 H9 M7.5,2.3 V3.7 M7.5,8.3 L9.5,6.3 M11.2,3.8 L12.3,4.9" stroke="#e6e6e6" stroke-width="1.1"/></svg>
<div class="abs" style="left:892px;top:528.3px;width:0.8px;height:15px;background:#474747"></div>
<div class="txt" style="left:830.5px;top:531.3px;color:#e0e0e0;font-size:9.4px;">Inicio</div>
<div class="txt" style="left:878px;top:531.3px;color:#e0e0e0;font-size:9.4px;transform:translateX(-50%)">1</div>
<div class="txt" style="left:904px;top:531.3px;color:#e0e0e0;font-size:9.4px;">Fin</div>
<div class="txt" style="left:938px;top:531.3px;color:#e0e0e0;font-size:9.4px;transform:translateX(-50%)">250</div>
<div class="btn" style="left:970.5px;top:528.3px;width:29.5px;height:15px;background:#2b2b2b;border-radius:3px"></div>
<div class="btn" style="left:970.5px;top:528.3px;width:15px;height:15px;background:#4772b3;border-radius:3px 0 0 3px"></div>
<svg class="abs" style="left:970.5px;top:528.3px" width="15" height="15" viewBox="0 0 15 15"><circle cx="8.3" cy="6.8" r="4.3" fill="#f2f2f2"/><circle cx="6" cy="9.3" r="3.3" fill="none" stroke="#f2f2f2" stroke-width="1"/><circle cx="8.8" cy="6.3" r="1" fill="#4772b3"/></svg>
<svg class="abs" style="left:989px;top:534px" width="7" height="5" viewBox="0 0 7 5"><path d="M1,1 L3.5,3.5 L6,1" stroke="#ccc" stroke-width="1.1" fill="none"/></svg>
<div class="abs" style="left:28.4px;top:547px;width:18.3px;height:16px;background:#4772b3;border-radius:3px"></div>
<div class="num" style="left:37.5px;color:#ffffff">1</div>
<div class="abs" style="left:0;top:563.7px;width:1008px;height:4px;background:#262626"></div>
<div class="num" style="left:78.25px">12</div>
<div class="num" style="left:123.25px">24</div>
<div class="num" style="left:168.25px">36</div>
<div class="num" style="left:213.25px">48</div>
<div class="num" style="left:258.25px">60</div>
<div class="num" style="left:303.25px">72</div>
<div class="num" style="left:348.25px">84</div>
<div class="num" style="left:393.25px">96</div>
<div class="num" style="left:438.25px">108</div>
<div class="num" style="left:483.25px">120</div>
<div class="num" style="left:528.25px">132</div>
<div class="num" style="left:573.25px">144</div>
<div class="num" style="left:618.25px">156</div>
<div class="num" style="left:663.25px">168</div>
<div class="num" style="left:708.25px">180</div>
<div class="num" style="left:753.25px">192</div>
<div class="num" style="left:798.25px">204</div>
<div class="num" style="left:843.25px">216</div>
<div class="num" style="left:888.25px">228</div>
<div class="num" style="left:933.25px">240</div>
<div class="num" style="left:978.25px">252</div>

</body></html>
